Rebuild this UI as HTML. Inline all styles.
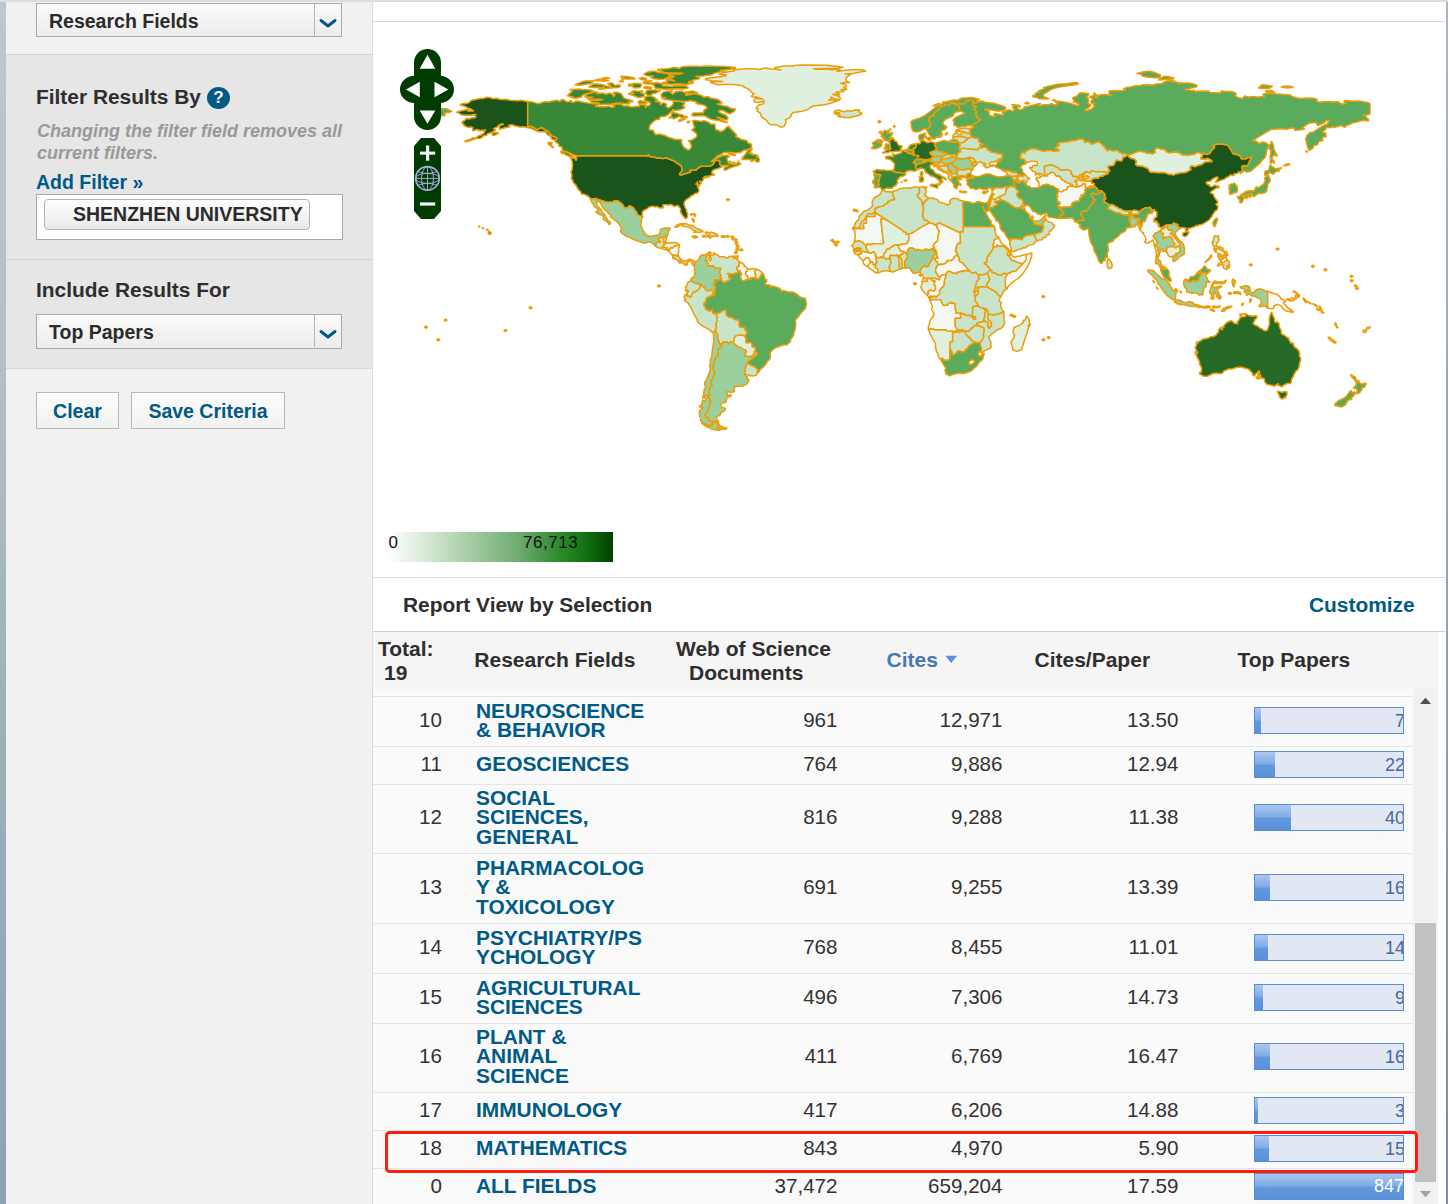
<!DOCTYPE html>
<html lang="en">
<head>
<meta charset="utf-8">
<title>Essential Science Indicators</title>
<style>
html,body{margin:0;padding:0;}
body{width:1448px;height:1204px;position:relative;overflow:hidden;background:#fff;font-family:"Liberation Sans",sans-serif;color:#333;}
.abs{position:absolute;}
#topstrip{left:0;top:0;width:1448px;height:2px;background:#dddddd;}
#leftstrip{left:0;top:2px;width:6px;height:1202px;background:linear-gradient(#bcc8d0 0%,#b2c0c9 30%,#9fb0bb 58%,#8fa2ae 100%);}
#side{left:6px;top:2px;width:366px;height:1202px;background:#f1f1f1;}
#sideline{left:372px;top:2px;width:1px;height:1202px;background:#dcdcdc;}
.sec{left:6px;width:366px;background:#e6e6e6;border-top:1px solid #d2d2d2;}
.sel{left:36px;width:304px;height:32px;border:1px solid #a9a9a9;background:linear-gradient(#fbfbfb,#ececec);}
.sel .t{position:absolute;left:12px;top:1px;line-height:33px;font-size:19.5px;font-weight:bold;color:#2b2b2b;white-space:nowrap;}
.sel .d{position:absolute;left:277px;top:0;width:1px;height:32px;background:#b5b5b5;}
.sel svg{position:absolute;left:281px;top:14px;}
.h{font-size:20.9px;font-weight:bold;color:#2e2e2e;white-space:nowrap;line-height:24px;}
.lnk{color:#005a87;font-weight:bold;white-space:nowrap;}
.btn{top:392px;height:35px;border:1px solid #b9b9b9;background:linear-gradient(#fdfdfd,#f1f1f1);font-size:19.5px;line-height:36px;text-align:center;}
.num{font-size:20.6px;color:#333;white-space:nowrap;line-height:24px;text-align:right;}
.fld{left:476px;font-size:20.9px;line-height:19.4px;font-weight:bold;color:#005a87;white-space:nowrap;}
.th{font-size:21px;font-weight:bold;color:#2e2e2e;white-space:nowrap;line-height:24px;}
.rl{left:373px;width:1040px;height:1px;background:#e6e6e6;}
.bar{left:1254px;width:148px;height:25px;border:1px solid #5c8dd3;background:#e1e7f3;overflow:hidden;}
.bar i{position:absolute;left:0;top:0;height:25px;background:linear-gradient(#a9c8ef 0%,#7fabe6 48%,#6298dd 52%,#5a92da 100%);}
.bar b{position:absolute;right:-2px;top:0;line-height:26px;font-size:18px;font-weight:normal;color:#456a9e;}
</style>
</head>
<body>
<div class="abs" id="side"></div>
<div class="abs" id="topstrip"></div>
<div class="abs" id="leftstrip"></div>
<div class="abs" id="sideline"></div>

<!-- sidebar -->
<div class="abs sel" style="top:3px;"><span class="t">Research Fields</span><span class="d"></span><svg width="20" height="12" viewBox="0 0 20 12"><path d="M3 2.5 L10 8 L17 2.5" fill="none" stroke="#005a87" stroke-width="3" stroke-linecap="round" stroke-linejoin="round"/></svg></div>
<div class="abs sec" style="top:54px;height:314px;"></div>
<div class="abs h" style="left:36px;top:85px;">Filter Results By</div>
<div class="abs" style="left:207px;top:87px;width:23px;height:22px;border-radius:50%;background:#005a87;color:#fff;font-weight:bold;font-size:17px;line-height:22px;text-align:center;">?</div>
<div class="abs" style="left:37px;top:121px;width:320px;font-size:18px;line-height:21.5px;font-style:italic;font-weight:bold;color:#999;">Changing the filter field removes all current filters.</div>
<div class="abs lnk" style="left:36px;top:170px;font-size:19.5px;line-height:24px;">Add Filter »</div>
<div class="abs" style="left:36px;top:194px;width:305px;height:44px;border:1px solid #a9a9a9;background:#fff;"></div>
<div class="abs" style="left:44px;top:199px;width:264px;height:29px;border:1px solid #b4b4b4;border-radius:4px;background:linear-gradient(#ffffff,#e9e9e9);font-size:19.5px;font-weight:bold;color:#2b2b2b;line-height:29px;white-space:nowrap;"><span style="position:absolute;left:28px;">SHENZHEN UNIVERSITY</span></div>
<div class="abs" style="left:6px;top:259px;width:366px;height:1px;background:#d2d2d2;"></div>
<div class="abs h" style="left:36px;top:278px;">Include Results For</div>
<div class="abs sel" style="top:314px;height:33px;"><span class="t">Top Papers</span><span class="d"></span><svg width="20" height="12" viewBox="0 0 20 12"><path d="M3 2.5 L10 8 L17 2.5" fill="none" stroke="#005a87" stroke-width="3" stroke-linecap="round" stroke-linejoin="round"/></svg></div>
<div class="abs" style="left:6px;top:368px;width:366px;height:1px;background:#d8d8d8;"></div>
<div class="abs btn lnk" style="left:36px;width:81px;">Clear</div>
<div class="abs btn lnk" style="left:131px;width:152px;">Save Criteria</div>

<!-- main panel -->
<div class="abs" style="left:373px;top:21px;width:1071px;height:1px;background:#d6d6d6;"></div>
<div class="abs" style="left:1446px;top:2px;width:2px;height:1202px;background:linear-gradient(#adb6be,#7f8e9a);"></div>

<svg class="abs" style="left:373px;top:22px;" width="1070" height="500" viewBox="373 22 1070 500">
<g stroke="#ee9d06" stroke-width="1.5" stroke-linejoin="round">
<path fill="#1a541b" d="M570.5,157.4L574.7,158.2L576.0,160.3L576.8,158.7L575.5,155.8L648.0,155.8L648.0,154.8L648.9,154.8L649.4,156.2L650.2,156.7L652.0,156.8L654.7,157.3L657.3,158.1L659.4,157.7L662.6,158.4L663.5,158.4L665.8,157.7L675.0,161.3L675.3,162.0L675.9,162.3L675.7,162.5L676.4,162.6L676.9,162.4L677.1,163.0L677.6,163.4L678.3,163.4L678.7,163.7L678.4,164.2L681.1,165.4L681.7,167.8L682.2,170.1L681.4,171.6L680.2,173.1L679.6,174.0L679.6,174.2L679.8,174.6L680.7,175.0L681.4,175.0L684.4,173.7L687.1,173.2L690.7,171.8L690.4,170.9L690.0,170.3L691.2,169.9L696.2,169.9L697.2,168.7L700.1,166.8L701.3,166.3L710.1,166.3L710.4,165.7L712.3,165.1L713.3,164.0L714.0,161.9L716.0,159.9L716.9,160.6L718.7,160.2L719.8,160.9L719.8,164.5L721.5,166.0L722.0,166.8L719.2,168.1L716.5,169.0L713.7,169.8L712.3,171.3L711.9,171.9L711.9,173.3L712.7,174.7L713.8,174.8L713.5,173.8L714.4,174.4L714.1,175.1L712.4,175.6L711.1,175.5L709.2,176.0L706.5,176.2L704.3,177.0L708.2,176.5L708.9,177.0L705.2,177.8L703.6,177.8L703.7,177.5L702.9,178.2L703.6,178.3L703.1,180.2L701.2,182.2L701.0,181.5L700.4,181.4L699.5,180.8L700.1,182.2L700.7,182.6L700.8,183.6L699.9,184.6L698.5,186.7L698.2,186.6L699.0,184.8L697.7,183.8L697.4,181.7L696.9,182.8L697.4,184.5L695.7,184.1L697.5,184.9L697.6,187.4L698.4,187.6L698.6,188.5L699.0,191.1L697.4,193.1L694.6,193.8L692.9,195.4L691.6,195.6L690.3,196.5L689.9,197.4L687.0,199.1L685.5,200.4L684.3,201.9L683.9,203.8L684.4,205.6L685.2,207.8L686.4,209.7L686.4,210.8L687.6,213.9L687.6,215.6L687.5,216.6L686.8,218.2L686.0,218.6L684.7,218.3L684.3,217.1L683.3,216.5L681.9,214.3L680.7,212.2L680.3,211.2L680.8,209.5L680.1,208.0L678.1,205.8L677.0,205.4L674.4,206.6L673.9,206.5L672.7,205.3L671.0,204.6L668.0,205.0L665.7,204.7L663.7,204.8L662.6,205.3L663.1,206.0L663.1,207.0L663.6,207.5L663.1,207.9L662.1,207.5L661.2,208.0L659.3,207.9L657.3,206.5L655.0,206.9L653.1,206.3L651.5,206.4L649.3,207.0L646.9,209.0L644.3,210.1L642.8,211.4L642.2,212.6L642.2,214.4L642.3,215.6L642.8,216.5L641.8,216.6L639.9,216.0L637.9,215.2L637.2,214.0L636.6,212.1L635.0,210.6L634.1,209.1L632.8,207.3L631.0,206.3L628.8,206.3L627.2,208.4L625.0,207.6L623.6,206.8L623.0,205.4L622.1,204.0L620.5,202.8L619.2,202.0L618.2,201.1L613.7,201.1L613.7,202.2L611.6,202.2L606.4,202.2L600.4,200.3L596.4,199.0L596.7,198.5L593.4,198.8L590.4,199.0L589.9,197.7L588.2,196.2L587.0,195.9L586.7,195.1L585.3,195.0L584.3,194.3L581.9,194.0L581.2,193.6L580.9,192.1L578.4,189.5L576.1,185.9L576.3,185.3L575.1,184.4L573.1,182.2L572.7,180.0L571.3,178.6L571.9,176.4L571.8,174.2L571.0,172.2L572.0,169.7L572.6,165.0L572.1,161.4L571.3,159.2L570.5,158.0ZM527.7,101.5L527.7,126.2L530.3,126.2L532.9,127.0L534.7,128.1L537.1,129.8L539.6,128.4L542.2,127.5L543.6,128.9L545.4,130.0L547.8,131.1L549.4,133.0L552.1,136.0L556.6,137.7L556.7,139.3L555.2,140.6L553.7,139.6L551.4,138.8L550.7,136.5L547.3,134.4L545.9,131.9L543.4,131.7L539.2,131.7L536.1,130.9L530.7,128.2L528.2,127.7L523.6,126.8L520.0,127.0L514.8,125.8L511.7,124.7L508.8,125.2L509.3,127.0L507.9,127.2L504.8,127.7L502.5,128.6L499.6,129.2L499.2,127.6L500.4,125.0L503.2,124.3L502.5,123.6L499.1,125.0L497.4,126.8L493.6,128.7L495.5,130.0L493.0,131.8L490.2,132.9L487.6,133.7L486.9,134.9L482.8,136.2L482.0,137.5L478.9,138.6L477.1,138.4L474.7,139.1L472.0,140.0L469.8,140.9L465.3,141.7L464.9,141.2L467.8,140.0L470.3,139.2L473.2,137.7L476.4,137.4L477.7,136.4L481.3,134.8L481.9,134.3L483.9,133.3L484.3,131.3L485.6,129.8L482.6,130.6L481.8,130.1L480.3,131.1L478.6,129.8L477.9,130.7L476.9,129.4L474.3,130.4L472.7,130.4L472.5,128.9L473.0,127.9L471.3,127.0L467.9,127.5L465.7,126.3L463.8,125.6L463.8,124.2L461.8,123.0L462.8,121.5L465.0,120.1L465.9,118.7L468.0,118.5L469.8,118.9L471.9,117.7L473.9,117.9L475.9,117.1L475.4,115.9L473.9,115.4L475.8,114.4L474.2,114.4L471.5,115.0L470.6,115.6L468.6,115.0L464.9,115.3L461.0,114.7L459.9,113.6L456.6,112.1L460.3,111.0L466.2,109.7L468.3,109.7L467.9,111.0L473.5,110.9L471.3,109.3L468.1,108.3L466.3,107.0L463.7,105.9L460.1,105.0L461.6,103.7L466.3,103.6L469.6,102.4L470.2,101.1L472.9,99.9L475.4,99.5L480.4,98.4L482.8,98.6L486.9,97.2L490.8,97.7L492.7,98.9L493.9,98.4L498.3,98.5L498.2,99.1L502.2,99.6L504.9,99.3L510.4,100.2L515.4,100.4L517.4,100.7L520.9,100.3L524.9,101.1L527.7,101.5ZM489.4,231.4L491.0,232.7L491.5,233.2L489.4,234.8L488.2,232.7L488.6,231.4ZM486.5,229.3L488.4,229.8L487.3,230.3L486.5,229.7ZM482.3,227.7L483.9,228.5L482.9,228.5ZM478.4,226.4L479.7,226.1L479.5,226.9L478.5,226.7ZM496.2,134.6L493.6,135.6L492.3,134.8L491.8,133.5L494.1,132.7L497.3,132.5L498.6,133.3Z"/>
<path fill="#388838" d="M527.7,101.5L532.7,102.1L536.8,103.4L539.5,103.6L541.8,102.5L545.0,101.7L548.9,102.0L552.8,100.9L557.2,100.2L558.9,101.3L560.9,100.7L561.5,99.5L563.3,99.7L567.7,102.1L571.2,100.3L571.6,102.3L574.8,101.9L575.8,101.1L579.0,101.2L583.0,102.3L589.1,103.3L592.7,103.8L595.3,103.6L598.8,104.9L595.2,106.2L599.9,106.8L607.0,106.5L609.2,106.0L612.0,107.6L614.9,106.3L612.2,105.2L613.9,104.3L617.1,104.1L619.2,103.9L621.3,104.5L623.9,105.9L626.9,105.7L631.5,106.9L635.6,106.5L639.4,106.5L639.1,104.9L641.4,104.4L645.5,105.3L645.5,107.8L647.2,105.7L649.3,105.8L650.5,103.2L647.7,101.5L644.6,100.5L644.8,97.6L647.9,95.7L651.4,96.1L654.0,97.3L657.6,100.2L655.2,101.5L660.1,102.0L660.1,104.7L663.6,102.7L666.8,104.3L666.0,106.3L668.5,108.1L671.2,106.2L673.2,103.9L673.3,101.0L677.0,101.2L680.9,101.6L684.4,102.9L684.6,104.2L682.7,105.6L684.5,107.0L684.2,108.3L679.0,110.1L675.4,110.5L672.7,109.7L671.9,111.1L669.4,113.3L668.6,114.4L665.5,116.2L661.8,116.4L659.7,117.5L659.5,119.2L656.5,119.5L653.3,121.7L650.4,124.6L649.4,126.7L649.3,129.7L653.1,130.2L654.3,132.6L655.5,134.6L659.2,134.1L664.1,135.2L666.7,136.2L668.6,137.5L671.9,138.2L674.7,139.3L679.0,139.5L681.8,139.7L681.4,142.0L682.2,144.6L684.1,147.5L688.0,150.0L690.1,149.2L691.5,146.5L690.1,142.3L688.2,140.9L692.4,139.7L695.4,137.9L696.9,136.1L696.7,134.3L694.9,132.1L691.7,130.1L694.8,127.4L693.7,125.0L692.8,120.9L694.6,120.3L699.1,121.0L701.8,121.2L704.0,120.6L706.4,121.4L709.6,122.9L710.4,124.0L715.1,124.2L715.0,126.4L715.9,129.7L718.3,130.1L720.2,131.7L724.0,130.2L726.5,127.3L728.3,126.1L730.3,128.4L733.7,131.8L736.6,134.9L735.6,136.6L739.0,138.0L741.4,139.6L745.6,140.2L747.3,141.1L748.3,143.3L750.4,143.6L751.4,144.6L751.6,147.6L749.7,148.6L747.8,149.5L743.5,150.4L740.2,152.6L735.8,153.0L730.2,152.4L726.2,152.4L723.5,152.6L721.3,154.5L717.9,155.6L714.2,159.1L711.2,161.5L713.4,161.1L717.6,157.7L723.1,155.5L727.0,155.2L729.3,156.5L726.8,158.3L727.7,161.1L728.6,163.1L732.0,164.4L736.3,164.0L738.9,161.0L739.1,163.0L740.8,163.9L737.6,165.6L731.8,167.2L729.1,168.2L726.2,170.1L724.2,169.9L724.1,167.7L728.7,165.6L724.5,165.6L721.5,166.0L719.8,164.5L719.8,160.9L718.7,160.2L716.9,160.6L716.0,159.9L714.0,161.9L713.3,164.0L712.3,165.1L710.4,165.7L710.1,166.3L701.3,166.3L700.1,166.8L697.2,168.7L696.2,169.9L691.2,169.9L690.0,170.3L690.4,170.9L690.7,171.8L687.1,173.2L684.4,173.7L681.4,175.0L680.7,175.0L679.8,174.6L679.6,174.2L679.6,174.0L680.2,173.1L681.4,171.6L682.2,170.1L681.7,167.8L681.1,165.4L678.4,164.2L678.7,163.7L678.3,163.4L677.6,163.4L677.1,163.0L676.9,162.4L676.4,162.6L675.7,162.5L675.9,162.3L675.3,162.0L675.0,161.3L665.8,157.7L663.5,158.4L662.6,158.4L659.4,157.7L657.3,158.1L654.7,157.3L652.0,156.8L650.2,156.7L649.4,156.2L648.9,154.8L648.0,154.8L648.0,155.8L575.5,155.8L574.4,155.0L570.0,153.3L568.1,152.1L563.3,151.0L561.9,148.7L562.2,147.1L558.9,146.0L558.4,143.9L555.3,141.9L555.2,140.6L556.7,139.3L556.6,137.7L552.1,136.0L549.4,133.0L547.8,131.1L545.4,130.0L543.6,128.9L542.2,127.5L539.6,128.4L537.1,129.8L534.7,128.1L532.9,127.0L530.3,126.2L527.7,126.2ZM573.9,157.4L569.5,156.6L567.2,155.3L564.9,154.5L564.5,153.7L561.6,153.2L560.8,151.9L560.9,151.2L563.7,151.8L565.3,152.2L567.8,152.4L568.7,153.3L570.0,154.5L572.6,155.7ZM549.5,142.7L552.0,142.4L551.4,145.3L553.5,147.4L552.4,147.4L550.8,146.4L549.9,145.1L548.6,144.3L548.2,143.1L548.2,142.2ZM751.8,149.8L750.5,151.4L748.7,153.7L750.5,152.8L752.2,153.4L751.3,154.2L753.7,155.0L754.7,154.4L757.3,155.2L756.5,157.1L758.4,156.6L758.6,158.0L759.6,159.7L758.5,162.0L757.3,162.1L755.6,161.6L756.1,159.4L755.4,159.1L752.4,161.4L750.8,161.3L752.6,160.0L750.1,159.4L747.3,159.6L742.2,159.5L741.8,158.7L743.4,157.8L742.3,157.1L744.5,155.5L747.2,151.3L748.8,149.8L751.1,148.9L752.3,149.0ZM728.5,153.5L729.3,153.3L732.8,154.0L735.5,155.1L735.5,155.5L734.3,155.6L730.9,154.8ZM729.8,161.1L730.7,162.3L732.6,162.6L735.0,162.5L733.7,163.6L732.7,163.8L729.4,162.7L728.8,161.8ZM672.1,112.0L674.2,112.1L674.7,113.3L676.1,112.9L677.6,113.6L680.5,114.4L683.5,115.3L683.7,116.5L685.6,116.3L687.5,117.2L685.2,118.0L681.1,117.4L679.6,116.2L677.0,117.6L673.3,119.0L672.4,117.4L668.9,117.7L671.1,116.4L671.5,114.3L672.4,111.9ZM682.6,119.2L685.2,119.1L681.2,120.9L678.6,121.2L679.4,119.4ZM687.3,121.7L689.6,121.3L688.8,122.8L687.0,122.5ZM727.4,122.5L723.7,122.0L719.3,120.7L715.1,119.9L711.4,119.4L708.3,118.0L705.1,115.9L701.4,115.4L698.3,115.7L693.8,115.9L691.6,115.0L693.3,113.1L698.3,113.1L703.5,112.7L703.8,110.4L707.1,107.9L706.4,106.7L705.4,105.8L701.3,104.5L696.0,103.6L697.7,103.0L694.9,101.3L692.6,101.2L690.5,100.3L689.1,101.1L684.4,101.4L674.8,100.8L669.3,100.0L665.0,99.6L662.8,98.7L665.6,97.5L661.8,97.5L661.0,94.8L663.0,92.5L665.7,91.4L672.5,90.7L670.6,92.4L672.7,94.1L675.1,92.0L681.7,90.9L686.2,93.6L685.8,95.3L691.0,94.6L693.5,93.5L699.3,94.8L702.9,96.1L703.3,97.2L708.2,96.6L710.9,98.3L717.2,99.3L719.5,100.4L722.0,102.8L717.2,104.1L723.4,105.8L727.5,106.4L731.3,108.8L735.4,109.0L734.6,110.8L730.0,113.8L726.8,112.7L722.6,110.2L719.2,110.5L718.9,112.0L721.7,113.6L725.2,114.8L726.3,115.5L728.0,118.1L727.1,120.0L723.8,119.2L717.2,117.1L720.9,119.4L723.7,121.0L725.8,121.8ZM685.4,92.1L692.8,91.1L697.5,92.6L697.6,93.3L694.9,93.2L692.0,93.2L689.1,93.5L688.4,93.4L685.5,92.0ZM595.5,92.0L598.1,92.5L596.8,93.8L602.7,93.0L606.3,94.3L609.3,93.0L611.7,93.8L613.8,96.4L615.1,95.3L613.3,92.6L615.6,92.2L618.2,92.6L621.2,93.7L622.8,96.3L623.6,98.1L628.0,99.4L632.7,100.7L632.5,101.8L628.2,102.0L629.8,103.0L628.9,104.0L624.2,103.6L619.7,102.9L616.6,103.0L611.7,103.9L605.1,104.3L600.4,104.6L599.0,103.3L595.4,102.6L593.0,102.9L589.8,100.8L591.6,100.5L595.6,100.1L599.3,100.2L602.7,99.7L597.7,99.1L592.1,99.4L588.4,99.3L587.0,98.3L593.0,97.3L589.0,97.3L584.4,96.6L586.6,94.7L588.4,93.6L595.5,92.0ZM567.4,95.7L573.4,97.3L574.7,98.4L573.4,97.2L567.3,95.8L568.4,94.7L570.2,92.8L572.5,91.1L569.9,89.5L578.8,89.0L582.6,89.6L589.2,89.7L591.8,90.5L594.6,91.6L591.3,92.3L584.9,94.1L581.6,95.9L581.6,97.1L574.7,98.4ZM634.3,90.7L637.4,91.3L642.1,90.9L642.9,91.6L640.4,92.9L644.4,94.0L643.9,96.4L639.6,97.4L637.1,97.2L635.3,96.2L628.8,94.1L628.8,93.3L634.2,93.6L631.3,91.9L634.4,90.6ZM653.2,93.5L650.4,95.4L647.4,95.3L645.7,93.0L645.8,91.7L647.1,90.6L649.8,89.9L655.2,90.0L660.2,90.6L656.3,92.9ZM637.9,102.3L640.0,100.5L644.2,101.5L646.9,103.1L645.0,104.0L641.6,103.2L639.5,103.5ZM592.8,87.6L588.9,87.1L592.4,84.5L594.9,83.7L602.3,84.6L607.0,86.2L611.5,86.4L607.8,83.8L610.2,82.9L612.9,83.2L613.8,84.5L614.8,85.4L617.1,84.9L619.9,85.1L620.4,86.3L618.8,87.6L609.9,88.0L603.3,89.1L599.3,89.2L598.9,88.3L604.4,87.2L592.5,87.5ZM633.1,83.4L639.0,83.4L641.3,84.3L641.4,85.7L640.1,87.6L635.8,87.9L633.0,87.4L633.1,85.9L628.8,86.1L628.6,84.1L631.4,84.2L635.4,83.3ZM644.5,86.6L652.1,87.6L650.6,88.7L646.8,88.5L643.7,87.8ZM656.3,82.6L662.0,83.7L662.6,85.8L671.1,86.3L675.2,85.8L680.6,85.6L684.8,85.7L687.6,86.7L688.2,87.8L686.6,88.5L682.7,89.1L679.3,88.8L671.8,89.1L666.4,89.2L662.2,88.9L655.2,88.0L654.3,86.6L654.0,85.3L651.4,84.1L645.9,83.8L642.9,83.0L643.8,81.9L649.3,82.1L652.2,82.9L657.3,82.9ZM718.0,66.3L725.0,66.5L730.6,66.9L735.4,67.6L735.3,68.3L728.9,69.4L722.6,69.9L720.2,70.5L725.9,70.5L719.7,72.1L715.4,72.9L710.9,75.0L705.5,75.5L703.9,76.0L695.9,76.3L699.5,76.6L697.7,77.1L699.9,78.3L697.4,79.3L693.3,80.0L692.1,81.0L688.4,81.8L688.8,82.4L693.3,82.3L693.3,82.9L686.3,84.5L679.5,83.8L671.8,84.2L667.9,83.9L662.9,83.7L662.6,82.5L667.4,81.9L666.1,80.0L667.7,79.8L674.7,80.9L671.2,79.3L666.9,78.8L669.0,77.7L673.7,77.1L674.4,76.2L670.7,75.2L669.6,73.8L676.8,73.9L678.9,74.2L682.9,73.3L677.0,73.0L667.9,73.1L663.2,72.2L661.0,71.2L658.0,70.4L657.4,69.5L661.3,69.0L664.4,68.9L669.5,68.5L673.4,67.5L676.6,67.7L679.5,68.4L681.4,67.0L684.9,66.6L689.6,66.3L697.6,66.2L699.0,66.5L706.6,66.0L712.3,66.2ZM657.4,69.5L667.3,73.7L669.4,75.4L672.6,76.2L668.9,77.0L664.1,79.0L659.5,79.2L654.0,78.8L651.2,77.8L651.2,76.8L653.3,76.1L648.5,76.1L645.6,75.2L644.0,74.1L645.8,72.9L647.6,72.1L650.3,71.9L649.1,71.3L655.2,71.2L658.6,72.6L663.0,73.1L667.3,73.6ZM626.1,76.6L633.2,77.6L635.1,78.9L627.7,78.9L621.7,78.7L624.3,77.9L621.2,77.4L620.9,76.3ZM642.4,77.6L646.9,78.7L645.8,80.3L641.4,79.5L639.0,78.4ZM575.2,84.7L579.7,82.6L585.2,81.0L589.1,81.0L592.8,80.8L592.5,82.6L590.4,83.7L588.1,83.7L583.1,84.8L578.9,85.2ZM592.8,80.8L599.9,80.5L608.6,80.5L603.7,81.3L599.9,80.5L603.8,79.7L606.7,78.7L609.9,78.2L606.7,77.6L602.5,78.3L601.2,78.7ZM622.2,80.0L623.5,81.8L619.6,81.8L620.6,80.8ZM646.3,81.0L651.9,80.7L651.5,81.0L645.4,80.9Z"/>
<path fill="#dff0de" d="M775.0,67.6L783.8,66.0L793.0,66.1L796.4,65.2L805.6,64.9L826.6,65.2L843.0,67.3L838.2,68.3L828.1,68.4L814.0,68.7L815.3,69.2L824.6,68.9L832.5,69.8L837.6,69.0L839.8,69.9L836.9,71.5L843.6,70.5L856.3,69.5L864.2,70.0L865.7,71.1L855.0,73.0L853.5,73.6L845.1,74.0L851.2,74.1L848.1,76.1L846.0,77.8L846.1,80.7L849.3,82.4L845.1,82.5L840.8,83.3L845.7,84.7L846.3,86.9L843.5,87.2L846.9,89.4L841.1,89.6L844.1,90.7L843.2,91.6L839.5,92.0L835.9,92.0L839.2,93.8L839.2,95.0L834.0,93.9L832.7,94.6L836.2,95.3L839.7,96.9L840.6,99.0L836.0,99.5L833.9,98.5L830.7,97.0L831.6,98.8L828.6,100.1L835.5,100.2L839.1,100.4L832.0,102.7L824.9,104.7L817.2,105.6L814.3,105.7L811.6,106.7L808.0,109.4L802.3,111.3L800.5,111.4L797.0,112.0L793.3,112.6L791.0,114.3L791.0,116.1L789.6,117.8L785.4,119.9L786.4,122.0L785.2,124.2L783.9,126.7L780.2,126.9L776.3,124.7L771.1,124.7L768.5,123.3L766.8,120.7L762.2,117.4L760.9,115.7L760.5,113.4L756.9,111.0L757.9,109.0L756.1,108.1L758.7,105.0L762.6,104.1L763.7,103.0L764.2,100.9L761.2,101.8L759.8,102.2L757.4,102.6L754.2,101.7L754.1,100.0L755.1,98.6L757.5,98.5L762.9,99.2L758.4,97.6L756.0,96.7L753.4,97.0L751.2,96.4L754.1,93.9L752.5,93.0L750.5,91.1L747.3,88.4L744.0,87.3L744.0,86.2L736.9,84.7L731.4,84.5L724.4,84.6L718.0,84.8L714.9,84.0L710.4,82.3L717.2,81.5L722.5,81.4L711.3,80.7L705.4,79.6L705.7,78.6L715.7,77.3L725.3,76.1L726.3,75.1L719.2,74.2L721.5,73.1L730.6,71.3L734.4,71.0L733.3,69.8L739.5,69.2L747.6,68.7L755.7,68.7L758.5,69.5L765.5,68.1L771.8,69.1L775.4,69.3L780.9,70.1L774.7,68.7Z"/>
<path fill="#c8e4c9" d="M859.6,110.0L859.0,111.7L862.0,113.5L858.6,115.5L851.0,117.3L848.8,117.8L845.3,117.4L838.0,116.6L840.6,115.4L834.8,114.1L839.5,113.6L839.4,112.8L833.9,112.2L835.7,110.5L839.7,110.1L843.7,111.9L847.7,110.5L851.0,111.2L855.3,109.8Z"/>
<path fill="#9bcf9b" d="M590.4,199.0L593.4,198.8L596.7,198.5L596.4,199.0L600.4,200.3L606.4,202.2L611.6,202.2L613.7,202.2L613.7,201.1L618.2,201.1L619.2,202.0L620.5,202.8L622.1,204.0L623.0,205.4L623.6,206.8L625.0,207.6L627.2,208.4L628.8,206.3L631.0,206.3L632.8,207.3L634.1,209.1L635.0,210.6L636.6,212.1L637.2,214.0L637.9,215.2L639.9,216.0L641.8,216.6L642.8,216.5L641.8,218.8L641.4,220.7L641.1,224.2L640.9,225.5L641.4,226.9L642.2,228.2L642.7,230.2L644.4,232.2L645.1,233.7L646.1,235.0L648.9,235.7L649.9,236.8L652.2,236.1L654.2,235.8L656.2,235.3L657.9,234.9L659.5,233.8L660.2,232.3L660.4,230.1L660.8,229.3L662.6,228.6L665.4,228.0L667.7,228.1L669.3,227.9L669.9,228.4L669.8,229.7L668.4,231.2L667.8,232.8L668.3,233.3L667.9,234.4L667.2,236.5L666.6,235.8L666.0,235.9L665.5,235.9L664.6,237.5L664.1,237.2L663.8,237.3L663.8,237.7L661.4,237.6L658.9,237.6L658.9,239.1L657.8,239.1L658.7,240.0L659.7,240.6L660.0,241.2L660.4,241.3L660.4,242.2L657.0,242.2L655.7,244.4L656.1,244.9L655.8,245.5L655.7,246.2L652.7,243.4L651.4,242.6L649.3,241.9L647.8,242.1L645.7,243.1L644.3,243.3L642.5,242.6L640.5,242.1L638.1,240.9L636.1,240.6L633.1,239.3L630.9,238.1L630.3,237.4L628.8,237.2L626.1,236.4L625.0,235.2L622.2,233.7L620.9,232.1L620.3,230.8L621.2,230.5L620.9,229.8L621.5,229.1L621.5,228.2L620.6,227.0L620.4,226.0L619.5,224.7L617.2,222.0L614.5,220.0L613.3,218.4L611.0,217.3L610.5,216.6L610.9,215.0L609.6,214.4L608.1,213.1L607.4,211.3L606.0,211.1L604.5,209.7L603.2,208.4L603.1,207.6L601.7,205.6L600.8,203.6L600.8,202.6L598.9,201.6L598.0,201.7L596.5,201.0L596.1,202.0L596.6,203.3L596.8,205.3L597.7,206.3L599.7,208.1L600.1,208.8L600.5,209.0L600.8,209.9L601.3,209.8L601.8,211.5L602.6,212.2L603.2,213.1L604.8,214.4L605.7,216.9L606.5,218.0L607.2,219.2L607.3,220.6L608.6,220.7L609.7,221.9L610.6,223.1L610.6,223.5L609.5,224.5L609.0,224.5L608.3,222.9L606.6,221.4L604.7,220.2L603.4,219.5L603.4,217.6L603.0,216.1L601.8,215.3L600.0,214.2L599.6,214.5L599.0,213.8L597.4,213.2L595.8,211.7L596.0,211.5L597.1,211.6L598.1,210.6L598.2,209.4L596.1,207.6L594.6,206.8L593.6,205.2L592.7,203.5L591.4,201.4Z"/>
<path fill="#c8e4c9" d="M655.7,246.2L655.8,245.5L656.1,244.9L655.7,244.4L657.0,242.2L660.4,242.2L660.4,241.3L660.0,241.2L659.7,240.6L658.7,240.0L657.8,239.1L658.9,239.1L658.9,237.6L661.4,237.6L663.8,237.7L663.8,239.7L663.6,242.7L664.4,242.7L665.2,243.2L665.4,242.8L666.2,243.1L665.0,244.1L663.8,244.9L663.6,245.4L663.8,245.9L663.3,246.6L662.6,246.7L662.8,247.0L662.3,247.3L661.4,248.0L661.3,248.3L660.0,247.9L658.3,247.8L657.1,247.3Z"/>
<path fill="#f4f8f4" d="M663.8,237.7L663.8,237.3L664.1,237.2L664.6,237.5L665.5,235.9L666.0,235.9L666.0,236.2L666.5,236.2L666.5,237.0L666.0,238.1L666.3,238.5L666.0,239.5L666.2,239.7L665.9,241.0L665.4,241.7L664.9,241.8L664.4,242.7L663.6,242.7L663.8,239.7Z"/>
<path fill="#dff0de" d="M667.4,249.3L667.1,249.9L665.5,249.9L664.6,249.6L663.5,249.1L662.1,248.9L661.3,248.3L661.4,248.0L662.3,247.3L662.8,247.0L662.6,246.7L663.3,246.6L664.0,246.8L664.6,247.3L665.4,247.7L665.5,248.1L666.6,247.8L667.2,248.0L667.5,248.2Z"/>
<path fill="#dff0de" d="M668.6,250.3L668.1,249.5L667.4,249.3L667.5,248.2L667.2,248.0L666.6,247.8L665.5,248.1L665.4,247.7L664.6,247.3L664.0,246.8L663.3,246.6L663.8,245.9L663.6,245.4L663.8,244.9L665.0,244.1L666.2,243.1L666.5,243.2L667.1,242.8L667.8,242.7L668.1,242.9L668.5,242.8L669.7,243.0L670.9,243.0L671.7,242.7L672.1,242.4L672.9,242.5L673.5,242.7L674.2,242.7L674.7,242.4L675.9,242.8L676.3,242.8L677.1,243.3L677.9,243.9L678.9,244.3L679.5,245.0L678.6,245.0L678.3,245.4L677.4,245.7L676.7,245.7L676.1,246.0L675.6,245.9L675.2,245.5L674.9,245.6L674.5,246.2L674.3,246.2L674.2,246.7L673.3,247.5L672.8,247.8L672.6,248.1L671.8,247.6L671.2,248.3L670.7,248.2L670.1,248.3L670.1,249.6L669.7,249.6L669.4,250.2Z"/>
<path fill="#f4f8f4" d="M672.8,255.3L671.9,254.5L670.7,253.4L670.1,252.5L669.0,251.7L667.7,250.5L668.0,250.1L668.4,250.5L668.6,250.3L669.4,250.2L669.7,249.6L670.1,249.6L670.1,248.3L670.7,248.2L671.2,248.3L671.8,247.6L672.6,248.1L672.8,247.8L673.3,247.5L674.2,246.7L674.3,246.2L674.5,246.2L674.9,245.6L675.2,245.5L675.6,245.9L676.1,246.0L676.7,245.7L677.4,245.7L678.3,245.4L678.6,245.0L679.5,245.0L679.3,245.3L679.2,245.9L679.5,246.9L678.9,247.7L678.6,248.8L678.5,249.9L678.6,250.6L678.7,251.8L678.3,252.1L678.0,253.2L678.2,253.9L677.7,254.6L677.8,255.3L678.2,255.7L677.6,256.2L676.8,256.1L676.4,255.5L675.5,255.3L674.9,255.7L673.2,255.0Z"/>
<path fill="#c8e4c9" d="M680.0,262.8L678.6,262.2L678.1,261.7L678.4,261.2L678.3,260.7L677.5,260.0L676.5,259.5L675.6,259.2L675.4,258.4L674.7,257.9L674.9,258.7L674.4,259.3L673.8,258.6L672.9,258.3L672.6,257.8L672.6,257.0L672.9,256.2L672.2,255.8L672.8,255.3L673.2,255.0L674.9,255.7L675.5,255.3L676.4,255.5L676.8,256.1L677.6,256.2L678.2,255.7L678.9,257.1L679.9,258.2L681.1,259.3L680.1,259.5L680.1,260.6L680.7,261.0L680.3,261.3L680.4,261.8L680.2,262.3Z"/>
<path fill="#c8e4c9" d="M693.4,265.5L692.5,264.7L691.9,263.3L692.6,262.6L691.9,262.4L691.4,261.5L690.1,260.8L689.0,261.0L688.4,261.9L687.4,262.5L686.8,262.6L686.5,263.2L687.8,264.6L687.1,264.9L686.7,265.3L685.5,265.5L685.0,263.9L684.7,264.3L683.8,264.2L683.3,263.1L682.2,262.9L681.5,262.6L680.4,262.6L680.3,263.2L680.0,262.8L680.2,262.3L680.4,261.8L680.3,261.3L680.7,261.0L680.1,260.6L680.1,259.5L681.1,259.3L682.1,260.2L682.0,260.8L683.1,260.9L683.3,260.7L684.0,261.3L685.3,261.2L686.4,260.5L688.0,260.0L688.9,259.2L690.4,259.3L690.3,259.6L691.7,259.7L692.9,260.1L693.8,260.9L694.8,261.6L694.4,262.0L695.0,263.6L694.5,264.4L693.7,264.2Z"/>
<path fill="#c8e4c9" d="M681.8,223.5L684.1,223.7L686.2,223.8L688.6,224.7L689.7,225.6L692.1,225.3L693.1,225.9L695.3,227.6L696.9,228.7L697.8,228.7L699.3,229.2L699.2,230.0L701.1,230.1L703.1,231.2L702.8,231.8L701.0,232.1L699.3,232.3L697.5,232.1L693.7,232.3L695.4,230.8L694.4,230.2L692.7,230.0L691.8,229.2L691.2,227.7L689.7,227.8L687.2,227.1L686.4,226.6L683.0,226.2L682.1,225.6L683.1,225.0L680.5,224.9L678.6,226.2L677.5,226.3L677.2,226.9L675.9,227.2L674.8,226.9L676.1,226.1L676.7,225.2L677.9,224.6L679.2,224.1Z"/>
<path fill="#dff0de" d="M705.7,232.1L709.6,232.7L709.8,234.1L709.6,235.1L708.9,235.5L709.6,236.3L709.6,237.1L707.8,236.6L706.6,236.8L705.0,236.6L703.8,237.1L702.3,236.3L702.6,235.4L705.0,235.8L707.0,236.0L707.9,235.4L706.7,234.3L706.7,233.3L705.1,232.9Z"/>
<path fill="#c8e4c9" d="M709.6,232.7L709.9,232.2L711.9,232.2L713.5,232.9L714.2,232.8L714.6,233.8L716.1,233.7L716.0,234.5L717.2,234.6L718.4,235.6L717.5,236.6L716.2,236.1L715.0,236.2L714.2,236.0L713.7,236.5L712.7,236.7L712.3,236.0L711.4,236.4L710.4,238.2L709.7,237.8L709.6,237.1L709.6,236.3L708.9,235.5L709.6,235.1L709.8,234.1Z"/>
<path fill="#dff0de" d="M694.2,235.9L695.9,236.1L697.3,236.7L697.8,237.5L695.9,237.5L695.1,238.0L693.7,237.5L692.2,236.6L692.5,236.0Z"/>
<path fill="#dff0de" d="M723.8,235.8L725.1,236.0L725.6,236.6L724.9,237.2L723.0,237.2L721.4,237.3L721.3,236.2L721.6,235.8Z"/>
<path fill="#f4f8f4" d="M694.3,222.1L693.6,222.2L693.0,220.7L692.0,219.9L692.5,218.2L693.3,218.4L694.3,220.5ZM693.5,214.7L690.7,215.1L690.5,214.1L691.7,213.9L693.4,214.0ZM695.7,214.6L695.2,216.5L694.7,216.1L694.8,214.8L693.6,213.7L693.6,213.4Z"/>
<path fill="#c8e4c9" d="M735.9,256.2L737.4,255.8L737.9,255.9L737.8,257.9L735.6,258.2L735.2,257.9L735.9,257.2Z"/>
<path fill="#9bcf9b" d="M699.9,284.8L698.8,284.2L697.5,283.3L696.8,283.7L694.6,283.4L693.9,282.2L693.4,282.3L690.8,280.8L690.5,280.0L691.4,279.8L691.3,278.4L691.9,277.5L693.2,277.3L694.3,275.7L695.3,274.3L694.4,273.7L694.9,272.1L694.3,269.8L694.8,269.0L694.4,266.8L693.4,265.5L693.7,264.2L694.5,264.4L695.0,263.6L694.4,262.0L694.8,261.6L696.1,261.7L698.1,259.9L699.2,259.6L699.2,258.8L699.7,256.5L701.2,255.3L702.8,255.3L703.0,254.7L705.1,254.9L707.1,253.6L708.2,253.0L709.4,251.8L710.4,251.9L711.0,252.6L710.6,253.5L708.9,253.9L708.2,255.2L707.2,256.0L706.4,257.0L706.1,258.8L705.4,260.4L706.7,260.5L707.1,261.8L707.6,262.3L707.8,263.4L707.5,264.4L707.6,264.9L708.3,265.1L708.9,266.1L712.3,265.8L713.8,266.1L715.6,268.4L716.7,268.1L718.6,268.3L720.1,267.9L721.0,268.4L720.5,269.8L720.0,270.7L719.8,272.6L720.3,274.3L721.0,275.1L721.1,275.7L719.8,277.0L720.7,277.6L721.4,278.5L722.2,281.1L721.7,281.4L721.2,279.9L720.5,279.0L719.6,280.0L714.5,279.9L714.6,281.5L716.1,281.8L716.0,282.8L715.5,282.5L714.0,283.0L714.0,284.9L715.1,285.8L715.6,287.3L715.5,288.5L714.3,295.7L713.0,294.3L712.2,294.2L713.9,291.6L711.9,290.3L710.3,290.5L709.4,290.1L707.9,290.8L706.0,290.5L704.4,287.7L703.2,287.0L702.4,285.8L700.6,284.6Z"/>
<path fill="#c8e4c9" d="M710.6,253.5L710.5,254.1L708.9,254.4L709.8,255.6L709.8,257.0L708.6,258.5L709.6,260.6L710.7,260.4L711.3,258.5L710.5,257.6L710.4,255.6L713.6,254.5L713.3,253.3L714.2,252.5L715.1,254.3L717.0,254.4L718.7,255.8L718.8,256.7L721.1,256.7L723.9,256.5L725.4,257.6L727.4,258.0L728.9,257.1L728.9,256.5L732.2,256.3L735.3,256.3L733.1,257.1L734.0,258.3L736.1,258.5L738.1,259.8L738.5,261.9L739.9,261.8L740.9,262.4L738.8,264.0L738.6,265.0L739.5,265.9L738.9,266.4L737.2,266.8L737.3,268.1L736.6,268.8L738.4,270.8L738.7,271.5L737.7,272.5L734.8,273.5L732.9,273.9L732.2,274.5L730.1,273.9L728.1,273.5L727.6,273.7L728.8,274.4L728.7,276.2L729.1,277.8L731.3,278.1L731.4,278.6L729.6,279.4L729.3,280.5L728.2,280.9L726.2,281.5L725.7,282.3L723.7,282.5L722.2,281.1L721.4,278.5L720.7,277.6L719.8,277.0L721.1,275.7L721.0,275.1L720.3,274.3L719.8,272.6L720.0,270.7L720.5,269.8L721.0,268.4L720.1,267.9L718.6,268.3L716.7,268.1L715.6,268.4L713.8,266.1L712.3,265.8L708.9,266.1L708.3,265.1L707.6,264.9L707.5,264.4L707.8,263.4L707.6,262.3L707.1,261.8L706.7,260.5L705.4,260.4L706.1,258.8L706.4,257.0L707.2,256.0L708.2,255.2L708.9,253.9Z"/>
<path fill="#f4f8f4" d="M740.9,262.4L742.6,263.4L744.3,265.1L744.3,266.5L745.3,266.5L746.7,267.8L747.8,268.7L747.3,271.1L745.8,271.8L745.9,272.4L745.4,273.7L746.6,275.7L747.4,275.7L747.8,277.1L749.4,279.4L748.7,279.5L747.3,279.3L746.4,280.0L745.2,280.4L744.4,280.6L744.1,281.1L742.8,280.9L741.2,279.7L741.0,278.5L740.4,277.2L740.8,274.9L741.5,274.0L740.9,272.8L740.0,272.4L740.3,271.3L739.7,270.7L738.4,270.8L736.6,268.8L737.3,268.1L737.2,266.8L738.9,266.4L739.5,265.9L738.6,265.0L738.8,264.0Z"/>
<path fill="#f4f8f4" d="M747.8,268.7L750.9,269.3L751.2,268.8L753.3,268.6L756.1,269.3L754.8,271.5L755.0,273.4L756.0,274.9L755.6,276.0L755.3,277.2L754.7,278.3L753.1,277.8L751.9,278.0L750.9,277.8L750.6,278.6L751.0,279.1L750.8,279.6L749.4,279.4L747.8,277.1L747.4,275.7L746.6,275.7L745.4,273.7L745.9,272.4L745.8,271.8L747.3,271.1Z"/>
<path fill="#dff0de" d="M756.1,269.3L759.0,270.2L761.7,272.4L762.2,273.5L760.6,275.9L759.8,277.8L758.8,278.8L757.5,279.0L757.2,278.3L756.6,278.2L755.8,278.9L754.7,278.3L755.3,277.2L755.6,276.0L756.0,274.9L755.0,273.4L754.8,271.5Z"/>
<path fill="#c8e4c9" d="M687.0,293.3L688.4,291.4L687.8,290.2L686.8,291.5L685.3,290.3L685.8,289.6L685.4,287.2L686.3,286.8L686.8,285.1L687.7,283.5L687.6,282.4L689.0,281.8L690.8,280.8L693.4,282.3L693.9,282.2L694.6,283.4L696.8,283.7L697.5,283.3L698.8,284.2L699.9,284.8L700.3,286.8L699.5,288.5L696.6,291.2L693.5,292.3L691.9,294.6L691.4,296.3L689.9,297.4L688.8,296.1L687.7,295.8L686.6,296.0L686.6,295.1L687.3,294.4Z"/>
<path fill="#c8e4c9" d="M715.1,330.5L714.4,331.9L713.1,332.6L710.4,331.0L710.2,330.0L705.0,327.3L700.3,324.5L698.3,322.8L697.2,320.7L697.6,319.9L695.4,316.5L692.8,311.6L690.3,306.4L689.2,305.2L688.4,303.3L686.4,301.6L684.5,300.5L685.4,299.3L684.1,296.8L684.9,295.0L687.0,293.3L687.3,294.4L686.6,295.1L686.6,296.0L687.7,295.8L688.8,296.1L689.9,297.4L691.4,296.3L691.9,294.6L693.5,292.3L696.6,291.2L699.5,288.5L700.3,286.8L699.9,284.8L700.6,284.6L702.4,285.8L703.2,287.0L704.4,287.7L706.0,290.5L707.9,290.8L709.4,290.1L710.3,290.5L711.9,290.3L713.9,291.6L712.2,294.2L713.0,294.3L714.3,295.7L712.0,295.6L711.6,295.9L709.4,296.4L706.5,298.2L706.3,299.5L705.6,300.4L705.9,301.8L704.3,302.6L704.3,303.7L703.6,304.1L704.7,306.5L706.1,308.1L705.6,309.2L707.3,309.4L708.3,310.8L710.6,310.8L712.8,309.3L712.6,313.3L713.8,313.6L715.3,313.1L717.5,317.4L717.0,318.2L716.8,320.1L716.8,322.3L715.8,323.6L716.2,324.6L715.6,325.5L716.8,327.7L715.1,330.5Z"/>
<path fill="#c8e4c9" d="M732.8,342.2L729.8,342.1L728.8,344.2L727.3,342.3L723.8,341.7L721.6,344.1L719.7,344.4L718.7,340.8L717.3,337.9L718.1,335.3L716.7,334.2L716.4,332.3L715.1,330.5L716.8,327.7L715.6,325.5L716.2,324.6L715.8,323.6L716.8,322.3L716.8,320.1L717.0,318.2L717.5,317.4L715.3,313.1L717.2,313.4L718.6,313.3L719.2,312.5L721.5,311.5L722.8,310.5L726.3,310.0L726.0,312.0L726.3,313.0L726.1,314.8L728.9,317.1L731.9,317.5L732.9,318.5L734.7,319.0L735.8,319.8L737.4,319.8L739.0,320.6L739.1,322.1L739.6,322.8L739.6,324.0L738.9,324.0L739.9,327.1L744.9,327.2L744.5,328.7L744.8,329.7L746.2,330.5L746.8,332.1L746.4,334.2L745.7,335.3L745.9,336.8L745.1,337.4L745.1,336.5L742.6,335.2L740.2,335.1L735.6,335.9L734.3,338.2L734.3,339.6L733.2,342.8Z"/>
<path fill="#5aab5c" d="M746.5,363.7L750.0,360.1L753.0,357.6L754.7,356.5L756.9,355.0L757.0,352.9L755.7,351.4L754.4,351.9L754.9,350.4L755.3,348.9L755.3,347.4L754.3,347.0L753.3,347.4L752.4,347.3L752.0,346.2L751.8,343.9L751.3,343.1L749.5,342.4L748.5,342.9L745.7,342.4L745.9,338.8L745.1,337.4L745.9,336.8L745.7,335.3L746.4,334.2L746.8,332.1L746.2,330.5L744.8,329.7L744.5,328.7L744.9,327.2L739.9,327.1L738.9,324.0L739.6,324.0L739.6,322.8L739.1,322.1L739.0,320.6L737.4,319.8L735.8,319.8L734.7,319.0L732.9,318.5L731.9,317.5L728.9,317.1L726.1,314.8L726.3,313.0L726.0,312.0L726.3,310.0L722.8,310.5L721.5,311.5L719.2,312.5L718.6,313.3L717.2,313.4L715.3,313.1L713.8,313.6L712.6,313.3L712.8,309.3L710.6,310.8L708.3,310.8L707.3,309.4L705.6,309.2L706.1,308.1L704.7,306.5L703.6,304.1L704.3,303.7L704.3,302.6L705.9,301.8L705.6,300.4L706.3,299.5L706.5,298.2L709.4,296.4L711.6,295.9L712.0,295.6L714.3,295.7L715.5,288.5L715.6,287.3L715.1,285.8L714.0,284.9L714.0,283.0L715.5,282.5L716.0,282.8L716.1,281.8L714.6,281.5L714.5,279.9L719.6,280.0L720.5,279.0L721.2,279.9L721.7,281.4L722.2,281.1L723.7,282.5L725.7,282.3L726.2,281.5L728.2,280.9L729.3,280.5L729.6,279.4L731.4,278.6L731.3,278.1L729.1,277.8L728.7,276.2L728.8,274.4L727.6,273.7L728.1,273.5L730.1,273.9L732.2,274.5L732.9,273.9L734.8,273.5L737.7,272.5L738.7,271.5L738.4,270.8L739.7,270.7L740.3,271.3L740.0,272.4L740.9,272.8L741.5,274.0L740.8,274.9L740.4,277.2L741.0,278.5L741.2,279.7L742.8,280.9L744.1,281.1L744.4,280.6L745.2,280.4L746.4,280.0L747.3,279.3L748.7,279.5L749.4,279.4L750.8,279.6L751.0,279.1L750.6,278.6L750.9,277.8L751.9,278.0L753.1,277.8L754.7,278.3L755.8,278.9L756.6,278.2L757.2,278.3L757.5,279.0L758.8,278.8L759.8,277.8L760.6,275.9L762.2,273.5L763.1,273.4L763.7,274.8L765.2,279.4L766.6,279.8L766.7,281.6L764.7,283.8L765.5,284.6L770.1,285.0L770.2,287.7L772.2,285.9L775.5,286.9L779.9,288.5L781.2,290.0L780.7,291.5L783.8,290.6L788.9,292.0L792.8,291.9L796.7,294.1L800.1,297.0L802.1,297.8L804.3,297.9L805.3,298.7L806.1,302.1L806.6,303.7L805.5,308.0L804.2,309.7L800.5,313.4L798.8,316.3L796.9,318.6L796.2,318.7L795.5,320.6L795.7,325.5L795.0,329.6L794.7,331.3L793.9,332.3L793.4,335.8L790.7,339.2L790.3,342.0L788.2,343.1L787.5,344.7L784.7,344.7L780.6,345.7L778.7,346.9L775.8,347.6L772.7,349.7L770.5,352.3L770.1,354.3L770.5,355.7L770.0,358.4L769.4,359.6L767.6,361.1L764.7,365.7L762.4,367.8L760.6,369.0L759.4,371.5L757.7,373.0L756.9,371.5L758.1,370.3L756.6,368.5L754.5,367.0L751.8,365.4L750.9,365.4L748.2,363.4Z"/>
<path fill="#dff0de" d="M745.1,337.4L745.9,338.8L745.7,342.4L748.5,342.9L749.5,342.4L751.3,343.1L751.8,343.9L752.0,346.2L752.4,347.3L753.3,347.4L754.3,347.0L755.3,347.4L755.3,348.9L754.9,350.4L754.4,351.9L754.0,354.3L751.6,356.3L749.5,356.7L746.6,356.3L743.9,355.6L746.5,351.6L746.1,350.4L743.4,349.4L740.2,347.5L738.0,347.1L733.2,342.8L734.3,339.6L734.3,338.2L735.6,335.9L740.2,335.1L742.6,335.2L745.1,336.5Z"/>
<path fill="#c8e4c9" d="M746.5,363.7L748.2,363.4L750.9,365.4L751.8,365.4L754.5,367.0L756.6,368.5L758.1,370.3L756.9,371.5L757.7,373.0L756.5,374.7L753.6,376.1L751.6,375.6L750.2,375.9L747.8,374.7L746.0,374.8L744.4,373.4L744.6,371.7L745.2,371.1L745.2,368.5L745.9,365.8Z"/>
<path fill="#9bcf9b" d="M727.3,342.3L728.8,344.2L729.8,342.1L732.8,342.2L733.2,342.8L738.0,347.1L740.2,347.5L743.4,349.4L746.1,350.4L746.5,351.6L743.9,355.6L746.6,356.3L749.5,356.7L751.6,356.3L754.0,354.3L754.4,351.9L755.7,351.4L757.0,352.9L756.9,355.0L754.7,356.5L753.0,357.6L750.0,360.1L746.5,363.7L745.9,365.8L745.2,368.5L745.2,371.1L744.6,371.7L744.4,373.4L744.2,374.7L747.5,377.0L747.2,378.8L748.8,379.9L748.7,381.2L746.2,384.6L742.3,386.0L737.0,386.6L734.1,386.3L734.7,387.8L734.2,389.8L734.6,391.1L733.1,392.1L730.4,392.4L727.9,391.5L726.8,392.1L727.2,394.8L729.0,395.6L730.4,394.7L731.2,396.1L728.8,396.9L726.7,398.5L726.3,401.2L725.7,402.6L723.2,402.6L721.2,403.9L720.4,405.9L723.0,407.8L725.5,408.4L724.6,410.7L721.5,412.2L719.8,415.3L717.4,416.3L716.3,417.5L717.1,420.2L718.9,421.8L717.8,421.6L715.4,421.2L709.0,420.9L707.9,419.4L708.0,417.4L706.2,417.5L705.3,416.6L705.1,413.8L707.1,412.7L707.9,411.0L707.6,409.7L709.0,407.4L710.0,403.9L709.7,402.4L710.8,401.9L710.6,400.9L709.3,400.4L710.2,399.3L709.0,398.3L708.4,395.3L709.4,394.7L709.0,391.5L709.6,388.9L710.3,386.5L711.9,385.6L711.1,383.0L711.1,380.6L713.1,378.9L713.0,376.7L714.5,374.1L714.5,371.7L713.9,371.2L712.6,366.7L714.2,364.0L714.0,361.5L714.9,359.1L716.7,356.6L718.5,355.0L717.7,354.0L718.3,353.1L718.2,348.7L721.0,347.5L721.9,344.7L721.6,344.1L723.8,341.7ZM717.6,422.5L718.6,423.7L719.9,425.7L723.4,427.3L727.0,427.9L725.8,429.2L723.4,429.4L722.0,428.5L720.4,428.4L717.6,428.4Z"/>
<path fill="#9bcf9b" d="M717.6,422.5L717.6,428.4L720.4,428.4L722.0,428.5L721.2,429.5L718.9,430.3L717.6,430.2L716.1,430.0L714.1,429.2L711.4,428.9L708.1,427.4L705.4,426.0L701.8,423.1L704.0,423.6L707.7,425.4L711.1,426.3L712.5,425.1L713.3,423.3L715.7,422.2ZM715.1,330.5L716.4,332.3L716.7,334.2L718.1,335.3L717.3,337.9L718.7,340.8L719.7,344.4L721.6,344.1L721.9,344.7L721.0,347.5L718.2,348.7L718.3,353.1L717.7,354.0L718.5,355.0L716.7,356.6L714.9,359.1L714.0,361.5L714.2,364.0L712.6,366.7L713.9,371.2L714.5,371.7L714.5,374.1L713.0,376.7L713.1,378.9L711.1,380.6L711.1,383.0L711.9,385.6L710.3,386.5L709.6,388.9L709.0,391.5L709.4,394.7L708.4,395.3L709.0,398.3L710.2,399.3L709.3,400.4L710.6,400.9L710.8,401.9L709.7,402.4L710.0,403.9L709.0,407.4L707.6,409.7L707.9,411.0L707.1,412.7L705.1,413.8L705.3,416.6L706.2,417.5L708.0,417.4L707.9,419.4L709.0,420.9L715.4,421.2L717.8,421.6L715.5,421.6L714.2,422.3L711.8,423.2L711.4,425.6L710.3,425.7L707.3,424.9L704.3,423.1L701.1,421.5L700.2,419.9L701.0,418.3L699.7,416.6L699.3,412.1L700.4,409.6L703.2,407.6L699.2,406.8L701.7,404.5L702.6,400.1L705.5,401.0L706.9,395.6L705.1,394.9L704.3,398.2L702.7,397.8L703.5,394.1L704.4,389.2L705.6,387.4L704.8,384.8L704.6,381.9L705.7,381.8L707.3,377.6L709.2,373.4L710.3,369.5L709.7,365.5L710.4,363.4L710.1,360.1L711.7,356.9L712.2,351.9L713.0,346.4L713.8,340.5L713.6,336.3L713.1,332.6L714.4,331.9Z"/>
<path fill="#5aab5c" d="M874.0,174.5L875.0,173.9L876.0,173.5L876.7,174.7L878.2,174.7L878.7,174.4L880.2,174.5L881.0,175.8L879.7,176.5L879.7,178.6L879.3,179.0L879.2,180.2L878.0,180.4L879.1,182.0L878.4,183.7L879.3,184.5L878.9,185.2L877.9,186.2L878.2,187.0L877.1,187.7L875.7,187.4L874.4,187.7L874.8,185.6L874.5,184.0L873.3,183.7L872.7,182.7L872.9,181.0L874.0,180.1L874.2,179.0L874.7,177.4L874.7,176.3L874.1,175.4Z"/>
<path fill="#388838" d="M874.0,174.5L874.2,172.6L873.1,171.5L876.8,169.6L880.0,170.1L883.5,170.1L886.3,170.5L888.5,170.4L892.7,170.5L893.8,171.5L898.6,172.7L899.6,172.1L902.5,173.3L905.6,173.0L905.7,174.5L903.2,176.2L899.8,176.8L899.6,177.7L898.0,179.1L897.0,181.3L898.0,182.7L896.5,183.9L895.9,185.6L893.9,186.2L892.1,188.2L888.7,188.2L886.3,188.2L884.6,189.1L883.6,190.1L882.3,189.9L881.3,189.0L880.6,187.5L878.2,187.0L877.9,186.2L878.9,185.2L879.3,184.5L878.4,183.7L879.1,182.0L878.0,180.4L879.2,180.2L879.3,179.0L879.7,178.6L879.7,176.5L881.0,175.8L880.2,174.5L878.7,174.4L878.2,174.7L876.7,174.7L876.0,173.5L875.0,173.9ZM903.9,180.5L905.9,179.7L906.8,180.2L905.9,181.3L904.8,181.1ZM901.0,182.3L901.9,181.8L901.9,182.5Z"/>
<path fill="#388838" d="M885.7,156.7L889.1,156.1L893.5,156.8L892.7,153.8L895.1,154.9L901.2,152.9L902.0,150.7L904.3,150.2L904.7,151.1L905.9,151.2L907.1,152.2L909.0,153.4L910.3,153.2L912.6,154.4L913.2,154.7L914.0,154.6L915.2,155.3L919.0,155.8L917.6,157.6L917.3,159.4L916.6,159.9L915.4,159.7L915.5,160.3L913.6,161.8L913.5,163.0L914.8,162.6L915.7,163.7L915.6,164.5L916.4,165.5L915.4,166.2L916.1,168.3L917.5,168.6L917.2,169.8L914.9,171.2L909.7,170.5L905.9,171.4L905.6,173.0L902.5,173.3L899.6,172.1L898.6,172.7L893.8,171.5L892.7,170.5L894.1,168.9L894.6,163.7L891.9,160.9L890.0,159.6L885.9,158.6ZM920.7,172.5L922.4,171.5L922.8,173.8L921.9,175.8L920.8,175.3L920.1,173.5Z"/>
<path fill="#5aab5c" d="M906.4,149.7L908.3,149.9L910.8,149.3L912.4,150.5L913.9,151.1L913.6,152.9L912.9,153.0L912.6,154.4L910.3,153.2L909.0,153.4L907.1,152.2L905.9,151.2L904.7,151.1L904.3,150.2Z"/>
<path fill="#c8e4c9" d="M913.6,152.9L914.1,153.5L914.0,154.6L913.2,154.7L912.6,154.4L912.9,153.0Z"/>
<path fill="#388838" d="M913.6,144.0L915.9,144.1L916.3,145.0L915.7,147.3L915.0,148.3L913.4,148.3L913.9,151.1L912.4,150.5L910.8,149.3L908.3,149.9L906.4,149.7L907.8,148.9L910.1,145.1Z"/>
<path fill="#266a26" d="M923.8,140.1L923.8,141.1L926.5,141.8L926.4,142.7L929.1,142.2L930.6,141.5L933.5,142.5L934.8,143.3L935.4,144.7L934.6,145.4L935.6,146.3L936.3,147.7L936.1,148.6L937.1,150.3L936.0,150.6L935.3,150.3L934.6,150.8L932.7,151.3L931.8,151.9L929.8,152.5L930.3,153.3L930.6,154.4L931.9,155.0L933.4,156.1L932.5,157.3L931.5,157.7L931.9,159.4L931.6,159.8L930.8,159.3L929.6,159.2L927.7,159.7L925.4,159.6L925.0,160.3L923.7,159.6L922.9,159.7L920.1,158.9L919.6,159.5L917.3,159.4L917.6,157.6L919.0,155.8L915.2,155.3L914.0,154.6L914.1,153.5L913.6,152.9L913.9,151.1L913.4,148.3L915.0,148.3L915.7,147.3L916.3,145.0L915.9,144.1L916.4,143.5L918.6,143.4L919.0,143.9L920.8,142.7L920.2,141.7L920.1,140.2L922.1,140.5Z"/>
<path fill="#5aab5c" d="M922.9,159.7L923.0,160.2L922.6,160.8L923.8,161.3L925.1,161.4L924.9,162.4L923.8,162.9L921.8,162.5L921.3,163.6L920.0,163.7L919.6,163.3L918.1,164.2L916.8,164.3L915.7,163.7L914.8,162.6L913.5,163.0L913.6,161.8L915.5,160.3L915.4,159.7L916.6,159.9L917.3,159.4L919.6,159.5L920.1,158.9Z"/>
<path fill="#9bcf9b" d="M942.3,158.1L942.1,159.2L940.6,159.2L941.1,159.8L940.2,161.5L939.7,161.9L937.4,162.0L936.1,162.6L934.0,162.4L930.2,161.7L929.6,160.8L927.0,161.2L926.7,161.7L925.1,161.4L923.8,161.3L922.6,160.8L923.0,160.2L922.9,159.7L923.7,159.6L925.0,160.3L925.4,159.6L927.7,159.7L929.6,159.2L930.8,159.3L931.6,159.8L931.9,159.4L931.5,157.7L932.5,157.3L933.4,156.1L935.3,157.0L936.8,155.9L937.7,155.7L939.8,156.5L941.0,156.4L942.2,156.9L942.0,157.2Z"/>
<path fill="#388838" d="M917.2,169.8L917.5,168.6L916.1,168.3L915.4,166.2L916.4,165.5L915.6,164.5L915.7,163.7L916.8,164.3L918.1,164.2L919.6,163.3L920.0,163.7L921.3,163.6L921.8,162.5L923.8,162.9L924.9,162.4L925.1,161.4L926.7,161.7L927.0,161.2L929.6,160.8L930.2,161.7L934.0,162.4L933.7,163.6L934.3,164.8L932.2,164.4L930.1,165.3L930.2,166.6L929.9,167.4L930.8,168.7L933.2,170.0L934.5,172.2L937.4,174.3L939.5,174.3L940.2,174.9L939.4,175.4L941.8,176.3L943.7,177.1L945.9,178.5L946.2,179.0L945.7,179.9L944.3,178.7L942.0,178.3L940.9,180.0L942.8,181.0L942.5,182.3L941.4,182.5L940.0,184.7L938.9,184.9L938.9,184.1L939.4,182.7L940.0,182.2L939.0,180.6L938.2,179.3L937.1,179.0L936.3,177.9L934.6,177.4L933.5,176.3L931.5,176.2L929.5,175.0L927.1,173.2L925.3,171.8L924.5,169.2L923.2,168.8L921.0,168.0L919.8,168.3L918.3,169.5ZM938.4,184.1L937.5,186.2L937.9,187.0L937.3,188.3L935.3,187.3L934.0,187.0L930.3,185.7L930.7,184.3L933.8,184.6L936.5,184.3ZM921.9,176.3L923.5,178.1L923.1,181.6L921.9,181.4L920.8,182.3L919.8,181.6L919.7,178.4L919.1,176.9L920.6,177.1Z"/>
<path fill="#266a26" d="M892.4,138.0L893.5,138.6L894.8,141.1L896.6,141.5L898.2,144.5L899.0,145.5L902.1,146.0L901.8,147.7L900.5,148.5L901.5,149.8L899.2,151.2L895.6,151.2L891.2,151.9L890.0,151.4L888.2,152.6L885.8,152.3L883.9,153.3L882.6,152.8L886.4,150.0L888.8,149.4L890.7,148.9L890.6,148.3L889.6,148.0L889.8,146.6L889.5,145.6L890.1,145.3L889.6,144.3L890.0,142.8L888.2,141.1L889.8,140.1L890.9,139.4Z"/>
<path fill="#5aab5c" d="M890.7,148.9L888.8,149.4L886.7,149.1L884.7,149.0L883.9,148.0L886.6,147.2L885.2,145.7L885.7,144.0L889.6,144.3L890.1,145.3L889.5,145.6L889.8,146.6L889.6,148.0L890.6,148.3Z"/>
<path fill="#5aab5c" d="M889.8,130.5L887.0,133.4L889.7,133.0L892.6,133.0L891.9,135.2L889.5,137.5L892.2,137.7L892.4,138.0L890.9,139.4L889.8,140.1L888.2,141.1L885.0,140.6L884.4,139.9L885.3,138.7L884.5,138.0L883.1,139.3L882.9,136.7L881.6,135.4L882.5,132.7L884.6,130.6L886.7,130.8ZM881.5,131.2L879.4,131.7L879.1,132.9L880.9,132.3ZM881.7,133.3L880.7,133.8L882.0,134.7L882.8,134.2ZM881.7,135.9L881.2,136.7L882.8,136.4ZM894.3,125.4L893.5,126.4L894.3,127.2L895.1,126.4ZM889.1,129.3L890.1,128.8L890.9,129.6L889.8,129.8Z"/>
<path fill="#5aab5c" d="M882.9,141.3L881.5,142.7L879.5,142.5L877.9,142.5L878.4,141.1L877.9,139.7L880.1,139.6Z"/>
<path fill="#5aab5c" d="M881.5,143.0L881.9,144.9L879.9,147.3L875.3,148.8L871.5,148.4L873.7,145.7L872.3,143.0L875.9,141.0L877.9,139.7L878.4,141.1L877.9,142.5L879.5,142.5L881.5,142.7Z"/>
<path fill="#5aab5c" d="M923.8,140.1L922.1,140.5L920.1,140.2L919.0,138.7L918.9,136.0L919.4,135.3L920.1,134.5L922.4,134.4L923.4,133.7L925.5,132.9L925.4,134.3L924.6,135.1L924.9,135.9L926.3,136.2L925.7,137.2L924.9,137.0L923.0,138.8ZM931.0,138.5L929.4,140.6L926.7,139.1L926.3,138.0L930.2,137.2Z"/>
<path fill="#5aab5c" d="M971.6,97.6L979.8,99.5L976.4,100.2L979.3,101.9L974.9,102.9L972.7,103.2L973.9,101.3L970.5,100.3L966.4,101.2L965.1,103.1L962.6,104.3L959.8,103.6L956.4,103.8L953.5,102.4L951.9,103.1L950.3,103.2L949.9,104.9L944.9,104.5L944.2,105.9L941.7,105.9L940.0,107.8L937.4,110.7L933.3,114.4L934.2,115.3L933.3,116.3L930.7,116.3L929.0,118.7L929.2,122.2L930.9,123.6L930.0,126.6L927.8,128.5L926.7,130.0L924.9,128.4L919.7,131.4L916.2,132.0L912.6,130.7L911.7,127.9L910.8,121.8L913.2,120.1L920.2,117.9L925.4,115.2L930.2,111.5L936.5,106.5L940.9,104.5L948.0,101.2L953.8,100.0L958.1,100.2L962.1,98.0L966.9,98.1ZM937.3,105.4L933.1,105.7L935.8,104.4L938.7,103.6L940.5,103.9ZM942.3,102.3L944.7,101.8L945.0,102.8Z"/>
<path fill="#5aab5c" d="M955.9,112.0L953.4,113.8L953.8,115.4L949.6,117.5L944.6,119.7L942.6,123.4L944.5,125.3L947.0,126.8L944.6,129.7L941.9,130.3L940.9,134.7L939.4,137.2L936.2,136.9L934.7,139.0L931.7,139.1L930.9,136.6L928.7,133.7L926.7,130.0L927.8,128.5L930.0,126.6L930.9,123.6L929.2,122.2L929.0,118.7L930.7,116.3L933.3,116.3L934.2,115.3L933.3,114.4L937.4,110.7L940.0,107.8L941.7,105.9L944.2,105.9L944.9,104.5L949.9,104.9L950.3,103.2L951.9,103.1L955.4,104.3L959.5,106.1L959.6,110.2L960.4,111.2ZM945.5,134.8L945.2,133.5L947.6,132.5L947.1,134.0ZM940.8,136.9L941.3,135.4L942.6,134.0L941.5,136.1Z"/>
<path fill="#5aab5c" d="M972.7,103.2L972.4,105.0L976.4,106.8L973.9,108.7L977.0,111.7L975.2,114.0L977.6,115.9L976.5,117.6L980.4,119.4L979.4,120.8L977.0,122.3L971.4,125.6L966.6,125.9L962.0,126.8L957.7,127.4L956.2,125.9L953.7,125.1L954.2,122.5L953.0,120.1L954.2,118.6L956.6,116.9L962.6,114.1L964.4,113.6L964.1,112.4L960.4,111.2L959.6,110.2L959.5,106.1L955.4,104.3L951.9,103.1L953.5,102.4L956.4,103.8L959.8,103.6L962.6,104.3L965.1,103.1L966.4,101.2L970.5,100.3L973.9,101.3Z"/>
<path fill="#c8e4c9" d="M961.5,132.8L961.8,131.2L960.9,131.5L959.2,130.6L959.0,129.1L962.3,128.4L965.6,128.0L968.4,128.4L971.1,128.3L971.5,128.8L969.7,130.3L970.5,132.8L969.3,133.6L967.2,133.6L964.9,132.6L963.7,132.3ZM955.4,131.7L957.0,130.5L958.9,130.9L957.8,131.7ZM956.2,129.8L957.8,129.5L957.8,130.1Z"/>
<path fill="#c8e4c9" d="M953.0,137.4L953.1,135.4L954.3,133.8L956.8,132.9L958.9,134.8L961.0,134.8L961.5,132.8L963.7,132.3L964.9,132.6L967.2,133.6L969.3,133.6L970.6,134.2L970.8,135.5L971.7,137.0L968.8,138.0L967.2,138.5L964.7,137.2L963.3,137.0L963.0,136.5L960.4,136.7L956.0,136.6Z"/>
<path fill="#c8e4c9" d="M957.4,141.8L957.2,141.2L957.4,140.4L956.3,140.0L953.5,139.6L953.0,137.4L956.0,136.6L960.4,136.7L963.0,136.5L963.3,137.0L964.7,137.2L967.2,138.5L967.5,139.6L965.3,140.5L964.7,142.0L961.9,142.9L959.3,142.9L958.7,142.1Z"/>
<path fill="#5aab5c" d="M937.1,150.3L936.1,148.6L936.3,147.7L935.6,146.3L934.6,145.4L935.4,144.7L934.8,143.3L936.6,142.6L940.6,141.4L944.0,140.5L946.6,140.9L946.8,141.5L949.3,141.6L952.5,141.9L957.4,141.8L958.7,142.1L959.3,142.9L959.5,144.1L960.2,145.1L960.2,146.1L958.6,146.7L959.4,147.9L959.5,149.1L960.8,151.3L960.5,152.1L959.2,152.4L956.8,154.6L957.5,155.7L956.9,155.6L954.4,154.6L952.5,155.0L951.3,154.7L949.8,155.2L948.4,154.3L947.3,154.7L947.2,154.5L946.0,153.2L944.0,153.1L943.8,152.3L942.0,152.0L941.6,152.6L940.2,152.1L940.3,151.4L938.4,151.2Z"/>
<path fill="#9bcf9b" d="M942.2,156.9L941.0,156.4L939.8,156.5L937.7,155.7L936.8,155.9L935.3,157.0L933.4,156.1L931.9,155.0L930.6,154.4L930.3,153.3L929.8,152.5L931.8,151.9L932.7,151.3L934.6,150.8L935.3,150.3L936.0,150.6L937.1,150.3L938.4,151.2L940.3,151.4L940.2,152.1L941.6,152.6L942.0,152.0L943.8,152.3L944.0,153.1L946.0,153.2L947.2,154.5L946.4,154.5L946.0,155.0L945.4,155.1L945.2,155.7L944.7,155.8L944.7,156.1L943.8,156.3L942.6,156.3Z"/>
<path fill="#c8e4c9" d="M947.2,154.5L947.3,154.7L948.4,154.3L949.8,155.2L951.3,154.7L952.5,155.0L954.4,154.6L956.9,155.6L956.2,156.3L955.7,157.3L955.1,157.6L952.3,156.8L951.4,157.0L950.8,157.6L949.6,157.9L949.3,157.7L948.0,158.2L947.0,158.2L946.8,158.8L944.6,159.1L943.6,158.8L942.3,158.1L942.0,157.2L942.2,156.9L942.6,156.3L943.8,156.3L944.7,156.1L944.7,155.8L945.2,155.7L945.4,155.1L946.0,155.0L946.4,154.5Z"/>
<path fill="#9bcf9b" d="M940.2,161.5L941.1,159.8L940.6,159.2L942.1,159.2L942.3,158.1L943.6,158.8L944.6,159.1L946.8,158.8L947.0,158.2L948.0,158.2L949.3,157.7L949.6,157.9L950.8,157.6L951.4,157.0L952.3,156.8L955.1,157.6L955.7,157.3L957.1,158.1L957.3,158.8L955.7,159.3L954.5,161.1L952.9,162.9L950.8,163.4L949.2,163.2L947.1,163.9L946.2,164.3L944.0,163.8L942.0,162.7L941.2,162.4L940.7,161.5Z"/>
<path fill="#9bcf9b" d="M934.0,162.4L936.1,162.6L937.4,162.0L939.7,161.9L940.2,161.5L940.7,161.5L941.2,162.4L939.1,163.1L938.8,164.1L937.9,164.4L937.9,165.1L936.9,165.1L936.0,164.7L935.5,165.1L933.7,165.0L934.3,164.8L933.7,163.6Z"/>
<path fill="#c8e4c9" d="M947.1,163.9L947.8,165.0L948.6,165.7L947.6,166.7L946.4,166.1L944.6,166.1L942.3,165.7L941.1,165.8L940.5,166.3L939.6,165.7L939.0,166.8L940.3,168.0L940.9,168.8L942.1,169.8L943.1,170.4L944.1,171.5L946.4,172.5L946.1,172.9L943.7,172.0L942.1,171.0L939.8,170.2L937.5,168.3L938.1,168.1L936.9,167.0L936.8,166.1L935.1,165.7L934.3,166.8L933.6,166.0L933.6,165.1L933.7,165.0L935.5,165.1L936.0,164.7L936.9,165.1L937.9,165.1L937.9,164.4L938.8,164.1L939.1,163.1L941.2,162.4L942.0,162.7L944.0,163.8L946.2,164.3Z"/>
<path fill="#c8e4c9" d="M947.6,166.7L948.5,166.7L947.9,167.8L949.2,168.8L948.8,170.1L948.2,170.2L947.7,170.4L946.8,171.0L946.4,172.5L944.1,171.5L943.1,170.4L942.1,169.8L940.9,168.8L940.3,168.0L939.0,166.8L939.6,165.7L940.5,166.3L941.1,165.8L942.3,165.7L944.6,166.1L946.4,166.1Z"/>
<path fill="#9bcf9b" d="M952.5,165.2L954.1,165.8L954.3,166.9L955.8,167.7L956.7,167.1L957.3,167.4L956.7,167.9L957.2,168.3L956.5,168.9L956.8,169.9L958.0,171.0L957.0,171.8L956.6,172.7L956.9,173.0L956.4,173.4L955.2,173.4L954.3,173.5L954.2,173.4L953.7,173.6L951.7,174.6L951.6,173.6L950.9,173.4L950.4,172.6L950.9,172.1L951.5,171.9L951.9,171.0L951.1,171.8L950.1,171.3L949.2,171.0L948.8,170.6L948.2,170.2L948.8,170.1L949.2,168.8L947.9,167.8L948.5,166.7L947.6,166.7L948.6,165.7L947.8,165.0L947.1,163.9L949.2,163.2L950.8,163.4L952.2,164.4Z"/>
<path fill="#c8e4c9" d="M949.7,172.9L949.5,172.4L948.4,173.7L948.5,174.5L948.0,174.3L947.3,173.5L946.1,172.9L946.4,172.5L946.8,171.0L947.7,170.4L948.2,170.2L948.8,170.6L949.2,171.0L950.1,171.3L951.1,171.8L950.9,172.1L950.4,172.6Z"/>
<path fill="#c8e4c9" d="M951.7,174.6L951.4,175.5L951.8,176.6L952.9,177.2L952.8,177.9L952.0,178.3L951.8,179.2L950.6,180.4L950.1,180.3L950.1,179.6L948.7,178.8L948.4,177.5L948.6,175.7L949.0,174.9L948.5,174.5L948.4,173.7L949.5,172.4L949.7,172.9L950.4,172.6L950.9,173.4L951.6,173.6Z"/>
<path fill="#c8e4c9" d="M951.7,174.6L953.7,173.6L954.3,173.5L955.2,173.4L956.4,173.4L957.8,174.2L957.9,175.9L957.4,176.0L957.0,176.5L955.6,176.4L954.6,177.0L952.9,177.2L951.8,176.6L951.4,175.5Z"/>
<path fill="#5aab5c" d="M966.7,176.2L967.5,175.3L966.3,174.6L963.8,176.2L962.0,175.3L959.9,176.0L957.9,175.9L957.4,176.0L957.0,176.5L955.6,176.4L954.6,177.0L952.9,177.2L952.8,177.9L952.0,178.3L951.8,179.2L950.6,180.4L952.1,182.0L953.1,183.9L954.6,184.8L953.6,185.6L954.6,187.7L956.7,188.9L957.5,186.5L958.5,184.9L959.1,184.7L960.8,185.6L960.8,184.1L959.5,183.3L958.0,182.1L959.0,181.6L957.7,180.3L957.1,178.8L957.6,178.2L959.0,179.5L960.4,179.5L961.8,179.1L959.9,177.6L963.1,176.9L966.1,177.3ZM959.9,190.7L961.4,191.6L963.4,191.5L965.3,191.6L966.7,191.8L966.4,192.6L962.6,192.8L962.6,192.4L959.4,191.8Z"/>
<path fill="#c8e4c9" d="M957.2,168.3L957.9,169.4L958.9,169.2L961.0,169.6L964.8,169.8L966.1,169.1L969.2,168.5L971.1,169.4L972.7,169.7L971.3,170.8L970.3,172.7L971.2,174.2L968.9,173.8L966.3,174.6L966.2,176.0L963.8,176.2L962.0,175.3L959.9,176.0L957.9,175.9L957.8,174.2L956.4,173.4L956.9,173.0L956.6,172.7L957.0,171.8L958.0,171.0L956.8,169.9L956.5,168.9Z"/>
<path fill="#9bcf9b" d="M957.3,158.8L958.4,158.2L960.1,158.5L961.7,158.5L963.0,159.1L963.9,158.7L965.8,158.5L966.5,157.9L967.6,157.9L968.4,158.1L969.2,158.9L970.0,160.0L971.5,161.6L971.6,162.7L971.3,163.9L971.8,165.0L973.0,165.5L974.2,165.1L975.4,165.6L975.5,166.2L974.2,166.8L973.4,166.6L972.7,169.7L971.1,169.4L969.2,168.5L966.1,169.1L964.8,169.8L961.0,169.6L958.9,169.2L957.9,169.4L957.2,168.3L956.7,167.9L957.3,167.4L956.7,167.1L955.8,167.7L954.3,166.9L954.1,165.8L952.5,165.2L952.2,164.4L950.8,163.4L952.9,162.9L954.5,161.1L955.7,159.3Z"/>
<path fill="#c8e4c9" d="M967.6,157.9L968.2,157.5L969.9,157.2L971.9,158.0L973.0,158.1L974.1,158.8L973.9,159.7L974.9,160.2L975.3,161.3L976.2,161.9L976.0,162.3L976.5,162.6L975.8,162.8L974.3,162.7L974.0,162.3L973.4,162.5L973.6,163.0L972.9,163.9L972.5,164.7L971.8,165.0L971.3,163.9L971.6,162.7L971.5,161.6L970.0,160.0L969.2,158.9L968.4,158.1Z"/>
<path fill="#c8e4c9" d="M981.1,147.7L982.1,147.8L982.8,147.2L983.6,147.3L986.3,147.1L988.0,148.6L987.3,149.1L987.5,149.9L989.6,150.0L990.6,151.2L990.5,151.7L993.8,152.6L995.8,152.2L997.5,153.4L999.0,153.4L1002.9,154.2L1002.9,155.0L1001.8,156.4L1002.4,157.8L1002.0,158.7L999.5,158.9L998.1,159.6L998.0,160.8L995.9,161.0L994.2,161.9L991.7,162.0L989.5,163.0L989.6,164.6L990.9,165.2L993.6,165.1L993.0,166.0L990.2,166.5L986.6,168.0L985.2,167.5L985.8,166.2L982.9,165.5L983.3,165.0L985.9,164.1L985.1,163.5L981.0,162.8L980.8,161.8L978.4,162.2L977.4,163.6L975.4,165.6L974.2,165.1L973.0,165.5L971.8,165.0L972.5,164.7L972.9,163.9L973.6,163.0L973.4,162.5L974.0,162.3L974.3,162.7L975.8,162.8L976.5,162.6L976.0,162.3L976.2,161.9L975.3,161.3L974.9,160.2L973.9,159.7L974.1,158.8L973.0,158.1L971.9,158.0L969.9,157.2L968.2,157.5L967.6,157.9L966.5,157.9L965.8,158.5L963.9,158.7L963.0,159.1L961.7,158.5L960.1,158.5L958.4,158.2L957.3,158.8L957.1,158.1L955.7,157.3L956.2,156.3L956.9,155.6L957.5,155.7L956.8,154.6L959.2,152.4L960.5,152.1L960.8,151.3L959.5,149.1L960.7,148.9L962.1,148.2L964.2,148.2L966.8,148.4L969.7,149.0L971.8,149.1L972.8,149.4L973.8,149.0L974.5,149.6L976.9,149.5L977.9,149.7L978.1,148.4L978.9,147.8Z"/>
<path fill="#c8e4c9" d="M959.3,142.9L961.9,142.9L964.7,142.0L965.3,140.5L967.5,139.6L967.2,138.5L968.8,138.0L971.7,137.0L974.4,137.7L974.8,138.3L976.2,138.0L978.7,138.6L979.0,139.9L978.4,140.6L980.1,142.3L981.1,142.8L981.0,143.3L982.8,143.7L983.5,144.4L982.5,145.0L980.4,144.9L979.9,145.1L980.5,146.0L981.1,147.7L978.9,147.8L978.1,148.4L977.9,149.7L976.9,149.5L974.5,149.6L973.8,149.0L972.8,149.4L971.8,149.1L969.7,149.0L966.8,148.4L964.2,148.2L962.1,148.2L960.7,148.9L959.5,149.1L959.4,147.9L958.6,146.7L960.2,146.1L960.2,145.1L959.5,144.1Z"/>
<path fill="#9bcf9b" d="M983.6,192.2L984.1,192.3L986.9,192.4L988.5,190.8L986.1,191.6L984.2,191.5L982.4,192.3L983.0,193.3L984.3,193.7L986.1,192.8L986.9,192.6Z"/>
<path fill="#5aab5c" d="M949.3,141.6L949.9,140.4L953.5,139.6L956.3,140.0L957.4,140.4L957.2,141.2L957.4,141.8L952.5,141.9Z"/>
<path fill="#c8e4c9" d="M884.1,190.6L885.7,191.7L888.2,191.5L890.9,192.1L892.0,192.1L893.0,193.8L893.2,195.4L894.1,198.2L894.8,198.7L894.3,199.7L890.8,200.2L889.7,201.2L888.1,201.4L888.0,203.3L885.0,204.4L884.0,205.7L881.8,206.4L879.2,206.8L875.0,208.7L875.0,211.8L874.6,211.8L874.7,213.2L873.0,213.3L872.2,213.9L871.0,213.9L870.0,213.6L867.8,213.9L867.0,215.9L866.2,216.1L864.9,219.4L861.3,222.2L860.4,225.9L859.3,227.0L859.0,228.0L853.1,228.2L853.2,227.0L854.2,226.3L855.1,224.9L854.9,224.0L855.8,222.2L857.2,220.5L858.1,220.1L858.8,218.5L858.9,217.1L859.8,215.5L861.6,214.5L863.2,211.9L864.6,210.8L867.0,210.5L869.1,208.8L870.4,208.0L872.6,205.9L872.0,202.6L873.0,200.3L873.3,199.0L875.0,197.2L877.6,196.0L879.6,194.9L881.3,192.2L882.2,190.6Z"/>
<path fill="#c8e4c9" d="M929.2,222.8L920.2,227.8L912.6,233.0L908.9,234.1L906.0,234.4L906.0,232.7L904.8,232.3L903.1,231.6L902.5,230.3L893.7,224.6L884.8,218.9L874.9,212.5L875.0,211.8L875.0,208.7L879.2,206.8L881.8,206.4L884.0,205.7L885.0,204.4L888.0,203.3L888.1,201.4L889.7,201.2L890.8,200.2L894.3,199.7L894.8,198.7L894.1,198.2L893.2,195.4L893.0,193.8L892.0,192.1L894.5,190.7L897.4,190.2L899.0,189.1L901.6,188.3L906.0,187.9L910.4,187.7L911.7,188.0L914.1,187.0L917.0,187.0L918.0,187.6L919.8,187.4L919.3,188.8L919.7,191.3L919.1,193.5L917.5,194.9L917.7,196.9L919.8,198.5L919.9,199.1L921.5,200.2L922.6,204.9L923.5,207.2L923.6,208.4L923.1,210.6L923.3,211.7L923.0,213.2L923.2,214.8L922.2,215.9L923.7,217.8L923.8,219.0L924.7,220.4L926.0,220.0L928.1,221.2Z"/>
<path fill="#c8e4c9" d="M922.6,204.9L921.5,200.2L919.9,199.1L919.8,198.5L917.7,196.9L917.5,194.9L919.1,193.5L919.7,191.3L919.3,188.8L919.8,187.4L922.7,186.4L924.5,186.7L924.4,188.0L926.7,187.1L926.8,187.6L925.5,188.9L925.5,190.1L926.4,190.7L926.1,193.0L924.4,194.3L924.9,195.7L926.2,195.8L926.9,197.0L927.9,197.4L927.7,199.5L926.4,200.2L925.6,201.1L923.8,202.1L924.1,203.2L923.9,204.3Z"/>
<path fill="#c8e4c9" d="M936.7,224.4L934.8,225.4L933.4,223.9L929.2,222.8L928.1,221.2L926.0,220.0L924.7,220.4L923.8,219.0L923.7,217.8L922.2,215.9L923.2,214.8L923.0,213.2L923.3,211.7L923.1,210.6L923.6,208.4L923.5,207.2L922.6,204.9L923.9,204.3L924.1,203.2L923.8,202.1L925.6,201.1L926.4,200.2L927.7,199.5L927.9,197.4L930.9,198.4L932.0,198.1L934.2,198.6L937.7,199.7L938.9,202.1L941.3,202.6L945.0,203.7L947.8,205.0L949.1,204.3L950.3,203.1L949.7,201.1L950.5,199.8L952.4,198.6L954.2,198.2L957.8,198.8L958.7,199.9L959.7,199.9L960.5,200.4L963.1,200.7L963.7,201.6L962.8,202.8L963.2,203.9L962.5,205.6L963.3,207.7L963.3,217.0L963.3,226.7L963.3,231.9L960.3,231.9L960.3,233.0L949.8,228.0L939.3,223.0Z"/>
<path fill="#5aab5c" d="M989.4,207.0L988.6,208.0L988.1,210.0L987.3,211.4L986.7,211.8L985.9,211.0L984.7,209.8L982.8,206.1L982.5,206.3L983.6,209.1L985.2,211.7L987.2,215.8L988.2,217.2L989.0,218.7L991.4,221.6L990.8,222.1L991.0,223.8L994.0,226.1L994.5,226.7L984.0,226.7L973.9,226.7L963.3,226.7L963.3,217.0L963.3,207.7L962.5,205.6L963.2,203.9L962.8,202.8L963.7,201.6L967.3,201.5L969.8,202.2L972.4,203.0L973.6,203.4L975.6,202.6L976.7,201.8L979.0,201.6L980.9,201.9L981.6,203.2L982.2,202.4L984.3,203.0L986.3,203.1L987.6,202.5L989.4,207.0Z"/>
<path fill="#f4f8f4" d="M853.0,229.3L853.5,228.4L863.8,228.4L863.3,224.7L863.9,223.3L866.4,223.1L866.3,216.4L874.9,216.5L874.9,212.5L884.8,218.9L880.8,218.9L882.1,230.2L883.3,241.6L883.8,241.9L883.2,243.7L872.7,243.8L872.3,244.4L871.2,244.2L869.8,244.7L867.9,244.0L867.1,244.0L866.7,245.6L865.8,246.0L864.1,244.3L862.5,242.3L860.7,241.6L859.5,240.8L858.0,240.9L856.7,241.4L855.4,241.2L854.5,242.0L854.3,240.7L855.0,239.3L855.3,236.9L855.1,234.3L854.7,233.0L855.0,231.7L854.3,230.4Z"/>
<path fill="#c8e4c9" d="M875.0,211.8L874.9,212.5L874.9,216.5L866.3,216.4L866.4,223.1L863.9,223.3L863.3,224.7L863.8,228.4L853.5,228.4L853.0,229.3L853.1,228.2L859.0,228.0L859.3,227.0L860.4,225.9L861.3,222.2L864.9,219.4L866.2,216.1L867.0,215.9L867.8,213.9L870.0,213.6L871.0,213.9L872.2,213.9L873.0,213.3L874.7,213.2L874.6,211.8Z"/>
<path fill="#dff0de" d="M865.8,246.0L866.7,245.6L867.1,244.0L867.9,244.0L869.8,244.7L871.2,244.2L872.3,244.4L872.7,243.8L883.2,243.7L883.8,241.9L883.3,241.6L882.1,230.2L880.8,218.9L884.8,218.9L893.7,224.6L902.5,230.3L903.1,231.6L904.8,232.3L906.0,232.7L906.0,234.4L908.9,234.1L908.9,240.2L907.5,241.9L907.3,243.5L904.9,244.0L901.4,244.2L900.4,245.1L898.7,245.2L897.0,245.2L896.4,244.7L894.9,245.1L892.5,246.2L892.0,247.0L889.9,248.2L889.6,248.9L888.5,249.4L887.2,249.1L886.5,249.7L886.1,251.5L884.0,253.7L884.1,254.5L883.4,255.7L883.6,257.2L882.4,257.6L881.8,257.9L881.4,256.8L880.7,257.1L880.2,257.0L879.7,257.8L877.7,257.8L877.0,257.4L876.6,257.6L875.8,256.9L876.0,256.1L875.7,255.8L875.1,256.0L875.2,255.2L875.7,254.5L874.7,253.4L874.3,252.7L873.8,252.1L873.2,252.0L872.6,252.4L871.8,252.8L871.0,253.3L869.9,253.1L869.2,252.4L868.8,252.4L868.1,252.7L867.6,252.7L867.5,251.8L867.6,250.9L867.4,249.9L866.4,249.2L865.9,247.7Z"/>
<path fill="#c8e4c9" d="M853.9,248.7L852.8,246.7L851.5,245.7L852.6,245.2L853.9,243.4L854.5,242.0L855.4,241.2L856.7,241.4L858.0,240.9L859.5,240.8L860.7,241.6L862.5,242.3L864.1,244.3L865.8,246.0L865.9,247.7L866.4,249.2L867.4,249.9L867.6,250.9L867.5,251.8L867.1,251.9L865.7,251.7L865.5,252.0L864.9,252.0L863.0,251.4L861.8,251.4L856.9,251.3L856.2,251.5L855.3,251.5L854.0,251.9L853.5,249.9L855.9,249.9L856.5,249.6L857.0,249.6L858.0,248.9L859.1,249.5L860.2,249.6L861.4,248.9L860.9,248.2L860.0,248.6L859.2,248.6L858.2,248.0L857.3,248.0L856.7,248.7L853.9,248.7Z"/>
<path fill="#dff0de" d="M853.5,249.9L853.9,248.7L856.7,248.7L857.3,248.0L858.2,248.0L859.2,248.6L860.0,248.6L860.9,248.2L861.4,248.9L860.2,249.6L859.1,249.5L858.0,248.9L857.0,249.6L856.5,249.6L855.9,249.9Z"/>
<path fill="#dff0de" d="M858.0,255.4L856.6,254.3L855.5,254.2L854.9,253.4L854.9,253.0L854.1,252.5L854.0,251.9L855.3,251.5L856.2,251.5L856.9,251.3L861.8,251.4L861.7,252.3L861.4,252.5L861.7,253.4L861.2,253.8L860.7,253.8L860.0,254.2L859.2,254.1Z"/>
<path fill="#f4f8f4" d="M875.6,264.2L874.8,264.2L874.3,265.2L873.6,265.2L873.1,264.6L873.2,263.6L872.1,262.0L871.4,262.3L870.9,262.3L870.1,262.5L870.2,261.5L869.8,260.8L869.9,260.1L869.3,259.0L868.5,258.0L866.4,258.0L865.8,258.5L865.1,258.6L864.7,259.2L864.4,259.9L863.0,261.0L861.8,259.5L860.8,258.4L860.1,258.1L859.5,257.6L859.2,256.4L858.8,255.9L858.0,255.4L859.2,254.1L860.0,254.2L860.7,253.8L861.2,253.8L861.7,253.4L861.4,252.5L861.7,252.3L861.8,251.4L863.0,251.4L864.9,252.0L865.5,252.0L865.7,251.7L867.1,251.9L867.5,251.8L867.6,252.7L868.1,252.7L868.8,252.4L869.2,252.4L869.9,253.1L871.0,253.3L871.8,252.8L872.6,252.4L873.2,252.0L873.8,252.1L874.3,252.7L874.7,253.4L875.7,254.5L875.2,255.2L875.1,256.0L875.7,255.8L876.0,256.1L875.8,256.9L876.6,257.6L876.1,257.8L875.9,258.7L876.5,259.8L877.2,261.9L876.2,262.2L875.9,262.6L876.2,263.1L876.0,264.2Z"/>
<path fill="#f4f8f4" d="M867.7,266.6L867.0,266.4L865.1,265.3L863.7,263.9L863.3,263.0L863.0,261.0L864.4,259.9L864.7,259.2L865.1,258.6L865.8,258.5L866.4,258.0L868.5,258.0L869.3,259.0L869.9,260.1L869.8,260.8L870.2,261.5L870.1,262.5L870.9,262.3L869.6,263.6L868.5,265.0L868.3,265.7Z"/>
<path fill="#f4f8f4" d="M877.5,273.0L876.8,273.0L874.1,271.7L871.7,269.7L869.5,268.3L867.7,266.6L868.3,265.7L868.5,265.0L869.6,263.6L870.9,262.3L871.4,262.3L872.1,262.0L873.2,263.6L873.1,264.6L873.6,265.2L874.3,265.2L874.8,264.2L875.6,264.2L875.4,265.0L875.7,266.3L875.2,267.4L875.9,268.2L876.8,268.3L877.9,269.4L877.9,270.5L877.7,270.8Z"/>
<path fill="#c8e4c9" d="M890.2,271.3L889.0,271.3L887.2,270.8L885.5,270.8L882.4,271.3L880.6,272.0L878.0,273.0L877.5,273.0L877.7,270.8L877.9,270.5L877.9,269.4L876.8,268.3L875.9,268.2L875.2,267.4L875.7,266.3L875.4,265.0L875.6,264.2L876.0,264.2L876.2,263.1L875.9,262.6L876.2,262.2L877.2,261.9L876.5,259.8L875.9,258.7L876.1,257.8L876.6,257.6L877.0,257.4L877.7,257.8L879.7,257.8L880.2,257.0L880.7,257.1L881.4,256.8L881.8,257.9L882.4,257.6L883.6,257.2L884.7,257.8L885.2,258.6L886.4,259.2L887.3,258.5L888.5,258.4L890.3,259.1L891.0,262.8L889.9,265.0L889.2,268.0L890.3,270.3Z"/>
<path fill="#dff0de" d="M890.3,259.1L888.5,258.4L887.3,258.5L886.4,259.2L885.2,258.6L884.7,257.8L883.6,257.2L883.4,255.7L884.1,254.5L884.0,253.7L886.1,251.5L886.5,249.7L887.2,249.1L888.5,249.4L889.6,248.9L889.9,248.2L892.0,247.0L892.5,246.2L894.9,245.1L896.4,244.7L897.0,245.2L898.7,245.2L898.5,246.5L898.8,247.7L900.3,249.4L900.4,250.7L903.4,251.3L903.4,253.1L902.8,253.9L901.5,254.1L901.0,255.2L900.1,255.5L897.8,255.5L896.6,255.3L895.7,255.7L894.6,255.5L890.0,255.6L890.0,257.1L890.3,259.1Z"/>
<path fill="#c8e4c9" d="M900.5,268.8L896.4,270.4L894.9,271.3L892.6,272.0L890.2,271.3L890.3,270.3L889.2,268.0L889.9,265.0L891.0,262.8L890.3,259.1L890.0,257.1L890.0,255.6L894.6,255.5L895.7,255.7L896.6,255.3L897.8,255.5L897.6,256.3L898.7,257.7L898.7,259.6L898.9,261.6L899.6,262.6L899.0,265.0L899.2,266.3L899.9,267.9Z"/>
<path fill="#c8e4c9" d="M902.6,268.3L900.5,268.8L899.9,267.9L899.2,266.3L899.0,265.0L899.6,262.6L898.9,261.6L898.7,259.6L898.7,257.7L897.6,256.3L897.8,255.5L900.1,255.5L899.7,256.9L900.6,257.7L901.5,258.6L901.6,259.9L902.1,260.4L902.0,266.5Z"/>
<path fill="#c8e4c9" d="M904.8,268.0L902.6,268.3L902.0,266.5L902.1,260.4L901.6,259.9L901.5,258.6L900.6,257.7L899.7,256.9L900.1,255.5L901.0,255.2L901.5,254.1L902.8,253.9L903.4,253.1L904.3,252.3L905.2,252.3L907.2,253.8L907.1,254.7L907.7,256.2L907.2,257.3L907.5,258.0L906.2,259.6L905.4,260.4L904.9,262.1L904.9,263.7Z"/>
<path fill="#f4f8f4" d="M903.4,253.1L903.4,251.3L900.4,250.7L900.3,249.4L898.8,247.7L898.5,246.5L898.7,245.2L900.4,245.1L901.4,244.2L904.9,244.0L907.3,243.5L907.5,241.9L908.9,240.2L908.9,234.1L912.6,233.0L920.2,227.8L929.2,222.8L933.4,223.9L934.8,225.4L936.7,224.4L937.3,228.5L938.3,229.2L938.4,230.0L939.4,230.9L938.9,232.0L937.9,237.4L937.7,240.8L934.4,243.3L933.2,246.7L934.4,247.7L934.3,249.4L936.0,249.4L935.8,250.7L935.0,250.8L934.9,251.7L934.4,251.7L932.7,248.8L932.0,248.7L930.0,250.2L928.0,249.4L926.6,249.3L925.8,249.6L924.2,249.6L922.7,250.7L921.4,250.7L918.2,249.4L917.0,250.0L915.6,250.0L914.6,249.0L912.0,248.0L909.2,248.3L908.5,248.9L908.1,250.4L907.4,251.5L907.2,253.8L905.2,252.3L904.3,252.3Z"/>
<path fill="#9bcf9b" d="M920.0,271.9L917.3,272.8L916.3,272.7L915.3,273.3L913.2,273.2L911.8,271.6L910.9,269.7L909.1,267.9L907.1,268.0L904.8,268.0L904.9,263.7L904.9,262.1L905.4,260.4L906.2,259.6L907.5,258.0L907.2,257.3L907.7,256.2L907.1,254.7L907.2,253.8L907.4,251.5L908.1,250.4L908.5,248.9L909.2,248.3L912.0,248.0L914.6,249.0L915.6,250.0L917.0,250.0L918.2,249.4L921.4,250.7L922.7,250.7L924.2,249.6L925.8,249.6L926.6,249.3L928.0,249.4L930.0,250.2L932.0,248.7L932.7,248.8L934.4,251.7L934.9,251.7L936.0,252.7L935.7,253.2L935.6,254.0L933.3,256.1L932.6,257.7L932.3,259.1L931.7,259.7L931.2,261.5L929.8,262.6L929.4,263.9L928.8,265.0L928.6,266.1L926.7,267.0L925.3,265.9L924.3,265.9L922.7,267.5L921.9,267.5L920.7,270.0Z"/>
<path fill="#c8e4c9" d="M932.0,278.4L931.7,278.3L930.2,278.7L928.6,278.3L927.3,278.5L923.0,278.4L923.4,276.3L922.4,274.6L921.2,274.2L920.7,273.0L920.0,272.6L920.0,271.9L920.7,270.0L921.9,267.5L922.7,267.5L924.3,265.9L925.3,265.9L926.7,267.0L928.6,266.1L928.8,265.0L929.4,263.9L929.8,262.6L931.2,261.5L931.7,259.7L932.3,259.1L932.6,257.7L933.3,256.1L935.6,254.0L935.7,253.2L936.0,252.7L934.9,251.7L935.0,250.8L935.8,250.7L936.8,252.3L937.0,254.1L936.9,255.8L938.3,258.2L936.8,258.2L936.1,258.4L934.9,258.1L934.3,259.3L935.9,260.9L937.0,261.3L937.4,262.4L938.2,264.2L937.8,264.9L936.5,267.6L935.9,268.1L935.7,270.1L935.9,271.2L935.7,272.0L936.9,273.4L937.2,274.3L938.2,275.6L939.3,276.5L939.5,277.7L939.7,278.4L939.5,279.9L937.5,279.3L935.3,278.5L932.0,278.4Z"/>
<path fill="#f4f8f4" d="M935.8,250.7L936.0,249.4L934.3,249.4L934.4,247.7L933.2,246.7L934.4,243.3L937.7,240.8L937.9,237.4L938.9,232.0L939.4,230.9L938.4,230.0L938.3,229.2L937.3,228.5L936.7,224.4L939.3,223.0L949.8,228.0L960.3,233.0L960.4,243.4L958.1,243.3L956.9,245.2L956.2,246.8L956.8,247.4L955.9,248.2L956.2,249.3L955.6,250.4L955.3,251.4L956.2,251.2L956.8,252.2L956.8,253.8L957.8,254.5L957.7,255.2L956.1,255.6L954.7,256.7L952.8,259.5L950.4,260.8L947.8,260.6L947.1,260.8L947.3,261.8L946.0,262.7L944.8,263.7L941.6,264.7L940.9,264.1L940.5,264.1L940.0,264.7L937.8,264.9L938.2,264.2L937.4,262.4L937.0,261.3L935.9,260.9L934.3,259.3L934.9,258.1L936.1,258.4L936.8,258.2L938.3,258.2L936.9,255.8L937.0,254.1L936.8,252.3Z"/>
<path fill="#f4f8f4" d="M937.8,264.9L940.0,264.7L940.5,264.1L940.9,264.1L941.6,264.7L944.8,263.7L946.0,262.7L947.3,261.8L947.1,260.8L947.8,260.6L950.4,260.8L952.8,259.5L954.7,256.7L956.1,255.6L957.7,255.2L958.0,256.3L959.5,257.9L959.5,259.0L959.1,260.1L959.3,260.9L960.2,261.6L962.2,262.8L963.6,263.9L963.6,264.7L965.4,266.1L966.5,267.2L967.2,268.8L969.1,269.8L969.5,270.7L968.7,270.9L967.0,270.9L965.0,270.6L964.1,270.8L963.7,271.5L962.8,271.5L961.8,271.0L958.9,272.3L957.7,272.0L957.3,272.3L956.5,273.8L954.6,273.3L952.6,273.1L951.0,272.1L948.8,271.2L947.4,272.0L946.4,273.4L946.1,275.2L944.5,275.1L942.7,274.6L941.1,276.0L939.7,278.4L939.5,277.7L939.3,276.5L938.2,275.6L937.2,274.3L936.9,273.4L935.7,272.0L935.9,271.2L935.7,270.1L935.9,268.1L936.5,267.6Z"/>
<path fill="#c8e4c9" d="M994.5,226.7L995.3,229.2L994.7,229.7L995.1,232.4L996.1,235.6L997.1,236.2L998.5,237.2L997.2,238.7L995.3,239.1L994.4,239.9L994.2,241.7L993.0,245.5L993.3,246.6L992.9,248.8L991.8,251.4L990.2,252.7L989.1,254.7L988.9,255.8L987.6,256.5L986.8,259.3L986.9,261.6L986.5,262.4L985.1,262.5L984.2,264.0L985.8,264.2L987.1,265.4L987.6,266.5L988.8,267.1L990.3,269.9L988.6,271.7L987.0,273.2L985.3,274.5L983.5,274.5L981.4,275.1L979.7,274.5L978.6,275.2L976.3,273.5L975.7,272.3L974.2,272.9L973.0,272.7L972.3,273.1L971.1,272.8L969.5,270.7L969.1,269.8L967.2,268.8L966.5,267.2L965.4,266.1L963.6,264.7L963.6,263.9L962.2,262.8L960.2,261.6L959.3,260.9L959.1,260.1L959.5,259.0L959.5,257.9L958.0,256.3L957.7,255.2L957.8,254.5L956.8,253.8L956.8,252.2L956.2,251.2L955.3,251.4L955.6,250.4L956.2,249.3L955.9,248.2L956.8,247.4L956.2,246.8L956.9,245.2L958.1,243.3L960.4,243.4L960.3,233.0L960.3,231.9L963.3,231.9L963.3,226.7L973.9,226.7L984.0,226.7Z"/>
<path fill="#f4f8f4" d="M1008.8,251.5L1008.0,250.6L1006.9,249.1L1005.7,248.3L1005.0,247.3L1002.8,246.3L1000.9,246.3L1000.3,245.7L998.8,246.3L997.2,245.1L996.4,247.1L993.3,246.6L993.0,245.5L994.2,241.7L994.4,239.9L995.3,239.1L997.2,238.7L998.5,237.2L1000.0,240.2L1000.8,242.6L1002.2,243.9L1005.8,246.4L1007.2,247.9L1008.7,249.4L1009.5,250.3L1010.8,251.1L1010.0,251.7Z"/>
<path fill="#dff0de" d="M1010.8,251.1L1011.4,251.9L1011.3,253.0L1009.8,253.6L1010.9,254.3L1010.0,255.7L1009.4,255.2L1008.7,255.5L1007.3,255.4L1007.2,254.6L1007.0,253.9L1007.9,252.6L1008.8,251.5L1010.0,251.7Z"/>
<path fill="#c8e4c9" d="M997.2,245.1L998.8,246.3L1000.3,245.7L1000.9,246.3L1002.8,246.3L1005.0,247.3L1005.7,248.3L1006.9,249.1L1008.0,250.6L1008.8,251.5L1007.9,252.6L1007.0,253.9L1007.2,254.6L1007.3,255.4L1008.7,255.5L1009.4,255.2L1010.0,255.7L1009.4,256.7L1010.4,258.1L1011.3,259.4L1012.3,260.3L1020.9,263.4L1023.1,263.4L1015.7,271.3L1012.3,271.4L1009.9,273.2L1008.3,273.3L1007.6,274.1L1005.8,274.1L1004.7,273.2L1002.3,274.3L1001.5,275.4L999.8,275.2L999.2,274.9L998.6,275.0L997.7,275.0L994.4,272.7L992.6,272.7L991.7,271.9L991.7,270.4L990.3,269.9L988.8,267.1L987.6,266.5L987.1,265.4L985.8,264.2L984.2,264.0L985.1,262.5L986.5,262.4L986.9,261.6L986.8,259.3L987.6,256.5L988.9,255.8L989.1,254.7L990.2,252.7L991.8,251.4L992.9,248.8L993.3,246.6L996.4,247.1Z"/>
<path fill="#f4f8f4" d="M1028.2,254.0L1029.6,253.8L1030.8,252.9L1031.8,252.9L1031.9,253.6L1031.6,255.1L1031.7,256.5L1031.1,257.4L1030.4,260.3L1029.1,263.2L1027.5,266.6L1025.2,270.4L1023.0,273.3L1019.9,276.9L1017.3,279.0L1013.4,281.6L1010.9,283.6L1008.0,286.8L1007.4,288.2L1006.9,288.8L1005.3,286.7L1005.3,277.1L1007.6,274.1L1008.3,273.3L1009.9,273.2L1012.3,271.4L1015.7,271.3L1023.1,263.4L1025.0,261.2L1026.1,259.6L1026.1,258.2L1026.1,254.5L1026.2,254.5ZM1026.2,254.5L1026.1,254.5L1026.1,259.6L1025.0,261.2L1023.1,263.4L1020.9,263.4L1012.3,260.3L1011.3,259.4L1010.4,258.1L1009.4,256.7L1010.0,255.7L1010.9,254.3L1011.8,254.8L1012.3,255.9L1013.5,257.0L1014.8,257.0L1017.3,256.3L1020.1,256.0L1022.4,255.2L1023.7,255.0L1024.7,254.5Z"/>
<path fill="#c8e4c9" d="M1005.3,286.7L1006.9,288.8L1005.0,289.9L1004.4,291.0L1003.4,291.1L1003.0,293.0L1002.2,294.1L1001.6,295.8L1000.6,296.7L996.8,294.1L996.6,292.5L987.1,287.2L986.7,286.9L986.6,284.1L987.4,283.0L988.7,281.3L989.7,279.4L988.5,276.4L988.2,275.1L987.0,273.2L988.6,271.7L990.3,269.9L991.7,270.4L991.7,271.9L992.6,272.7L994.4,272.7L997.7,275.0L998.6,275.0L999.2,274.9L999.8,275.2L1001.5,275.4L1002.3,274.3L1004.7,273.2L1005.8,274.1L1007.6,274.1L1005.3,277.1Z"/>
<path fill="#c8e4c9" d="M981.3,287.1L978.5,287.1L977.5,287.4L976.0,288.2L975.3,287.9L975.4,285.9L976.0,285.0L976.1,282.8L976.7,281.6L977.7,280.3L978.7,279.5L979.5,278.6L978.5,278.3L978.6,275.2L979.7,274.5L981.4,275.1L983.5,274.5L985.3,274.5L987.0,273.2L988.2,275.1L988.5,276.4L989.7,279.4L988.7,281.3L987.4,283.0L986.6,284.1L986.7,286.9Z"/>
<path fill="#c8e4c9" d="M977.5,287.4L978.6,288.9L978.4,290.4L977.7,290.7L976.3,290.6L975.5,292.1L973.9,291.9L974.1,290.4L974.5,290.2L974.6,288.7L975.3,287.9L976.0,288.2Z"/>
<path fill="#dff0de" d="M974.7,296.2L974.6,293.0L973.9,291.9L975.5,292.1L976.3,290.6L977.7,290.7L977.8,291.8L978.4,292.4L978.4,293.2L977.8,293.8L976.8,295.1L975.8,296.1Z"/>
<path fill="#c8e4c9" d="M986.7,286.9L987.1,287.2L996.6,292.5L996.8,294.1L1000.6,296.7L999.4,299.9L999.5,301.4L1001.2,302.3L1001.3,303.0L1000.6,304.6L1000.7,305.4L1000.6,306.7L1001.5,308.3L1002.5,310.9L1003.5,311.5L1001.4,313.0L998.6,314.0L997.0,314.0L996.0,314.8L994.2,314.8L993.5,315.2L990.4,314.4L988.4,314.6L987.7,311.1L986.8,309.8L986.3,309.1L983.7,308.6L982.2,307.8L980.5,307.4L979.5,306.9L978.4,306.3L977.0,303.0L975.4,301.5L974.9,300.0L975.2,298.6L974.7,296.2L975.8,296.1L976.8,295.1L977.8,293.8L978.4,293.2L978.4,292.4L977.8,291.8L977.7,290.7L978.4,290.4L978.6,288.9L977.5,287.4L978.5,287.1L981.3,287.1Z"/>
<path fill="#dff0de" d="M923.0,278.4L927.3,278.5L927.3,281.6L923.5,281.6L922.6,281.7L922.1,281.4Z"/>
<path fill="#dff0de" d="M927.3,278.5L928.6,278.3L930.2,278.7L931.7,278.3L932.0,278.4L931.8,279.6L932.6,281.0L934.5,280.7L935.2,281.3L934.0,284.3L935.3,285.8L935.6,287.9L935.2,289.6L934.4,290.9L932.1,290.8L930.7,289.5L930.5,290.7L928.7,291.0L927.8,291.7L928.8,293.4L926.8,294.8L924.1,292.2L922.4,290.0L920.8,287.3L920.9,286.4L921.5,285.6L922.1,283.7L922.6,281.7L923.5,281.6L927.3,281.6Z"/>
<path fill="#f4f8f4" d="M931.8,296.9L930.8,296.1L930.0,296.5L929.0,297.6L926.8,294.8L928.8,293.4L927.8,291.7L928.7,291.0L930.5,290.7L930.7,289.5L932.1,290.8L934.4,290.9L935.2,289.6L935.6,287.9L935.3,285.8L934.0,284.3L935.2,281.3L934.5,280.7L932.6,281.0L931.8,279.6L932.0,278.4L935.3,278.5L937.5,279.3L939.5,279.9L939.7,278.4L941.1,276.0L942.7,274.6L944.5,275.1L946.1,275.2L946.0,276.8L945.2,278.2L944.7,279.8L944.3,282.1L944.5,283.6L944.1,284.6L944.0,285.5L943.7,286.3L942.0,287.6L940.8,289.0L939.6,291.5L939.7,293.7L939.0,294.5L937.5,295.8L936.0,297.4L935.0,297.0L934.8,296.2L933.4,296.2L932.5,297.2Z"/>
<path fill="#c8e4c9" d="M978.6,275.2L978.5,278.3L979.5,278.6L978.7,279.5L977.7,280.3L976.7,281.6L976.1,282.8L976.0,285.0L975.4,285.9L975.3,287.9L974.6,288.7L974.5,290.2L974.1,290.4L973.9,291.9L974.6,293.0L974.7,296.2L975.2,298.6L974.9,300.0L975.4,301.5L977.0,303.0L978.4,306.3L977.4,306.0L973.8,306.5L973.1,306.8L972.4,308.4L973.0,309.6L972.5,312.7L972.2,315.3L972.9,315.8L974.7,316.8L975.4,316.4L975.7,319.2L973.6,319.2L972.6,317.7L971.6,316.6L969.6,316.2L969.0,314.9L967.4,315.7L965.3,315.3L964.4,314.1L962.7,313.9L961.5,313.9L961.4,313.1L960.5,313.1L959.3,312.9L957.7,313.3L956.5,313.2L955.9,313.5L956.0,310.4L955.1,309.4L954.9,307.8L955.3,306.2L954.8,305.2L954.7,303.5L951.5,303.6L951.8,302.6L950.4,302.6L950.3,303.1L948.7,303.2L948.0,304.7L947.6,305.4L946.2,305.0L945.3,305.4L943.6,305.6L942.6,304.2L942.0,303.3L941.2,301.8L940.6,299.8L932.8,299.8L931.9,300.1L931.1,300.1L930.0,300.4L929.7,299.6L930.4,299.3L930.4,298.2L930.9,297.5L931.8,296.9L932.5,297.2L933.4,296.2L934.8,296.2L935.0,297.0L936.0,297.4L937.5,295.8L939.0,294.5L939.7,293.7L939.6,291.5L940.8,289.0L942.0,287.6L943.7,286.3L944.0,285.5L944.1,284.6L944.5,283.6L944.3,282.1L944.7,279.8L945.2,278.2L946.0,276.8L946.1,275.2L946.4,273.4L947.4,272.0L948.8,271.2L951.0,272.1L952.6,273.1L954.6,273.3L956.5,273.8L957.3,272.3L957.7,272.0L958.9,272.3L961.8,271.0L962.8,271.5L963.7,271.5L964.1,270.8L965.0,270.6L967.0,270.9L968.7,270.9L969.5,270.7L971.1,272.8L972.3,273.1L973.0,272.7L974.2,272.9L975.7,272.3L976.3,273.5Z"/>
<path fill="#f4f8f4" d="M940.6,299.8L941.2,301.8L942.0,303.3L942.6,304.2L943.6,305.6L945.3,305.4L946.2,305.0L947.6,305.4L948.0,304.7L948.7,303.2L950.3,303.1L950.4,302.6L951.8,302.6L951.5,303.6L954.7,303.5L954.8,305.2L955.3,306.2L954.9,307.8L955.1,309.4L956.0,310.4L955.9,313.5L956.5,313.2L957.7,313.3L959.3,312.9L960.5,313.1L960.7,313.9L960.4,315.2L960.9,316.4L960.5,317.4L960.7,318.3L955.3,318.2L955.2,326.6L956.9,328.7L958.6,330.4L953.8,331.4L947.5,331.1L945.6,329.8L935.0,329.9L934.6,330.1L933.0,328.9L931.3,328.9L929.8,329.3L928.5,329.8L928.3,328.1L928.6,325.8L929.5,323.4L929.7,322.3L930.5,320.0L931.1,318.9L932.6,317.1L933.5,316.0L933.8,314.1L933.6,312.6L932.9,311.6L932.1,310.0L931.5,308.5L931.6,307.9L932.5,306.9L931.6,304.3L931.1,302.6L929.8,300.9L930.0,300.4L931.1,300.1L931.9,300.1L932.8,299.8ZM930.4,299.3L929.7,299.6L929.0,297.6L930.0,296.5L930.8,296.1L931.8,296.9L930.9,297.5L930.4,298.2Z"/>
<path fill="#c8e4c9" d="M983.7,308.6L984.9,309.8L985.6,312.0L985.2,312.7L984.6,314.9L985.1,317.0L984.3,317.9L983.5,320.4L984.9,321.1L976.9,323.2L977.1,325.1L975.2,325.4L973.7,326.5L973.4,327.4L972.4,327.6L970.1,329.8L968.7,331.5L967.8,331.5L966.9,331.2L964.0,330.9L963.5,330.7L963.5,330.5L962.5,329.9L960.8,329.8L958.6,330.4L956.9,328.7L955.2,326.6L955.3,318.2L960.7,318.3L960.5,317.4L960.9,316.4L960.4,315.2L960.7,313.9L960.5,313.1L961.4,313.1L961.5,313.9L962.7,313.9L964.4,314.1L965.3,315.3L967.4,315.7L969.0,314.9L969.6,316.2L971.6,316.6L972.6,317.7L973.6,319.2L975.7,319.2L975.4,316.4L974.7,316.8L972.9,315.8L972.2,315.3L972.5,312.7L973.0,309.6L972.4,308.4L973.1,306.8L973.8,306.5L977.4,306.0L978.4,306.3L979.5,306.9L980.5,307.4L982.2,307.8Z"/>
<path fill="#c8e4c9" d="M988.4,314.6L987.7,316.6L988.4,320.0L989.3,320.0L990.3,320.8L991.4,322.7L991.6,326.1L990.5,326.7L989.6,328.5L987.9,326.9L987.7,325.0L988.3,323.8L988.1,322.7L987.1,322.1L986.4,322.3L984.9,321.1L983.5,320.4L984.3,317.9L985.1,317.0L984.6,314.9L985.2,312.7L985.6,312.0L984.9,309.8L983.7,308.6L986.3,309.1L986.8,309.8L987.7,311.1Z"/>
<path fill="#c8e4c9" d="M988.4,314.6L990.4,314.4L993.5,315.2L994.2,314.8L996.0,314.8L997.0,314.0L998.6,314.0L1001.4,313.0L1003.5,311.5L1003.9,312.7L1003.8,315.3L1004.1,317.6L1004.3,321.7L1004.7,322.9L1003.9,324.8L1002.9,326.6L1001.2,328.3L998.8,329.3L995.9,330.6L992.9,333.4L991.9,333.8L990.1,335.7L989.0,336.3L988.8,338.2L990.0,340.2L990.5,341.7L990.6,342.5L991.0,342.4L991.0,344.9L990.5,346.2L991.2,346.6L990.8,347.7L989.7,348.6L987.5,349.5L984.3,350.9L983.2,351.9L983.4,353.0L984.1,353.2L983.9,354.6L981.9,354.5L981.7,353.4L981.3,352.2L981.0,351.3L981.5,348.3L980.8,346.5L979.6,342.8L982.3,339.8L983.0,337.9L983.4,337.7L983.7,336.1L983.3,335.4L983.4,333.4L983.9,331.6L983.9,328.2L982.6,327.4L981.3,327.2L980.7,326.6L979.5,326.0L977.3,326.1L977.1,325.1L976.9,323.2L984.9,321.1L986.4,322.3L987.1,322.1L988.1,322.7L988.3,323.8L987.7,325.0L987.9,326.9L989.6,328.5L990.5,326.7L991.6,326.1L991.4,322.7L990.3,320.8L989.3,320.0L988.4,320.0L987.7,316.6Z"/>
<path fill="#c8e4c9" d="M979.6,342.8L978.2,342.5L977.3,342.8L976.0,342.4L974.9,342.4L973.3,341.2L971.2,340.8L970.5,339.1L970.5,338.2L969.4,337.9L966.4,335.0L965.6,333.5L965.0,333.0L964.0,330.9L966.9,331.2L967.8,331.5L968.7,331.5L970.1,329.8L972.4,327.6L973.4,327.4L973.7,326.5L975.2,325.4L977.1,325.1L977.3,326.1L979.5,326.0L980.7,326.6L981.3,327.2L982.6,327.4L983.9,328.2L983.9,331.6L983.4,333.4L983.3,335.4L983.7,336.1L983.4,337.7L983.0,337.9L982.3,339.8Z"/>
<path fill="#c8e4c9" d="M965.0,333.0L965.6,333.5L966.4,335.0L969.4,337.9L970.5,338.2L970.5,339.1L971.2,340.8L973.3,341.2L974.9,342.4L971.2,344.3L968.9,346.2L968.0,348.0L967.2,349.0L965.8,349.2L965.3,350.4L965.1,351.3L963.4,351.9L961.2,351.8L960.0,351.0L958.9,350.7L957.6,351.3L957.0,352.6L955.7,353.4L954.4,354.5L952.5,354.8L952.0,353.9L952.2,352.3L950.6,349.8L949.9,349.4L949.9,341.7L952.5,341.6L952.6,332.3L954.6,332.2L958.6,331.3L959.6,332.4L961.3,331.3L962.1,331.3L963.5,330.7L964.0,330.9Z"/>
<path fill="#dff0de" d="M940.6,359.4L938.7,357.4L937.6,352.9L937.1,352.9L936.4,351.0L935.5,347.0L935.5,343.9L935.1,342.4L934.1,341.3L932.8,339.2L931.4,336.0L929.8,332.8L928.5,329.8L929.8,329.3L931.3,328.9L933.0,328.9L934.6,330.1L935.0,329.9L945.6,329.8L947.5,331.1L953.8,331.4L958.6,330.4L960.8,329.8L962.5,329.9L963.5,330.5L963.5,330.7L962.1,331.3L961.3,331.3L959.6,332.4L958.6,331.3L954.6,332.2L952.6,332.3L952.5,341.6L949.9,341.7L949.9,349.4L949.9,359.1L947.6,360.4L946.2,360.6L944.5,360.1L943.4,359.9L942.9,358.8L941.9,358.1Z"/>
<path fill="#5aab5c" d="M940.6,359.4L941.9,358.1L942.9,358.8L943.4,359.9L944.5,360.1L946.2,360.6L947.6,360.4L949.9,359.1L949.9,349.4L950.6,349.8L952.2,352.3L952.0,353.9L952.5,354.8L954.4,354.5L955.7,353.4L957.0,352.6L957.6,351.3L958.9,350.7L960.0,351.0L961.2,351.8L963.4,351.9L965.1,351.3L965.3,350.4L965.8,349.2L967.2,349.0L968.0,348.0L968.9,346.2L971.2,344.3L974.9,342.4L976.0,342.4L977.3,342.8L978.2,342.5L979.6,342.8L980.8,346.5L981.5,348.3L981.0,351.3L981.3,352.2L979.9,351.7L979.2,351.9L978.9,352.7L978.2,353.7L978.3,354.6L979.8,356.0L981.3,355.7L981.9,354.5L983.9,354.6L983.2,356.5L982.9,358.7L982.2,359.8L980.4,361.2L979.9,361.5L978.8,362.9L978.1,364.2L976.6,366.1L973.6,368.8L971.8,370.4L969.8,371.6L967.0,372.6L965.7,372.8L965.4,373.5L963.8,373.1L962.5,373.6L959.6,373.1L958.0,373.4L956.9,373.2L954.2,374.3L952.0,374.7L950.4,375.7L949.2,375.8L948.1,374.8L947.2,374.8L946.1,373.6L945.9,374.0L945.6,373.3L945.6,371.7L944.8,370.0L945.6,369.5L945.5,367.5L943.8,365.0L942.5,362.8L940.6,359.4Z"/>
<path fill="#ffffff" d="M973.8,360.4L974.7,361.2L973.9,362.4L973.4,363.3L972.0,363.7L971.5,364.6L970.5,364.8L968.6,362.8L970.0,361.1L971.4,360.1L972.6,359.6Z"/>
<path fill="#ffffff" d="M981.9,354.5L981.3,355.7L979.8,356.0L978.3,354.6L978.2,353.7L978.9,352.7L979.2,351.9L979.9,351.7L981.3,352.2L981.7,353.4Z"/>
<path fill="#dff0de" d="M1027.7,317.1L1028.4,318.2L1029.1,320.0L1029.5,323.1L1030.2,324.4L1029.9,325.6L1029.4,326.4L1028.6,324.8L1028.1,325.6L1028.6,327.6L1028.3,328.7L1027.6,329.3L1027.5,331.5L1026.4,334.6L1025.1,338.2L1023.5,343.2L1022.5,346.8L1021.3,349.8L1019.2,350.5L1016.9,351.6L1015.4,350.9L1013.3,350.0L1012.5,348.6L1012.4,346.2L1011.5,344.2L1011.2,342.3L1011.7,340.4L1012.9,339.9L1012.9,339.1L1014.1,337.1L1014.4,335.4L1013.8,334.2L1013.3,332.5L1013.1,330.1L1014.0,328.6L1014.4,327.0L1015.6,326.9L1017.1,326.3L1018.1,325.8L1019.2,325.8L1020.7,324.3L1022.9,322.7L1023.7,321.4L1023.3,320.2L1024.4,320.6L1025.9,318.7L1025.9,317.2L1026.8,316.0Z"/>
<path fill="#5aab5c" d="M1370.0,103.4L1370.0,113.9L1366.7,115.1L1363.2,114.9L1365.6,116.3L1367.2,118.4L1368.4,119.1L1368.7,120.2L1368.0,120.9L1363.1,120.3L1355.8,122.3L1353.5,122.6L1349.4,124.5L1345.6,126.1L1344.7,127.3L1340.9,125.5L1334.1,127.5L1332.9,126.5L1330.4,127.7L1326.8,127.3L1326.0,129.0L1322.9,131.6L1322.9,132.6L1325.9,133.2L1325.6,137.0L1323.1,137.1L1322.0,139.3L1323.1,140.4L1318.5,141.8L1317.6,144.8L1313.7,145.4L1312.9,148.1L1309.1,150.5L1308.2,148.7L1307.0,144.9L1305.6,139.1L1306.8,135.4L1309.1,133.9L1309.2,132.7L1313.3,132.1L1318.0,128.8L1322.5,126.1L1327.2,124.0L1329.3,120.3L1326.1,120.5L1324.5,122.7L1317.9,125.5L1315.7,122.3L1309.0,123.2L1302.4,127.6L1304.5,129.2L1298.7,129.9L1294.7,130.2L1294.8,128.3L1290.7,127.9L1287.5,129.2L1279.5,128.7L1270.9,129.5L1262.4,134.6L1252.3,140.8L1256.4,141.1L1257.7,142.8L1260.3,143.3L1261.9,142.0L1264.8,142.2L1268.6,145.1L1268.7,147.3L1266.7,149.9L1266.4,153.1L1265.2,157.3L1261.3,161.1L1260.4,162.9L1256.8,166.0L1253.3,169.0L1251.6,170.5L1248.1,172.1L1246.5,172.1L1244.8,170.8L1241.3,172.7L1240.9,173.6L1240.5,173.1L1240.5,171.8L1241.8,171.8L1242.2,168.7L1241.5,166.4L1243.8,165.5L1247.0,166.0L1248.7,163.4L1249.6,160.5L1250.6,159.6L1252.0,157.2L1247.7,158.0L1245.4,159.0L1241.4,159.0L1240.4,156.5L1237.3,154.7L1232.7,153.8L1231.7,151.3L1230.8,149.7L1229.8,148.5L1228.2,145.9L1225.9,144.9L1222.0,144.1L1218.5,144.2L1215.2,144.7L1213.1,146.0L1214.5,146.6L1214.5,148.1L1213.1,148.9L1210.7,151.7L1210.7,152.8L1207.0,154.5L1203.9,153.5L1200.8,153.7L1199.4,152.8L1197.8,152.5L1194.0,154.4L1190.5,154.8L1188.1,155.5L1184.8,155.1L1182.4,155.1L1180.8,153.8L1178.2,152.5L1175.6,152.1L1172.2,152.5L1169.8,153.0L1166.1,151.9L1165.6,149.9L1162.5,149.2L1160.1,148.9L1157.1,147.8L1154.4,150.5L1155.5,152.1L1152.9,153.9L1149.1,153.3L1146.5,153.2L1144.8,151.9L1142.0,151.9L1139.7,151.1L1135.7,152.3L1130.8,154.6L1128.0,155.0L1127.0,155.3L1125.6,153.6L1122.2,154.0L1121.1,152.9L1119.2,152.4L1118.0,150.9L1116.5,150.4L1112.8,151.1L1109.1,149.6L1107.7,150.9L1101.9,144.3L1098.5,142.2L1099.5,141.4L1092.9,143.9L1090.4,144.0L1090.6,142.6L1087.2,141.7L1084.5,142.4L1083.7,139.6L1079.0,139.1L1076.6,140.2L1070.0,141.1L1068.8,141.8L1058.9,142.7L1057.7,143.6L1059.6,145.4L1057.1,146.1L1057.6,146.8L1055.1,148.1L1059.3,149.9L1058.7,151.1L1055.0,151.0L1054.2,151.8L1050.9,150.4L1046.7,150.5L1043.9,151.6L1040.8,150.5L1035.0,148.7L1030.9,148.8L1025.5,151.6L1025.2,153.5L1022.5,152.0L1020.4,154.9L1021.2,155.4L1019.7,157.4L1021.9,159.2L1023.8,159.1L1025.5,160.9L1025.2,162.2L1026.6,162.6L1025.4,164.2L1022.8,164.6L1020.2,167.3L1022.6,169.8L1022.3,171.6L1025.2,174.7L1023.6,175.7L1023.2,176.4L1022.0,176.2L1020.2,174.6L1019.5,174.6L1017.8,174.0L1017.0,172.9L1014.6,172.3L1013.0,172.7L1012.5,172.3L1009.0,171.0L1005.1,170.6L1002.9,170.1L1002.6,170.4L999.2,168.2L996.2,167.2L994.0,165.7L995.9,165.3L998.0,163.1L996.6,162.0L1000.4,161.0L1000.4,160.4L998.0,160.8L998.1,159.6L999.5,158.9L1002.0,158.7L1002.4,157.8L1001.8,156.4L1002.9,155.0L1002.9,154.2L999.0,153.4L997.5,153.4L995.8,152.2L993.8,152.6L990.5,151.7L990.6,151.2L989.6,150.0L987.5,149.9L987.3,149.1L988.0,148.6L986.3,147.1L983.6,147.3L982.8,147.2L982.1,147.8L981.1,147.7L980.5,146.0L979.9,145.1L980.4,144.9L982.5,145.0L983.5,144.4L982.8,143.7L981.0,143.3L981.1,142.8L980.1,142.3L978.4,140.6L979.0,139.9L978.7,138.6L976.2,138.0L974.8,138.3L974.4,137.7L971.7,137.0L970.8,135.5L970.6,134.2L969.3,133.6L970.5,132.8L969.7,130.3L971.5,128.8L971.1,128.3L974.1,126.9L971.4,125.6L977.0,122.3L979.4,120.8L980.4,119.4L976.5,117.6L977.6,115.9L975.2,114.0L977.0,111.7L973.9,108.7L976.4,106.8L972.4,105.0L972.7,103.2L974.9,102.9L979.3,101.9L982.0,101.0L986.4,102.6L993.5,103.2L1003.4,106.2L1005.5,107.4L1005.6,109.1L1002.7,110.5L998.4,111.2L986.7,109.2L984.8,109.6L989.1,111.5L989.2,112.7L989.4,115.4L992.8,116.2L994.8,116.9L995.2,115.6L993.6,114.5L995.3,113.5L1001.6,115.1L1003.8,114.5L1002.1,112.5L1008.2,110.0L1010.6,110.1L1013.0,111.0L1014.6,109.2L1012.4,107.7L1013.7,106.1L1011.7,104.5L1019.1,105.3L1020.6,106.8L1017.3,107.1L1017.3,108.6L1019.3,109.5L1023.4,108.9L1024.0,107.2L1029.5,106.0L1038.7,103.7L1040.6,103.8L1038.1,105.4L1041.3,105.7L1043.2,104.8L1048.1,104.7L1052.0,103.7L1055.0,105.2L1058.0,103.5L1055.2,102.0L1056.6,101.1L1064.3,101.9L1068.0,102.7L1077.5,105.7L1079.2,104.3L1076.6,103.0L1076.5,102.4L1073.3,102.2L1074.2,100.9L1072.8,98.9L1072.7,98.0L1077.6,95.7L1079.3,93.3L1081.2,92.7L1088.2,93.4L1088.7,94.9L1086.3,97.0L1087.9,97.9L1088.7,99.7L1088.1,103.3L1091.0,104.9L1089.9,106.7L1084.8,110.4L1087.8,110.8L1088.8,109.8L1091.7,109.1L1092.4,107.9L1094.7,106.6L1093.1,105.1L1094.4,103.4L1091.5,103.2L1090.8,101.7L1092.9,99.1L1089.5,96.9L1094.2,95.2L1093.6,93.3L1094.9,93.2L1096.3,94.7L1095.3,97.2L1098.1,97.7L1096.9,95.8L1101.3,94.8L1106.7,94.6L1111.6,96.1L1109.2,94.0L1109.0,91.1L1113.5,90.6L1119.9,90.7L1125.5,90.4L1123.4,89.0L1126.5,87.3L1129.5,87.2L1134.6,85.9L1141.5,85.6L1142.4,84.8L1149.3,84.6L1151.4,85.2L1157.3,83.8L1162.1,83.8L1162.8,82.7L1165.3,81.6L1171.5,80.5L1176.0,81.4L1172.5,82.0L1178.4,82.4L1179.1,83.7L1181.5,83.1L1189.2,83.1L1195.1,84.4L1197.2,85.4L1196.6,86.7L1193.7,87.5L1186.8,89.0L1184.8,89.8L1188.0,90.1L1191.9,90.8L1194.3,90.3L1195.6,92.0L1196.8,91.3L1201.0,90.9L1209.4,91.3L1210.0,92.5L1221.0,92.9L1221.2,90.9L1226.7,91.4L1230.9,91.4L1235.1,92.7L1236.3,94.4L1234.8,95.5L1238.1,97.6L1242.2,98.6L1244.7,95.9L1249.0,97.1L1253.4,96.4L1258.5,97.2L1260.4,96.4L1264.7,96.8L1262.8,94.4L1266.3,93.2L1290.0,94.9L1292.2,96.5L1299.1,98.5L1309.7,98.0L1314.9,98.4L1317.1,99.5L1316.8,101.5L1320.0,102.2L1323.5,101.7L1328.2,101.6L1333.1,102.1L1338.1,101.8L1342.7,104.2L1346.0,103.3L1343.8,101.6L1345.0,100.5L1353.4,101.2L1358.8,101.0L1366.4,102.3L1370.0,103.4ZM425.4,103.4L431.8,105.4L438.7,108.0L438.5,109.7L440.3,110.3L439.6,108.4L446.8,108.8L451.9,111.3L449.3,112.4L445.0,112.7L444.9,115.3L443.9,115.8L441.4,115.7L439.4,114.8L435.9,114.0L435.3,112.9L432.7,112.5L429.7,112.8L428.3,111.9L428.8,110.9L425.7,111.6L426.9,112.8L425.4,113.9ZM1274.7,151.2L1277.3,155.9L1273.4,155.0L1271.8,158.8L1274.3,161.5L1274.3,163.3L1272.3,161.8L1270.6,163.8L1270.1,161.6L1270.4,159.0L1270.1,156.2L1270.7,154.2L1270.8,150.7L1269.3,148.1L1269.5,144.5L1271.9,143.3L1270.9,142.1L1272.0,141.7L1272.7,143.5L1273.6,146.0L1273.6,148.6ZM1038.1,90.9L1044.4,88.6L1043.7,87.4L1049.6,86.0L1058.2,84.3L1067.0,83.8L1071.5,82.9L1076.6,82.5L1078.4,83.6L1076.6,84.4L1067.3,85.7L1059.3,86.9L1051.2,89.4L1047.3,92.0L1043.1,94.5L1043.7,96.7L1048.7,98.8L1047.1,99.1L1038.6,98.7L1037.9,97.5L1033.1,96.9L1032.8,95.4L1035.4,94.9L1035.3,93.5L1040.5,91.2ZM1178.4,82.4L1179.1,83.7L1181.5,83.1L1178.4,82.4ZM1173.4,78.9L1158.7,79.9L1163.4,76.5L1165.6,76.2L1167.6,76.4L1174.2,77.9ZM1160.0,77.4L1154.2,77.7L1146.9,77.0L1142.6,76.0L1140.6,74.1L1137.0,73.6L1143.8,71.8L1149.5,71.2L1154.6,72.5L1160.6,75.1ZM1259.8,86.8L1258.5,87.9L1263.0,88.6L1270.3,87.9L1272.4,86.3L1266.7,85.2L1261.9,84.7ZM1265.9,91.8L1269.0,92.1L1274.5,92.3L1271.9,90.6L1265.9,90.5ZM1281.1,86.8L1286.6,88.1L1293.2,87.3L1290.3,86.3L1286.1,86.0ZM1025.0,103.3L1027.6,104.1L1029.4,103.1L1026.8,102.0ZM1052.5,100.7L1055.9,101.2L1054.1,99.7ZM1306.8,152.4L1307.6,151.4L1305.8,151.1ZM1283.4,165.8L1287.4,165.5L1290.0,164.0L1286.1,164.0ZM1279.5,169.5L1281.6,167.9L1280.8,167.6Z"/>
<path fill="#c8e4c9" d="M1083.9,173.5L1082.4,174.0L1079.0,175.8L1077.8,177.7L1076.8,177.7L1076.1,176.4L1072.8,176.4L1072.2,174.2L1071.0,174.2L1071.2,171.6L1068.0,169.7L1063.5,169.9L1060.4,170.3L1057.9,167.9L1055.8,166.9L1051.7,165.0L1051.2,164.8L1044.5,166.3L1044.6,176.0L1043.2,176.1L1041.4,174.1L1039.6,173.4L1036.6,173.9L1035.5,174.8L1035.3,174.1L1036.0,173.0L1035.5,172.1L1032.4,171.2L1031.3,168.9L1029.8,168.2L1029.7,167.3L1032.3,167.6L1032.4,165.7L1034.6,165.2L1036.9,165.6L1037.4,163.1L1036.9,161.5L1034.3,161.6L1032.0,160.9L1029.0,162.1L1026.6,162.6L1025.2,162.2L1025.5,160.9L1023.8,159.1L1021.9,159.2L1019.7,157.4L1021.2,155.4L1020.4,154.9L1022.5,152.0L1025.2,153.5L1025.5,151.6L1030.9,148.8L1035.0,148.7L1040.8,150.5L1043.9,151.6L1046.7,150.5L1050.9,150.4L1054.2,151.8L1055.0,151.0L1058.7,151.1L1059.3,149.9L1055.1,148.1L1057.6,146.8L1057.1,146.1L1059.6,145.4L1057.7,143.6L1058.9,142.7L1068.8,141.8L1070.0,141.1L1076.6,140.2L1079.0,139.1L1083.7,139.6L1084.5,142.4L1087.2,141.7L1090.6,142.6L1090.4,144.0L1092.9,143.9L1099.5,141.4L1098.5,142.2L1101.9,144.3L1107.7,150.9L1109.1,149.6L1112.8,151.1L1116.5,150.4L1118.0,150.9L1119.2,152.4L1121.1,152.9L1122.2,154.0L1125.6,153.6L1127.0,155.3L1125.0,157.0L1122.8,157.2L1122.6,159.9L1121.2,161.1L1116.0,160.2L1114.1,164.9L1112.8,165.5L1107.6,166.5L1109.9,171.1L1108.1,171.8L1108.3,173.3L1106.7,172.9L1105.4,171.9L1101.5,171.7L1097.1,171.6L1096.2,171.9L1092.4,170.8L1091.0,171.3L1090.6,172.9L1086.2,172.0L1084.5,172.4Z"/>
<path fill="#c8e4c9" d="M1044.6,176.0L1044.5,166.3L1051.2,164.8L1051.7,165.0L1055.8,166.9L1057.9,167.9L1060.4,170.3L1063.5,169.9L1068.0,169.7L1071.2,171.6L1071.0,174.2L1072.2,174.2L1072.8,176.4L1076.1,176.4L1076.8,177.7L1077.8,177.7L1079.0,175.8L1082.4,174.0L1083.9,173.5L1084.7,173.7L1082.5,175.5L1084.4,176.4L1086.3,175.8L1089.4,177.2L1086.0,179.0L1084.1,178.8L1083.0,178.9L1082.6,178.1L1083.2,176.9L1079.6,177.5L1078.8,179.2L1077.6,180.7L1075.4,180.5L1074.7,181.7L1076.6,182.3L1077.2,184.3L1075.7,186.9L1073.7,186.4L1072.3,186.4L1072.3,184.8L1068.9,183.6L1066.1,182.4L1064.4,181.1L1061.4,179.3L1060.1,176.6L1059.2,176.1L1056.4,176.2L1055.4,175.7L1055.1,173.6L1051.6,172.2L1049.4,173.7L1047.1,174.6L1047.6,176.0Z"/>
<path fill="#f4f8f4" d="M1035.5,174.8L1036.6,173.9L1039.6,173.4L1041.4,174.1L1043.2,176.1L1044.6,176.0L1047.6,176.0L1047.1,174.6L1049.4,173.7L1051.6,172.2L1055.1,173.6L1055.4,175.7L1056.4,176.2L1059.2,176.1L1060.1,176.6L1061.4,179.3L1064.4,181.1L1066.1,182.4L1068.9,183.6L1072.3,184.8L1072.3,186.4L1071.5,186.3L1070.2,185.6L1069.8,186.5L1067.6,187.0L1067.1,189.1L1065.6,189.9L1063.5,190.3L1063.0,191.5L1061.0,191.9L1058.3,190.9L1058.1,188.7L1056.2,188.5L1053.1,186.2L1051.1,185.9L1048.2,184.6L1046.3,184.4L1045.1,184.8L1043.4,184.8L1041.5,186.3L1039.2,186.8L1038.7,184.9L1039.1,182.2L1037.1,181.3L1037.7,179.5L1036.0,179.4L1036.6,177.1L1039.0,177.8L1041.4,176.9L1039.4,175.4L1038.7,173.9L1036.6,174.5Z"/>
<path fill="#c8e4c9" d="M1083.9,173.5L1084.5,172.4L1086.2,172.0L1090.6,172.9L1091.0,171.3L1092.4,170.8L1096.2,171.9L1097.1,171.6L1101.5,171.7L1105.4,171.9L1106.7,172.9L1108.3,173.3L1108.0,173.9L1103.8,175.3L1102.9,176.3L1099.5,176.6L1098.5,178.3L1095.8,178.0L1093.9,178.5L1091.4,179.7L1091.8,180.3L1091.1,180.9L1086.1,181.3L1082.8,180.5L1080.0,180.7L1080.2,179.2L1083.1,179.6L1084.1,178.8L1086.0,179.0L1089.4,177.2L1086.3,175.8L1084.4,176.4L1082.5,175.5L1084.7,173.7Z"/>
<path fill="#f4f8f4" d="M1084.1,178.8L1083.1,179.6L1080.2,179.2L1080.0,180.7L1082.8,180.5L1086.1,181.3L1091.1,180.9L1091.7,183.3L1092.6,183.1L1094.2,183.7L1094.1,184.7L1094.5,186.2L1091.8,186.2L1090.0,186.0L1088.3,187.2L1087.1,187.4L1086.2,188.0L1085.2,187.1L1085.4,184.9L1084.7,184.8L1084.9,184.0L1083.5,183.4L1082.4,184.3L1082.1,185.4L1081.7,185.8L1080.1,185.7L1079.3,186.9L1078.4,186.4L1076.5,187.3L1075.7,186.9L1077.2,184.3L1076.6,182.3L1074.7,181.7L1075.4,180.5L1077.6,180.7L1078.8,179.2L1079.6,177.5L1083.2,176.9L1082.6,178.1L1083.0,178.9Z"/>
<path fill="#dff0de" d="M1128.0,155.0L1130.8,154.6L1135.7,152.3L1139.7,151.1L1142.0,151.9L1144.8,151.9L1146.5,153.2L1149.1,153.3L1152.9,153.9L1155.5,152.1L1154.4,150.5L1157.1,147.8L1160.1,148.9L1162.5,149.2L1165.6,149.9L1166.1,151.9L1169.8,153.0L1172.2,152.5L1175.6,152.1L1178.2,152.5L1180.8,153.8L1182.4,155.1L1184.8,155.1L1188.1,155.5L1190.5,154.8L1194.0,154.4L1197.8,152.5L1199.4,152.8L1200.8,153.7L1203.9,153.5L1202.6,155.5L1200.8,158.1L1201.4,159.2L1202.9,158.8L1205.5,159.2L1207.5,158.3L1209.6,159.1L1212.0,160.9L1211.7,161.9L1209.6,161.6L1205.8,161.9L1204.0,162.7L1202.1,164.4L1198.1,165.4L1195.4,166.8L1192.8,166.3L1191.3,166.1L1189.9,167.7L1190.7,168.8L1191.2,169.6L1189.3,170.5L1187.4,171.9L1184.4,172.8L1180.4,172.9L1176.2,173.9L1173.1,175.2L1172.0,174.4L1168.8,174.4L1164.9,172.9L1162.4,172.5L1158.9,172.8L1153.4,172.2L1150.5,172.3L1149.0,170.7L1147.8,168.3L1146.2,168.0L1143.0,166.4L1139.5,166.0L1136.4,165.6L1135.4,164.4L1136.4,161.4L1134.6,159.3L1130.9,158.3L1128.7,156.9Z"/>
<path fill="#1a541b" d="M1232.7,153.8L1237.3,154.7L1240.4,156.5L1241.4,159.0L1245.4,159.0L1247.7,158.0L1252.0,157.2L1250.6,159.6L1249.6,160.5L1248.7,163.4L1247.0,166.0L1243.8,165.5L1241.5,166.4L1242.2,168.7L1241.8,171.8L1240.5,171.8L1240.5,173.1L1238.8,171.6L1237.8,173.1L1233.7,174.2L1234.1,175.6L1231.9,175.5L1230.6,174.7L1228.8,176.5L1225.9,177.9L1223.8,179.6L1220.1,180.4L1218.2,181.6L1215.4,182.3L1216.8,181.1L1216.2,180.1L1218.3,178.3L1216.9,176.9L1214.6,177.9L1211.7,179.7L1210.0,181.4L1207.5,181.5L1206.1,182.7L1207.5,184.5L1209.7,185.0L1209.7,186.1L1211.8,186.9L1214.8,185.0L1217.1,186.1L1218.8,186.1L1219.2,187.5L1215.5,188.2L1214.3,189.6L1211.7,191.0L1210.4,192.8L1213.2,194.2L1214.2,196.8L1215.8,199.2L1217.6,201.2L1217.6,203.2L1215.9,203.9L1216.5,205.3L1218.1,206.1L1217.7,208.3L1217.0,210.3L1215.6,210.6L1213.6,213.4L1211.5,216.9L1209.1,220.0L1205.5,222.4L1201.8,224.6L1198.9,224.9L1197.2,226.1L1196.4,225.2L1194.9,226.5L1191.2,227.9L1188.4,228.2L1187.5,231.0L1186.1,231.2L1185.4,229.3L1186.0,228.2L1182.5,227.4L1181.2,227.9L1178.6,227.2L1177.4,226.1L1177.8,224.6L1175.4,224.1L1174.1,223.1L1171.9,224.5L1169.3,224.8L1167.2,224.8L1165.8,225.5L1164.4,225.8L1164.8,228.8L1163.5,228.8L1163.2,228.1L1163.1,227.1L1161.2,227.8L1160.1,227.4L1158.1,226.4L1158.9,224.2L1157.2,223.7L1156.6,221.3L1153.8,221.7L1154.1,218.6L1156.6,216.4L1156.7,214.2L1156.7,212.2L1155.5,211.6L1154.6,210.0L1153.1,210.2L1150.3,209.9L1151.2,208.8L1149.9,207.1L1148.0,208.2L1145.9,207.6L1142.8,209.2L1140.4,211.2L1138.3,211.5L1137.2,210.8L1135.8,210.8L1133.9,210.1L1132.5,210.8L1130.8,212.8L1130.5,210.7L1128.9,211.2L1125.9,211.0L1122.9,210.4L1120.8,209.2L1118.7,208.7L1117.9,207.5L1116.4,207.1L1113.8,205.4L1111.7,204.6L1110.6,205.2L1106.9,203.4L1104.3,201.7L1103.6,198.8L1105.5,199.2L1105.6,197.8L1104.5,196.5L1104.8,194.3L1102.0,191.3L1097.6,190.2L1096.9,188.2L1094.9,187.0L1094.5,186.2L1094.1,184.7L1094.2,183.7L1092.6,183.1L1091.7,183.3L1091.1,180.9L1091.8,180.3L1091.4,179.7L1093.9,178.5L1095.8,178.0L1098.5,178.3L1099.5,176.6L1102.9,176.3L1103.8,175.3L1108.0,173.9L1108.3,173.3L1108.1,171.8L1109.9,171.1L1107.6,166.5L1112.8,165.5L1114.1,164.9L1116.0,160.2L1121.2,161.1L1122.6,159.9L1122.8,157.2L1125.0,157.0L1127.0,155.3L1128.0,155.0L1128.7,156.9L1130.9,158.3L1134.6,159.3L1136.4,161.4L1135.4,164.4L1136.4,165.6L1139.5,166.0L1143.0,166.4L1146.2,168.0L1147.8,168.3L1149.0,170.7L1150.5,172.3L1153.4,172.2L1158.9,172.8L1162.4,172.5L1164.9,172.9L1168.8,174.4L1172.0,174.4L1173.1,175.2L1176.2,173.9L1180.4,172.9L1184.4,172.8L1187.4,171.9L1189.3,170.5L1191.2,169.6L1190.7,168.8L1189.9,167.7L1191.3,166.1L1192.8,166.3L1195.4,166.8L1198.1,165.4L1202.1,164.4L1204.0,162.7L1205.8,161.9L1209.6,161.6L1211.7,161.9L1212.0,160.9L1209.6,159.1L1207.5,158.3L1205.5,159.2L1202.9,158.8L1201.4,159.2L1200.8,158.1L1202.6,155.5L1203.9,153.5L1207.0,154.5L1210.7,152.8L1210.7,151.7L1213.1,148.9L1214.5,148.1L1214.5,146.6L1213.1,146.0L1215.2,144.7L1218.5,144.2L1222.0,144.1L1225.9,144.9L1228.2,145.9L1229.8,148.5L1230.8,149.7L1231.7,151.3ZM1187.3,235.4L1185.0,236.6L1182.8,235.8L1182.8,233.6L1184.1,232.4L1186.9,231.7L1188.4,231.7L1189.0,232.7L1187.9,233.9Z"/>
<path fill="#5aab5c" d="M1217.3,220.4L1215.7,224.6L1214.6,226.8L1213.2,224.5L1212.9,222.6L1214.4,220.0L1216.5,218.0L1217.7,218.8Z"/>
<path fill="#5aab5c" d="M1234.5,183.1L1236.8,186.2L1237.4,187.9L1237.4,190.9L1236.5,192.4L1234.1,192.8L1232.0,193.9L1229.6,194.2L1229.3,192.7L1229.8,190.8L1228.7,188.0L1230.6,187.6L1228.8,185.3L1229.0,185.1L1230.1,185.2L1231.2,184.0L1233.0,183.9Z"/>
<path fill="#5aab5c" d="M1251.0,194.8L1251.4,195.7L1249.9,197.3L1248.8,196.4L1247.4,197.0L1246.7,198.6L1245.0,197.8L1245.1,196.6L1246.5,195.0L1248.0,195.3L1249.1,194.2ZM1267.7,186.9L1266.7,189.0L1267.1,190.4L1265.7,192.2L1262.4,193.4L1257.8,193.6L1254.0,196.6L1252.3,195.6L1252.2,193.6L1247.6,194.2L1244.5,195.4L1241.4,195.5L1244.1,197.4L1242.3,201.9L1240.7,203.0L1239.4,202.0L1240.0,199.6L1238.3,198.8L1237.3,197.0L1239.8,196.2L1241.1,194.6L1243.8,193.2L1245.7,191.4L1250.9,190.6L1253.7,191.2L1256.5,186.5L1258.2,187.8L1262.1,185.1L1263.6,184.1L1265.2,180.9L1264.8,178.0L1265.9,176.3L1268.7,175.8L1270.1,179.5L1270.0,181.6L1267.6,184.2ZM1275.3,168.5L1277.2,169.0L1279.0,167.9L1279.6,170.9L1275.7,171.6L1273.4,174.2L1269.3,172.4L1267.9,175.3L1265.0,175.3L1264.6,172.7L1265.9,170.7L1268.7,170.5L1269.5,166.9L1270.2,164.9L1273.3,167.6Z"/>
<path fill="#f4f8f4" d="M1058.3,190.9L1061.0,191.9L1063.0,191.5L1063.5,190.3L1065.6,189.9L1067.1,189.1L1067.6,187.0L1069.8,186.5L1070.2,185.6L1071.5,186.3L1072.3,186.4L1073.7,186.4L1075.7,186.9L1076.5,187.3L1078.4,186.4L1079.3,186.9L1080.1,185.7L1081.7,185.8L1082.1,185.4L1082.4,184.3L1083.5,183.4L1084.9,184.0L1084.7,184.8L1085.4,184.9L1085.2,187.1L1086.2,188.0L1087.1,187.4L1088.3,187.2L1090.0,186.0L1091.8,186.2L1094.5,186.2L1094.9,187.0L1093.4,187.3L1092.1,187.7L1089.1,188.0L1086.3,188.6L1084.7,189.8L1085.3,190.9L1085.6,192.2L1084.3,193.3L1084.4,194.3L1083.7,195.2L1081.2,195.1L1082.2,196.9L1080.6,197.5L1079.5,199.1L1079.6,200.7L1078.6,201.4L1077.6,201.2L1075.6,201.5L1075.3,202.3L1073.4,202.3L1071.9,203.7L1071.8,206.0L1068.4,207.1L1066.6,206.8L1066.0,207.4L1064.5,207.1L1061.9,207.5L1057.4,206.1L1059.8,203.7L1059.6,202.1L1057.6,201.6L1057.4,200.0L1056.6,197.9L1057.7,196.4L1056.6,196.0L1057.3,194.1L1058.3,190.9Z"/>
<path fill="#5aab5c" d="M1094.9,187.0L1096.9,188.2L1097.6,190.2L1102.0,191.3L1099.4,193.5L1096.5,193.9L1092.5,193.2L1091.2,194.3L1092.2,196.7L1093.1,198.4L1095.2,199.7L1093.0,201.2L1093.0,203.1L1090.5,205.7L1088.8,208.4L1086.1,211.2L1083.0,211.0L1080.1,213.7L1081.8,214.9L1082.1,216.9L1083.6,218.2L1084.1,220.5L1078.4,220.5L1076.6,222.2L1074.7,221.6L1073.9,219.7L1071.9,217.7L1067.0,218.2L1062.8,218.2L1059.1,218.6L1060.1,215.5L1063.9,214.2L1063.6,213.0L1062.4,212.6L1062.3,210.2L1059.8,209.1L1058.8,207.5L1057.4,206.1L1061.9,207.5L1064.5,207.1L1066.0,207.4L1066.6,206.8L1068.4,207.1L1071.8,206.0L1071.9,203.7L1073.4,202.3L1075.3,202.3L1075.6,201.5L1077.6,201.2L1078.6,201.4L1079.6,200.7L1079.5,199.1L1080.6,197.5L1082.2,196.9L1081.2,195.1L1083.7,195.2L1084.4,194.3L1084.3,193.3L1085.6,192.2L1085.3,190.9L1084.7,189.8L1086.3,188.6L1089.1,188.0L1092.1,187.7L1093.4,187.3Z"/>
<path fill="#5aab5c" d="M1102.0,191.3L1104.8,194.3L1104.5,196.5L1105.6,197.8L1105.5,199.2L1103.6,198.8L1104.3,201.7L1106.9,203.4L1110.6,205.2L1108.9,206.4L1107.9,208.9L1110.4,209.8L1112.9,211.1L1116.3,212.6L1119.9,212.9L1121.4,214.3L1123.4,214.5L1126.6,215.1L1128.8,215.1L1129.1,214.1L1128.7,212.4L1128.9,211.2L1130.5,210.7L1130.8,212.8L1130.8,213.3L1133.2,214.3L1134.9,213.9L1137.1,214.1L1139.2,214.0L1139.4,212.4L1138.3,211.5L1140.4,211.2L1142.8,209.2L1145.9,207.6L1148.0,208.2L1149.9,207.1L1151.2,208.8L1150.3,209.9L1153.1,210.2L1153.3,211.2L1152.4,211.7L1152.6,213.3L1150.7,212.9L1147.3,214.7L1147.4,216.2L1146.0,218.4L1145.8,219.6L1144.7,221.8L1142.6,221.2L1142.5,223.9L1141.9,224.8L1142.2,225.9L1140.9,226.6L1139.5,222.4L1138.8,222.4L1138.4,224.1L1136.9,222.7L1137.7,221.2L1138.9,221.1L1140.1,218.9L1138.6,218.4L1136.2,218.5L1133.7,218.1L1133.4,216.3L1132.2,216.1L1130.1,215.0L1129.2,216.8L1131.1,218.2L1129.4,219.1L1128.8,220.1L1130.5,220.8L1130.0,222.4L1130.9,224.4L1131.3,226.5L1131.0,227.5L1129.2,227.5L1126.0,228.0L1126.1,230.0L1124.7,231.5L1120.9,233.3L1118.0,236.4L1116.0,238.0L1113.4,239.7L1113.4,240.9L1112.1,241.6L1109.7,242.5L1108.5,242.7L1107.7,244.7L1108.2,248.1L1108.4,250.3L1107.3,252.8L1107.3,257.2L1105.9,257.3L1104.7,259.3L1105.5,260.2L1103.1,261.0L1102.2,262.8L1101.2,263.5L1098.7,261.0L1097.5,257.4L1096.5,254.7L1095.6,253.5L1094.2,251.0L1093.5,247.7L1093.1,246.0L1090.7,242.4L1089.6,237.4L1088.8,234.0L1088.8,230.8L1088.3,228.4L1084.5,229.9L1082.6,229.6L1079.2,226.4L1080.5,225.5L1079.7,224.5L1076.6,222.2L1078.4,220.5L1084.1,220.5L1083.6,218.2L1082.1,216.9L1081.8,214.9L1080.1,213.7L1083.0,211.0L1086.1,211.2L1088.8,208.4L1090.5,205.7L1093.0,203.1L1093.0,201.2L1095.2,199.7L1093.1,198.4L1092.2,196.7L1091.2,194.3L1092.5,193.2L1096.5,193.9L1099.4,193.5Z"/>
<path fill="#c8e4c9" d="M1128.9,211.2L1128.7,212.4L1129.1,214.1L1128.8,215.1L1126.6,215.1L1123.4,214.5L1121.4,214.3L1119.9,212.9L1116.3,212.6L1112.9,211.1L1110.4,209.8L1107.9,208.9L1108.9,206.4L1110.6,205.2L1111.7,204.6L1113.8,205.4L1116.4,207.1L1117.9,207.5L1118.7,208.7L1120.8,209.2L1122.9,210.4L1125.9,211.0Z"/>
<path fill="#dff0de" d="M1138.3,211.5L1139.4,212.4L1139.2,214.0L1137.1,214.1L1134.9,213.9L1133.2,214.3L1130.8,213.3L1130.8,212.8L1132.5,210.8L1133.9,210.1L1135.8,210.8L1137.2,210.8Z"/>
<path fill="#9bcf9b" d="M1140.9,226.6L1140.8,228.5L1139.9,228.0L1140.1,230.2L1139.3,228.8L1139.2,227.5L1138.7,226.2L1137.6,224.7L1135.2,224.5L1135.4,225.6L1134.6,227.1L1133.5,226.6L1133.1,227.0L1132.4,226.8L1131.3,226.5L1130.9,224.4L1130.0,222.4L1130.5,220.8L1128.8,220.1L1129.4,219.1L1131.1,218.2L1129.2,216.8L1130.1,215.0L1132.2,216.1L1133.4,216.3L1133.7,218.1L1136.2,218.5L1138.6,218.4L1140.1,218.9L1138.9,221.1L1137.7,221.2L1136.9,222.7L1138.4,224.1L1138.8,222.4L1139.5,222.4Z"/>
<path fill="#c8e4c9" d="M1112.3,264.7L1111.9,267.4L1110.8,268.1L1108.6,268.7L1107.3,266.7L1106.9,262.9L1108.0,258.6L1109.8,260.1L1111.1,261.9Z"/>
<path fill="#f4f8f4" d="M1158.9,231.4L1157.4,232.6L1155.5,232.7L1154.3,235.5L1153.2,236.0L1154.5,238.3L1156.2,240.2L1157.2,241.9L1156.3,244.2L1155.4,244.7L1156.0,246.0L1157.8,248.1L1158.0,249.6L1158.0,250.8L1159.0,253.2L1157.6,255.6L1156.3,258.3L1156.1,256.4L1156.9,254.4L1156.0,252.8L1156.2,250.0L1155.1,248.6L1154.3,245.5L1153.8,242.2L1152.7,240.0L1151.0,241.3L1148.0,243.2L1146.5,242.9L1144.9,242.3L1145.8,239.1L1145.2,236.6L1143.2,233.6L1143.5,232.6L1142.0,232.3L1140.1,230.2L1139.9,228.0L1140.8,228.5L1140.9,226.6L1142.2,225.9L1141.9,224.8L1142.5,223.9L1142.6,221.2L1144.7,221.8L1145.8,219.6L1146.0,218.4L1147.4,216.2L1147.3,214.7L1150.7,212.9L1152.6,213.3L1152.4,211.7L1153.3,211.2L1153.1,210.2L1154.6,210.0L1155.5,211.6L1156.7,212.2L1156.7,214.2L1156.6,216.4L1154.1,218.6L1153.8,221.7L1156.6,221.3L1157.2,223.7L1158.9,224.2L1158.1,226.4L1160.1,227.4L1161.2,227.8L1163.1,227.1L1163.2,228.1L1161.0,229.8L1160.4,230.8Z"/>
<path fill="#9bcf9b" d="M1166.9,252.4L1164.6,251.2L1162.3,251.3L1162.7,249.2L1160.4,249.2L1160.2,252.1L1158.8,255.9L1157.9,258.3L1158.1,260.2L1159.8,260.2L1160.9,262.6L1161.3,264.9L1162.8,266.4L1164.4,266.7L1165.7,268.1L1164.9,269.2L1163.1,269.5L1163.0,268.1L1160.8,267.0L1160.4,267.4L1159.3,266.4L1158.9,265.1L1157.5,263.6L1156.2,262.4L1155.8,264.0L1155.3,262.5L1155.6,260.9L1156.3,258.3L1157.6,255.6L1159.0,253.2L1158.0,250.8L1158.0,249.6L1157.8,248.1L1156.0,246.0L1155.4,244.7L1156.3,244.2L1157.2,241.9L1156.2,240.2L1154.5,238.3L1153.2,236.0L1154.3,235.5L1155.5,232.7L1157.4,232.6L1158.9,231.4L1160.4,230.8L1161.6,231.6L1161.7,233.2L1163.5,233.3L1162.8,236.1L1162.9,238.5L1165.7,236.9L1166.4,237.4L1168.0,237.3L1168.5,236.4L1170.5,236.5L1172.5,238.7L1172.7,241.3L1174.8,243.5L1174.7,245.8L1173.8,247.0L1171.4,246.6L1168.0,247.1L1166.3,249.3L1166.9,252.4Z"/>
<path fill="#dff0de" d="M1173.8,247.0L1174.7,245.8L1174.8,243.5L1172.7,241.3L1172.5,238.7L1170.5,236.5L1168.5,236.4L1168.0,237.3L1166.4,237.4L1165.7,236.9L1162.9,238.5L1162.8,236.1L1163.5,233.3L1161.7,233.2L1161.6,231.6L1160.4,230.8L1161.0,229.8L1163.2,228.1L1163.5,228.8L1164.8,228.8L1164.4,225.8L1165.8,225.5L1167.3,227.5L1168.5,229.9L1171.8,229.9L1172.8,232.2L1171.1,232.9L1170.4,233.8L1173.5,235.4L1175.7,238.5L1177.3,240.8L1179.3,242.7L1180.0,244.5L1179.5,247.1L1177.2,246.2L1176.0,248.0L1173.8,247.0Z"/>
<path fill="#9bcf9b" d="M1181.2,227.9L1177.8,230.1L1175.5,232.6L1175.0,234.4L1177.0,237.2L1179.4,240.6L1181.8,242.2L1183.4,244.3L1184.6,249.2L1184.3,253.8L1182.1,255.5L1179.1,257.2L1176.9,259.4L1173.7,261.8L1172.7,260.2L1173.4,258.4L1171.5,256.9L1173.8,255.8L1176.5,255.6L1175.4,254.0L1179.8,252.0L1180.1,248.9L1179.5,247.1L1180.0,244.5L1179.3,242.7L1177.3,240.8L1175.7,238.5L1173.5,235.4L1170.4,233.8L1171.1,232.9L1172.8,232.2L1171.8,229.9L1168.5,229.9L1167.3,227.5L1165.8,225.5L1167.2,224.8L1169.3,224.8L1171.9,224.5L1174.1,223.1L1175.4,224.1L1177.8,224.6L1177.4,226.1L1178.6,227.2Z"/>
<path fill="#dff0de" d="M1169.3,256.5L1168.2,255.1L1166.9,252.4L1166.3,249.3L1168.0,247.1L1171.4,246.6L1173.8,247.0L1176.0,248.0L1177.2,246.2L1179.5,247.1L1180.1,248.9L1179.8,252.0L1175.4,254.0L1176.5,255.6L1173.8,255.8L1171.5,256.9Z"/>
<path fill="#5aab5c" d="M1163.0,268.1L1163.1,269.5L1164.9,269.2L1165.7,268.1L1166.3,268.3L1167.9,269.9L1169.0,271.6L1169.1,273.4L1168.9,274.6L1169.1,275.5L1169.3,277.1L1170.2,277.8L1171.3,280.1L1171.2,281.0L1169.4,281.2L1166.9,279.2L1163.8,277.2L1163.5,275.8L1162.0,274.1L1161.6,271.9L1160.6,270.5L1160.9,268.6L1160.4,267.4L1160.8,267.0ZM1209.0,272.6L1207.0,273.5L1204.8,273.1L1201.8,273.1L1200.8,276.1L1199.8,277.0L1198.5,280.6L1196.4,281.2L1193.9,280.5L1192.6,280.7L1191.1,282.0L1189.4,281.8L1187.7,282.4L1185.9,280.9L1185.5,279.1L1187.4,280.0L1189.4,279.5L1190.0,277.3L1191.1,276.8L1194.2,276.3L1196.1,274.2L1197.4,272.5L1198.6,273.9L1199.1,273.0L1200.4,273.1L1200.6,271.4L1200.7,270.1L1202.7,268.3L1204.0,266.2L1205.1,266.2L1206.4,267.6L1206.5,268.7L1208.3,269.4L1210.4,270.2L1210.3,271.2L1208.5,271.4Z"/>
<path fill="#c8e4c9" d="M1197.4,272.5L1198.4,271.5L1200.7,270.1L1200.6,271.4L1200.4,273.1L1199.1,273.0L1198.6,273.9Z"/>
<path fill="#9bcf9b" d="M1175.4,299.8L1172.5,299.8L1170.3,297.6L1166.9,295.5L1165.8,293.9L1163.8,291.7L1162.5,289.8L1160.5,286.1L1158.2,283.9L1157.4,281.7L1156.4,279.6L1154.1,278.0L1152.7,275.7L1150.7,274.2L1148.0,271.4L1147.8,270.0L1149.5,270.1L1153.5,270.6L1155.8,273.2L1157.9,275.0L1159.3,276.1L1161.8,278.9L1164.5,278.9L1166.7,280.7L1168.2,282.9L1170.2,284.1L1169.1,286.3L1170.6,287.2L1171.6,287.2L1172.0,289.1L1173.0,290.5L1174.9,290.8L1176.2,292.4L1175.5,295.7ZM1182.7,302.2L1187.8,302.5L1188.4,301.4L1193.2,302.6L1194.2,304.3L1198.1,304.8L1201.3,306.4L1198.3,307.4L1195.4,306.3L1193.1,306.4L1190.3,306.2L1187.9,305.7L1184.9,304.7L1182.9,304.4L1181.8,304.8L1177.0,303.7L1176.6,302.6L1174.2,302.4L1176.0,299.9L1179.2,300.0L1181.3,301.1L1182.4,301.2ZM1207.0,273.5L1205.5,275.9L1207.5,278.4L1207.0,279.6L1210.0,282.0L1206.9,282.4L1206.0,284.1L1206.1,286.5L1203.6,288.3L1203.5,290.9L1202.5,294.9L1202.1,294.0L1199.1,295.2L1198.1,293.6L1196.2,293.4L1194.9,292.6L1191.8,293.5L1190.8,292.2L1189.1,292.4L1186.9,292.1L1186.5,288.6L1185.2,287.8L1184.0,285.6L1183.6,283.3L1183.9,280.9L1185.5,279.1L1185.9,280.9L1187.7,282.4L1189.4,281.8L1191.1,282.0L1192.6,280.7L1193.9,280.5L1196.4,281.2L1198.5,280.6L1199.8,277.0L1200.8,276.1L1201.8,273.1L1204.8,273.1ZM1226.3,280.7L1224.3,283.3L1222.3,283.8L1219.7,283.3L1215.4,283.4L1213.1,283.8L1212.7,285.8L1215.1,288.1L1216.5,286.9L1221.4,286.0L1221.2,287.2L1220.0,286.8L1218.9,288.4L1216.6,289.4L1219.0,292.8L1218.6,293.7L1220.9,296.7L1220.9,298.4L1219.5,299.2L1218.5,298.3L1219.7,296.1L1217.2,297.1L1216.5,296.4L1216.9,295.4L1215.0,293.8L1215.1,291.3L1213.4,292.1L1213.6,295.2L1213.7,298.9L1212.1,299.3L1210.9,298.5L1211.7,296.1L1211.3,293.6L1210.2,293.6L1209.4,291.7L1210.4,290.0L1210.8,287.9L1212.2,284.0L1212.7,282.9L1214.9,281.0L1217.0,281.7L1220.3,282.1L1223.3,282.0L1225.9,280.1ZM1267.7,291.2L1267.7,308.3L1265.4,306.2L1262.8,305.7L1262.1,306.4L1258.8,306.5L1259.9,304.3L1261.6,303.6L1260.9,300.7L1259.6,298.5L1254.6,296.3L1252.4,296.1L1248.4,293.7L1247.7,294.9L1246.7,295.2L1246.1,294.2L1246.1,293.1L1244.1,291.8L1246.9,290.9L1248.8,290.9L1248.5,290.2L1244.7,290.2L1243.7,288.7L1241.3,288.2L1240.2,286.9L1243.7,286.2L1245.1,285.4L1249.3,286.4L1249.7,287.4L1250.4,291.7L1253.2,293.2L1255.3,290.5L1258.4,288.9L1260.7,288.9L1262.9,289.8L1264.9,290.7ZM1222.0,311.6L1221.7,311.3L1221.9,310.4L1223.0,308.8L1225.6,307.7L1226.0,309.0L1224.3,311.0ZM1216.1,306.8L1217.9,306.6L1220.2,305.6L1219.8,307.1L1215.9,307.8L1212.4,307.5L1212.4,306.5L1214.5,306.0ZM1207.1,305.7L1208.0,306.3L1209.7,306.1L1210.3,307.3L1207.3,307.8L1205.5,308.1L1204.0,308.1L1204.9,306.6L1206.4,306.6ZM1213.7,310.6L1214.6,310.6L1214.5,311.3L1213.4,311.3L1209.9,309.5L1212.3,309.0ZM1235.4,281.4L1235.3,283.7L1233.9,283.5L1233.5,285.1L1234.6,286.4L1233.9,286.8L1232.8,285.1L1232.0,281.7L1232.5,279.7L1233.4,278.7L1233.6,280.1L1235.1,280.4ZM1240.1,292.5L1241.0,294.5L1238.8,293.5L1236.6,293.2L1235.1,293.4L1233.3,293.3L1234.0,291.9L1237.2,291.7ZM1230.6,294.3L1228.8,293.9L1228.3,292.7L1231.0,292.6L1231.6,293.5ZM1199.5,305.7L1201.3,306.4L1200.0,307.5L1198.4,306.4ZM1202.1,306.4L1203.9,306.4L1203.4,307.8L1202.1,307.6ZM1250.6,298.7L1251.3,299.5L1251.2,300.7L1249.9,302.5L1249.6,300.5L1250.1,299.6ZM1241.5,304.1L1243.3,303.3L1243.0,304.9L1241.7,305.4ZM1175.9,288.6L1177.7,291.0L1176.4,292.3L1174.3,289.6ZM1180.1,291.2L1181.6,291.5L1181.1,292.8L1180.1,292.3ZM1153.6,280.7L1154.6,282.0L1154.3,282.8L1152.8,281.3ZM1156.4,287.0L1158.0,288.9L1157.5,289.1L1156.4,287.8Z"/>
<path fill="#dff0de" d="M1225.6,307.7L1228.2,306.5L1230.0,306.4L1230.9,306.1L1231.9,306.4L1230.9,307.2L1228.2,308.3L1226.0,309.0Z"/>
<path fill="#c8e4c9" d="M1229.3,262.3L1229.6,264.1L1229.8,265.5L1228.9,267.9L1227.9,265.3L1226.7,266.6L1227.5,268.5L1226.8,269.8L1223.7,268.2L1222.9,266.3L1223.7,265.1L1222.1,263.9L1221.3,264.9L1220.0,264.8L1218.1,266.3L1217.6,265.5L1218.7,263.3L1220.3,262.6L1221.8,261.6L1222.7,262.8L1224.7,262.1L1225.1,260.9L1227.0,260.8L1226.8,258.8ZM1216.1,235.9L1217.7,236.6L1218.5,235.9L1218.7,236.6L1218.3,237.7L1219.2,239.6L1218.5,241.7L1217.0,242.6L1216.6,244.7L1217.1,246.8L1218.5,247.1L1219.7,246.8L1223.0,248.2L1222.7,249.7L1223.6,250.3L1223.3,251.5L1221.3,250.2L1220.3,248.8L1219.6,249.8L1217.9,248.2L1215.6,248.6L1214.3,248.0L1214.4,247.0L1215.2,246.3L1214.4,245.7L1214.1,246.6L1212.8,245.1L1212.4,244.0L1212.3,241.5L1213.4,242.3L1213.6,238.2L1214.5,235.8ZM1227.0,252.5L1227.8,255.4L1225.7,254.7L1225.8,255.6L1226.5,257.2L1225.2,257.8L1225.1,256.0L1224.3,255.8L1223.9,254.2L1225.4,254.4L1225.4,253.5L1223.8,251.4L1226.3,251.5ZM1211.8,256.7L1210.1,258.2L1208.7,259.9L1205.2,262.4L1206.5,260.6L1208.4,259.0L1209.9,257.2L1211.3,254.6ZM1218.0,254.4L1217.5,253.2L1219.1,254.0L1220.8,254.0L1220.7,255.1L1219.5,256.2L1217.8,257.0ZM1220.5,260.7L1218.8,258.9L1219.4,258.2L1220.1,257.5L1220.3,255.9L1221.8,255.7L1221.4,257.5L1223.3,254.9L1223.0,257.4L1222.1,258.3L1221.3,259.9ZM1216.6,250.1L1215.9,252.4L1214.8,251.1L1213.4,249.1L1215.7,249.2ZM1224.1,258.2L1222.8,259.1L1223.1,257.9Z"/>
<path fill="#f4f8f4" d="M1267.7,291.2L1272.3,293.0L1277.1,294.5L1278.9,295.9L1280.4,297.2L1280.8,298.8L1285.2,300.4L1285.8,301.7L1283.4,302.0L1283.9,303.8L1286.3,305.5L1288.0,308.3L1289.5,308.2L1289.4,309.4L1291.4,309.8L1290.6,310.3L1293.4,311.4L1293.1,312.2L1291.4,312.3L1290.7,311.7L1288.5,311.4L1285.8,311.0L1283.8,309.3L1282.3,307.9L1281.0,305.6L1277.5,304.4L1275.3,305.2L1273.7,306.0L1274.0,308.0L1272.0,308.9L1270.5,308.4L1267.8,308.3L1267.7,308.3ZM1298.2,294.0L1299.2,294.8L1299.6,296.2L1298.7,296.9L1298.2,295.4L1297.6,294.3L1296.4,293.5L1294.9,292.4L1293.1,291.6L1293.8,291.0L1295.2,291.7L1296.1,292.3ZM1294.7,299.7L1293.3,300.4L1291.9,301.0L1290.6,301.0L1288.4,300.2L1286.9,299.5L1287.1,298.7L1289.5,299.0L1290.9,298.9L1291.7,297.5L1291.9,298.9L1293.4,298.7L1294.2,297.8L1295.6,296.9L1295.4,295.3L1296.9,295.3L1297.5,295.7L1297.4,297.2L1296.5,298.8L1295.2,299.0ZM1303.8,298.4L1304.6,299.0L1305.9,300.7L1307.1,301.6L1306.7,302.3L1306.0,302.6L1304.9,301.6L1303.7,299.9L1303.2,297.9Z"/>
<path fill="#5aab5c" d="M994.6,175.9L998.4,176.9L1001.4,176.6L1003.7,176.8L1006.7,175.4L1009.6,175.3L1012.1,176.6L1012.5,177.5L1012.3,178.8L1014.2,179.4L1015.2,180.2L1013.5,180.9L1014.3,184.0L1013.8,184.8L1015.2,186.9L1013.9,187.3L1013.0,186.6L1010.0,186.3L1008.8,186.7L1005.9,187.1L1004.4,187.1L1001.4,188.0L999.3,188.1L997.9,187.6L995.0,188.3L994.1,187.8L994.0,189.3L993.3,189.8L992.6,190.4L991.6,189.2L992.6,188.2L991.0,188.4L988.8,187.8L987.0,189.4L983.0,189.6L980.9,188.3L978.1,188.2L977.5,189.3L975.7,189.6L973.1,188.2L970.2,188.2L968.7,185.6L966.8,184.1L968.0,182.1L966.4,180.9L969.3,178.3L973.3,178.2L974.4,176.2L979.5,176.6L982.6,174.9L985.7,174.1L990.0,174.1ZM969.1,177.6L966.9,179.0L966.0,177.8L966.1,177.3L966.7,177.0L967.5,175.3L966.3,174.6L968.9,173.8L971.2,174.2L971.5,175.2L973.8,176.0L973.3,176.7L970.2,176.8Z"/>
<path fill="#c8e4c9" d="M1006.7,175.4L1007.1,174.3L1006.5,172.5L1005.0,171.5L1003.5,171.2L1002.6,170.4L1002.9,170.1L1005.1,170.6L1009.0,171.0L1012.5,172.3L1013.0,172.7L1014.6,172.3L1017.0,172.9L1017.8,174.0L1019.5,174.6L1018.8,174.9L1020.1,176.3L1019.7,176.7L1018.3,176.5L1016.4,175.7L1015.7,176.2L1012.1,176.6L1009.6,175.3Z"/>
<path fill="#c8e4c9" d="M1012.1,176.6L1015.7,176.2L1016.3,176.8L1017.3,177.3L1016.7,178.0L1018.1,178.9L1017.4,179.7L1018.5,180.4L1019.7,180.9L1019.8,182.7L1018.8,182.7L1017.7,181.2L1017.7,180.8L1016.6,180.8L1015.8,180.1L1015.2,180.2L1014.2,179.4L1012.3,178.8L1012.5,177.5Z"/>
<path fill="#c8e4c9" d="M1015.2,180.2L1015.8,180.1L1016.6,180.8L1017.7,180.8L1017.7,181.2L1018.8,182.7L1017.0,182.4L1015.7,181.2ZM1022.0,176.2L1023.2,176.4L1023.6,175.7L1025.2,174.7L1026.6,176.1L1027.9,177.9L1029.1,178.0L1029.9,178.8L1027.8,179.0L1027.3,181.0L1026.9,181.9L1025.9,182.5L1026.0,183.8L1025.3,184.0L1023.7,182.6L1024.6,181.3L1023.8,180.5L1022.9,180.7L1019.8,182.7L1019.7,180.9L1018.5,180.4L1017.4,179.7L1018.1,178.9L1016.7,178.0L1017.3,177.3L1016.3,176.8L1015.7,176.2L1016.4,175.7L1018.3,176.5L1019.7,176.7L1020.1,176.3L1018.8,174.9L1019.5,174.6L1020.2,174.6Z"/>
<path fill="#dff0de" d="M999.5,196.8L994.4,199.6L991.4,198.6L991.4,198.5L991.8,198.1L991.7,197.1L992.4,195.7L993.8,194.7L993.4,193.6L992.2,193.5L991.9,191.5L992.6,190.4L993.3,189.8L994.0,189.3L994.1,187.8L995.0,188.3L997.9,187.6L999.3,188.1L1001.4,188.0L1004.4,187.1L1005.9,187.1L1008.8,186.7L1007.5,188.3L1006.1,189.0L1006.3,190.9L1005.3,194.1Z"/>
<path fill="#9bcf9b" d="M991.7,197.1L991.0,197.1L990.8,197.6L989.9,197.6L990.8,195.4L992.1,193.6L992.2,193.5L993.4,193.6L993.8,194.7L992.4,195.7Z"/>
<path fill="#5aab5c" d="M991.4,198.6L991.0,199.4L990.0,199.0L989.5,200.8L990.2,201.1L989.5,201.4L989.4,202.1L990.6,201.8L990.7,202.8L989.4,207.0L987.6,202.5L988.4,201.6L988.2,201.5L988.9,200.2L989.5,198.3L989.8,197.6L989.9,197.6L990.8,197.6L991.0,197.1L991.7,197.1L991.8,198.1L991.4,198.5Z"/>
<path fill="#dff0de" d="M991.0,199.4L991.0,201.0L990.6,201.8L989.4,202.1L989.5,201.4L990.2,201.1L989.5,200.8L990.0,199.0Z"/>
<path fill="#c8e4c9" d="M991.0,199.4L991.4,198.6L994.4,199.6L999.5,196.8L1000.6,200.0L1000.1,200.4L994.8,201.7L997.4,204.3L996.6,204.8L996.1,205.7L994.1,206.0L993.5,207.0L992.4,207.8L989.5,207.4L989.4,207.0L990.7,202.8L990.6,201.8L991.0,201.0Z"/>
<path fill="#c8e4c9" d="M1016.9,190.0L1018.6,190.8L1018.8,192.3L1017.5,193.2L1016.9,195.3L1018.7,197.8L1021.9,199.2L1023.3,201.2L1022.9,203.1L1023.7,203.1L1023.7,204.5L1025.2,205.9L1023.6,205.7L1021.8,205.5L1019.9,208.0L1015.0,207.8L1007.6,202.6L1003.7,200.7L1000.6,200.0L999.5,196.8L1005.3,194.1L1006.3,190.9L1006.1,189.0L1007.5,188.3L1008.8,186.7L1010.0,186.3L1013.0,186.6L1013.9,187.3L1015.2,186.9L1016.9,190.0Z"/>
<path fill="#9bcf9b" d="M1023.6,205.7L1024.1,206.9L1023.9,207.5L1024.8,209.5L1022.9,209.5L1022.3,208.3L1019.9,208.0L1021.8,205.5Z"/>
<path fill="#5aab5c" d="M1039.2,186.8L1041.5,186.3L1043.4,184.8L1045.1,184.8L1046.3,184.4L1048.2,184.6L1051.1,185.9L1053.1,186.2L1056.2,188.5L1058.1,188.7L1058.3,190.9L1057.3,194.1L1056.6,196.0L1057.7,196.4L1056.6,197.9L1057.4,200.0L1057.6,201.6L1059.6,202.1L1059.8,203.7L1057.4,206.1L1058.8,207.5L1059.8,209.1L1062.3,210.2L1062.4,212.6L1063.6,213.0L1063.9,214.2L1060.1,215.5L1059.1,218.6L1054.2,217.8L1051.3,217.2L1048.3,216.9L1047.2,213.6L1045.9,213.2L1043.9,213.7L1041.3,214.9L1038.1,214.1L1035.4,212.0L1032.9,211.3L1031.2,208.8L1029.2,205.3L1027.8,205.7L1026.1,204.8L1025.2,205.9L1023.7,204.5L1023.7,203.1L1022.9,203.1L1023.3,201.2L1021.9,199.2L1018.7,197.8L1016.9,195.3L1017.5,193.2L1018.8,192.3L1018.6,190.8L1016.9,190.0L1015.2,186.9L1013.8,184.8L1014.3,184.0L1013.5,180.9L1015.2,180.2L1015.7,181.2L1017.0,182.4L1018.8,182.7L1019.8,182.7L1022.9,180.7L1023.8,180.5L1024.6,181.3L1023.7,182.6L1025.3,184.0L1026.0,183.8L1026.8,185.8L1029.3,186.3L1031.1,187.7L1034.9,188.1L1039.0,187.4Z"/>
<path fill="#5aab5c" d="M1010.0,241.5L1009.6,240.4L1008.8,239.6L1008.6,238.6L1007.3,237.6L1005.9,235.4L1005.1,233.3L1003.3,231.5L1002.2,231.0L1000.4,228.5L1000.1,226.7L1000.2,225.2L998.7,222.2L997.5,221.2L996.1,220.7L995.2,219.2L995.4,218.6L994.6,217.2L993.9,216.6L992.8,214.7L991.2,212.6L989.9,210.8L988.6,210.8L989.0,209.3L989.1,208.4L989.5,207.4L992.4,207.8L993.5,207.0L994.1,206.0L996.1,205.7L996.6,204.8L997.4,204.3L994.8,201.7L1000.1,200.4L1000.6,200.0L1003.7,200.7L1007.6,202.6L1015.0,207.8L1019.9,208.0L1022.3,208.3L1022.9,209.5L1024.8,209.5L1025.8,211.7L1027.1,212.3L1027.5,213.3L1029.3,214.4L1029.5,215.4L1029.2,216.3L1029.5,217.2L1030.3,217.9L1030.7,218.8L1031.0,219.5L1031.8,220.0L1032.6,219.8L1033.1,220.8L1033.2,221.4L1034.2,224.0L1042.1,225.4L1042.6,224.8L1043.8,226.7L1042.0,231.9L1034.2,234.5L1026.6,235.5L1024.1,236.7L1022.3,239.5L1021.0,239.9L1020.4,239.1L1019.4,239.2L1016.8,238.9L1016.4,238.7L1013.3,238.7L1012.6,239.0L1011.5,238.3L1010.9,239.6L1011.1,240.7Z"/>
<path fill="#c8e4c9" d="M1037.1,240.7L1035.2,241.4L1034.7,242.6L1034.6,243.5L1032.0,244.6L1027.8,245.8L1025.5,247.7L1024.3,247.8L1023.5,247.6L1022.0,248.7L1020.3,249.2L1018.1,249.4L1017.5,249.5L1016.9,250.2L1016.2,250.4L1015.8,251.1L1014.5,251.0L1013.6,251.4L1011.8,251.2L1011.1,249.7L1011.2,248.3L1010.8,247.5L1010.3,245.6L1009.5,244.5L1010.1,244.4L1009.8,243.2L1010.1,242.7L1010.0,241.5L1011.1,240.7L1010.9,239.6L1011.5,238.3L1012.6,239.0L1013.3,238.7L1016.4,238.7L1016.8,238.9L1019.4,239.2L1020.4,239.1L1021.0,239.9L1022.3,239.5L1024.1,236.7L1026.6,235.5L1034.2,234.5L1036.2,238.9Z"/>
<path fill="#c8e4c9" d="M1052.2,229.0L1051.2,230.8L1050.0,230.7L1049.5,231.3L1049.0,232.6L1049.4,234.4L1049.1,234.7L1047.9,234.7L1046.3,235.7L1046.0,236.9L1045.4,237.5L1043.8,237.5L1042.7,238.1L1042.7,239.2L1041.5,239.9L1040.0,239.7L1038.3,240.6L1037.1,240.7L1036.2,238.9L1034.2,234.5L1042.0,231.9L1043.8,226.7L1042.6,224.8L1042.6,223.8L1043.4,222.7L1043.4,221.6L1044.6,221.1L1044.1,220.7L1044.4,219.0L1045.7,219.0L1046.9,220.8L1048.3,221.7L1050.3,222.1L1051.8,222.6L1053.0,224.1L1053.7,224.9L1054.7,225.3L1054.7,225.9L1053.7,227.4L1053.3,228.2ZM1045.3,216.9L1044.8,216.0L1045.6,215.1L1045.9,215.4L1045.7,216.4Z"/>
<path fill="#9bcf9b" d="M1033.1,220.8L1033.5,220.7L1033.6,221.4L1035.7,221.0L1037.8,221.0L1039.4,221.1L1041.2,219.3L1043.2,217.6L1044.8,216.0L1045.3,216.9L1045.7,219.0L1044.4,219.0L1044.1,220.7L1044.6,221.1L1043.4,221.6L1043.4,222.7L1042.6,223.8L1042.6,224.8L1042.1,225.4L1034.2,224.0L1033.2,221.4Z"/>
<path fill="#9bcf9b" d="M1031.0,219.5L1030.9,217.5L1031.6,216.1L1032.3,215.9L1033.1,216.7L1033.1,218.2L1032.6,219.8L1031.8,220.0Z"/>
<path fill="#266a26" d="M1274.4,320.5L1275.4,322.6L1277.0,321.6L1277.9,322.7L1279.2,323.7L1278.9,324.9L1279.5,327.1L1279.9,328.4L1280.5,328.8L1281.2,331.0L1281.0,332.4L1281.8,334.2L1284.7,335.5L1286.5,336.8L1288.3,337.9L1288.0,338.5L1289.5,340.2L1290.5,343.0L1291.5,342.4L1292.6,343.6L1293.2,343.2L1293.7,346.0L1295.5,347.6L1296.8,348.6L1298.8,350.7L1299.6,352.8L1299.6,354.3L1299.4,355.9L1300.7,358.2L1300.5,360.5L1300.1,361.7L1299.4,364.0L1299.4,365.5L1298.9,367.4L1297.7,369.8L1295.8,371.1L1294.8,373.1L1294.0,374.4L1293.2,376.7L1292.2,378.0L1291.5,380.0L1291.2,381.8L1291.3,382.6L1289.8,383.5L1286.9,383.6L1284.4,384.7L1283.2,385.7L1281.7,386.8L1279.5,385.7L1277.9,385.2L1278.3,383.8L1276.9,384.3L1274.6,386.2L1272.3,385.5L1270.8,385.1L1269.3,384.9L1266.8,384.2L1265.1,382.5L1264.6,380.5L1264.0,378.2L1262.7,378.2L1260.1,377.8L1261.0,376.6L1260.4,374.6L1259.1,376.4L1256.8,376.9L1258.1,375.5L1258.5,374.0L1259.5,372.7L1259.3,370.7L1257.2,373.0L1255.6,373.9L1254.6,376.0L1252.5,374.9L1252.6,373.5L1250.9,371.6L1249.6,370.6L1250.0,370.0L1246.7,368.4L1244.8,368.3L1242.3,367.1L1237.6,367.3L1234.2,368.2L1231.2,369.1L1228.7,368.9L1226.0,370.3L1223.7,370.9L1223.2,372.3L1222.2,373.3L1220.0,373.4L1218.3,373.6L1216.0,373.1L1214.1,373.4L1212.3,373.6L1210.8,375.0L1210.0,374.8L1208.7,375.6L1207.4,376.4L1205.5,376.3L1203.8,376.3L1200.9,374.6L1199.6,374.1L1199.6,372.6L1200.9,372.3L1201.3,371.7L1201.3,370.7L1201.6,368.9L1201.3,367.3L1199.9,364.7L1199.5,363.2L1199.6,361.7L1198.5,360.0L1198.5,359.2L1197.3,358.2L1197.0,356.1L1195.5,354.0L1195.1,352.9L1196.3,354.1L1195.4,351.6L1196.7,352.4L1197.5,353.4L1197.4,352.1L1196.1,350.0L1195.9,349.2L1195.3,348.4L1195.5,346.9L1196.1,346.2L1196.4,344.9L1196.2,343.4L1197.2,341.5L1197.5,343.5L1198.6,341.7L1200.7,340.8L1202.0,339.7L1204.0,338.7L1205.2,338.5L1205.9,338.8L1208.0,337.9L1209.6,337.6L1209.9,337.0L1210.6,336.7L1212.1,336.8L1214.9,336.0L1216.3,334.9L1217.0,333.5L1218.5,332.2L1218.6,331.1L1218.7,329.7L1220.5,327.5L1221.6,329.7L1222.7,329.2L1221.8,328.0L1222.6,326.7L1223.8,327.2L1224.1,325.3L1225.5,324.0L1226.2,322.9L1227.5,322.5L1227.5,321.7L1228.7,322.1L1228.7,321.4L1229.9,321.0L1231.2,320.7L1233.1,321.9L1234.5,323.4L1236.2,323.4L1237.8,323.7L1237.3,322.2L1238.6,320.1L1239.7,319.5L1239.3,318.8L1240.5,317.3L1242.0,316.4L1243.4,316.7L1245.6,316.2L1245.6,314.8L1243.6,314.0L1245.0,313.6L1246.8,314.3L1248.2,315.3L1250.4,316.0L1251.1,315.7L1252.7,316.5L1254.3,315.8L1255.3,316.0L1255.9,315.5L1257.1,316.8L1256.4,318.2L1255.4,319.3L1254.5,319.4L1254.8,320.4L1254.0,321.7L1253.1,323.0L1253.3,323.8L1255.4,325.2L1257.4,326.0L1258.7,327.0L1260.6,328.5L1261.4,328.5L1262.7,329.2L1263.1,330.0L1265.7,330.9L1267.4,330.0L1267.9,328.6L1268.4,327.4L1268.8,326.0L1269.5,323.9L1269.2,322.6L1269.4,321.8L1269.1,320.3L1269.4,318.4L1269.9,317.8L1269.5,317.0L1270.1,315.6L1270.6,314.1L1270.7,313.4L1271.7,312.4L1272.4,313.7L1272.6,315.3L1273.3,315.7L1273.4,316.8L1274.3,318.1L1274.5,319.6ZM1279.2,391.4L1281.8,392.4L1283.2,392.0L1285.3,391.5L1286.8,391.7L1287.0,394.8L1286.1,395.7L1285.8,397.8L1284.9,397.1L1283.1,398.9L1282.6,398.8L1281.0,398.7L1279.3,396.4L1279.0,394.7L1277.5,392.4L1277.5,391.2ZM1256.4,377.8L1258.8,377.8L1260.1,378.6L1257.2,378.9ZM1239.9,314.3L1242.3,314.1L1241.5,315.4L1239.9,315.4Z"/>
<path fill="#5aab5c" d="M1351.7,391.8L1352.3,392.8L1354.2,391.8L1355.0,392.9L1355.0,394.0L1354.0,395.2L1352.2,397.2L1350.9,398.2L1351.9,399.5L1349.9,399.5L1347.6,400.5L1346.9,402.2L1345.4,404.9L1343.4,406.0L1342.0,406.8L1339.6,406.7L1337.9,405.9L1335.1,405.7L1334.6,404.7L1336.1,402.8L1339.3,400.2L1341.0,399.7L1342.9,398.7L1345.2,397.3L1346.8,395.9L1347.9,394.0L1348.9,393.3L1349.3,391.9L1351.1,390.6ZM1355.9,379.3L1357.8,382.0L1357.9,380.3L1359.0,381.0L1359.4,383.0L1361.5,383.8L1363.3,384.0L1364.8,383.0L1366.2,383.3L1365.5,385.6L1364.7,387.2L1362.7,387.1L1362.0,387.9L1362.2,389.0L1361.9,389.5L1360.9,390.9L1359.6,392.7L1357.5,393.8L1357.1,393.1L1356.0,392.7L1357.5,390.6L1356.7,389.1L1353.8,388.1L1353.9,387.1L1355.8,386.2L1356.2,384.2L1356.1,382.5L1355.1,380.7L1355.1,380.3L1353.9,379.2L1351.8,376.9L1350.7,375.0L1351.7,374.8L1353.1,376.3L1355.2,376.9Z"/>
<path fill="#f4f8f4" d="M1332.7,339.7L1334.9,341.3L1336.2,342.5L1335.2,343.2L1333.8,342.5L1331.9,341.3L1330.2,339.9L1328.5,338.0L1328.1,337.2L1329.3,337.2L1330.7,338.1L1331.9,339.0Z"/>
<path fill="#f4f8f4" d="M1323.1,311.9L1323.9,312.8L1322.0,312.8L1321.0,311.2L1322.6,311.8ZM1319.8,310.3L1317.2,310.1L1316.6,309.7L1316.8,308.6L1318.5,309.1L1319.4,309.6ZM1322.0,309.6L1321.6,310.1L1319.6,307.8L1319.1,306.2L1320.0,306.2L1320.9,308.3ZM1317.2,306.3L1317.4,306.8L1315.3,305.7L1313.9,304.7L1312.9,303.9L1313.3,303.6L1314.5,304.2L1316.6,305.4ZM1311.1,303.7L1310.6,303.8L1309.4,303.2L1308.3,302.2L1308.5,301.7L1310.1,302.8Z"/>
<path fill="#f4f8f4" d="M1338.1,327.6L1337.3,328.0L1336.4,326.8L1336.5,326.1ZM1336.2,323.6L1336.6,325.7L1335.9,325.4L1335.4,325.5L1335.0,324.8L1335.0,322.8Z"/>
<path fill="#dff0de" d="M1365.8,329.9L1366.7,330.7L1366.2,332.0L1364.6,332.4L1363.2,332.1L1362.9,330.9L1363.9,330.0L1365.1,330.3ZM1368.4,328.5L1366.7,329.0L1366.4,328.1L1367.7,327.5L1368.5,327.4L1370.0,326.6L1370.0,327.9Z"/>
<path fill="#c8e4c9" d="M529.2,307.8L530.6,306.7L532.1,307.8L530.6,308.8ZM444.2,320.1L445.6,319.0L447.0,320.1L445.6,321.1ZM504.0,330.6L505.4,329.5L506.9,330.6L505.4,331.6ZM436.8,339.8L438.3,338.7L439.7,339.8L438.3,340.8ZM424.5,327.2L425.9,326.1L427.4,327.2L425.9,328.2ZM657.5,286.0L658.9,284.9L660.4,286.0L658.9,287.0ZM726.5,199.6L727.9,198.6L729.4,199.6L727.9,200.7ZM735.2,244.0L736.6,242.9L738.0,244.0L736.6,245.0ZM736.2,246.1L737.7,245.0L739.1,246.1L737.7,247.1ZM736.2,247.9L737.7,246.9L739.1,247.9L737.7,249.0ZM735.7,249.8L737.1,248.7L738.6,249.8L737.1,250.8ZM734.4,252.6L735.8,251.6L737.3,252.6L735.8,253.7ZM734.9,241.9L736.3,240.8L737.8,241.9L736.3,242.9ZM734.1,239.5L735.6,238.5L737.0,239.5L735.6,240.6ZM731.8,239.0L733.2,238.0L734.6,239.0L733.2,240.1ZM740.0,249.9L741.5,248.8L742.9,249.9L741.5,250.9ZM730.8,236.9L732.3,235.9L733.7,236.9L732.3,238.0ZM726.2,236.4L727.7,235.3L729.1,236.4L727.7,237.4ZM833.3,242.4L834.7,241.4L836.2,242.4L834.7,243.5ZM834.6,245.0L836.1,244.0L837.5,245.0L836.1,246.1ZM830.9,240.3L832.4,239.3L833.8,240.3L832.4,241.4ZM836.2,242.2L837.6,241.1L839.1,242.2L837.6,243.2ZM853.0,210.1L854.4,209.1L855.9,210.1L854.4,211.2ZM855.3,210.9L856.8,209.9L858.2,210.9L856.8,212.0ZM877.9,121.7L879.4,120.7L880.8,121.7L879.4,122.8ZM913.6,283.7L915.0,282.7L916.5,283.7L915.0,284.8ZM919.1,275.2L920.5,274.2L922.0,275.2L920.5,276.3ZM1041.9,296.6L1043.4,295.6L1044.8,296.6L1043.4,297.7ZM1010.0,315.1L1011.5,314.1L1012.9,315.1L1011.5,316.2ZM1012.8,316.4L1014.2,315.4L1015.7,316.4L1014.2,317.5ZM1047.3,337.5L1048.7,336.5L1050.2,337.5L1048.7,338.6ZM1042.0,339.8L1043.5,338.7L1044.9,339.8L1043.5,340.8ZM1249.3,264.9L1250.8,263.8L1252.2,264.9L1250.8,265.9ZM1276.1,249.1L1277.5,248.1L1279.0,249.1L1277.5,250.2ZM1311.4,266.3L1312.8,265.2L1314.3,266.3L1312.8,267.3ZM1324.0,269.7L1325.4,268.7L1326.9,269.7L1325.4,270.8ZM1350.2,280.7L1351.7,279.7L1353.1,280.7L1351.7,281.8ZM1350.0,276.3L1351.4,275.2L1352.9,276.3L1351.4,277.3ZM1354.2,286.0L1355.6,284.9L1357.1,286.0L1355.6,287.0ZM1355.5,288.3L1356.9,287.3L1358.4,288.3L1356.9,289.4Z"/>
</g></svg>
<svg class="abs" style="left:398px;top:47px;" width="60" height="176" viewBox="398 47 60 176">
<g fill="#003c00"><rect x="414" y="49" width="27" height="81" rx="13.5"/><rect x="400" y="75.8" width="54" height="27.2" ry="13.6" rx="14.5"/>
<path d="M421,138 h13 l7,8 v65 l-7,8 h-13 l-7,-8 v-65 z"/></g>
<g fill="#fff"><path d="M427.5,54.8 L435.3,68.8 L419.7,68.8Z"/><path d="M427.5,123.8 L435.3,110.6 L419.7,110.6Z"/><path d="M406,89.5 L419.8,81.8 L419.8,97.3Z"/><path d="M448.3,89.5 L434.5,81.8 L434.5,97.3Z"/></g>
<g fill="#f1f1fb"><rect x="420" y="151.6" width="15.2" height="3.1"/><rect x="426" y="145.5" width="3.2" height="15.2"/><rect x="420" y="202.4" width="15.2" height="3.2"/></g>
<g fill="none" stroke="#aeaee8" stroke-width="0.9"><circle cx="427.5" cy="178.4" r="11.8" stroke-width="1.6"/><ellipse cx="427.5" cy="178.4" rx="6" ry="11.8"/><ellipse cx="427.5" cy="178.4" rx="11.8" ry="5"/><path d="M427.5,166.6 V190.2 M415.7,178.4 H439.3 M418,171.5 Q427.5,175.5 437,171.5 M418,185.3 Q427.5,181.3 437,185.3"/></g>
</svg>


<!-- legend -->
<div class="abs" style="left:388px;top:532px;width:225px;height:30px;background:linear-gradient(90deg,#ffffff 0%,#cfe4ce 20%,#9cc79b 40%,#6fab6f 58%,#2f8a2f 76%,#147814 86%,#004000 100%);"></div>
<div class="abs" style="left:388.4px;top:532.5px;font-size:17px;line-height:20px;color:#111;">0</div>
<div class="abs" style="left:523px;top:532.5px;font-size:17px;letter-spacing:0.55px;line-height:20px;color:#111;">76,713</div>

<div class="abs" style="left:373px;top:577px;width:1072px;height:1px;background:#d9d9d9;"></div>
<div class="abs h" style="left:403px;top:593px;">Report View by Selection</div>
<div class="abs lnk" style="left:1309px;top:593px;font-size:20.9px;line-height:24px;">Customize</div>

<div class="abs" style="left:373px;top:631px;width:1072px;height:1px;background:#cfcfcf;"></div>
<div class="abs" style="left:373px;top:632px;width:1065px;height:57px;background:#f5f5f5;"></div>
<div class="abs" style="left:373px;top:689px;width:1040px;height:515px;background:#fafafa;"></div>
<div class="abs" style="left:1413px;top:689px;width:25px;height:515px;background:#f1f1f1;"></div>
<div class="abs" style="left:1415px;top:923px;width:21px;height:259px;background:#c1c1c1;"></div>
<svg class="abs" style="left:1419px;top:697px;" width="13" height="8" viewBox="0 0 13 8"><path d="M1 7 L6.5 0.8 L12 7 Z" fill="#505050"/></svg>
<svg class="abs" style="left:1419px;top:1190px;" width="13" height="8" viewBox="0 0 13 8"><path d="M1 1 L6.5 7.2 L12 1 Z" fill="#a3a3a3"/></svg>
<div class="abs th" style="left:378px;top:637px;">Total:</div>
<div class="abs th" style="left:384px;top:661px;">19</div>
<div class="abs th" style="left:474.3px;top:647.5px;">Research Fields</div>
<div class="abs th" style="left:676px;top:637px;">Web of Science</div>
<div class="abs th" style="left:689px;top:661px;">Documents</div>
<div class="abs th" style="left:886.5px;top:647.5px;color:#4977b4;">Cites</div>
<svg class="abs" style="left:945px;top:655px;" width="13" height="9" viewBox="0 0 13 9"><path d="M0.3 0.8 L12.2 0.8 L6.25 8 Z" fill="#5d91d8"/></svg>
<div class="abs th" style="left:1034.5px;top:647.5px;">Cites/Paper</div>
<div class="abs th" style="left:1237.5px;top:647.5px;">Top Papers</div>
<div class="abs rl" style="top:696px;"></div>
<div class="abs rl" style="top:746px;"></div>
<div class="abs rl" style="top:784px;"></div>
<div class="abs rl" style="top:853px;"></div>
<div class="abs rl" style="top:923px;"></div>
<div class="abs rl" style="top:973px;"></div>
<div class="abs rl" style="top:1023px;"></div>
<div class="abs rl" style="top:1092px;"></div>
<div class="abs rl" style="top:1130px;"></div>
<div class="abs rl" style="top:1168px;"></div>
<div class="abs num" style="left:373px;width:69px;top:708.06px;">10</div>
<div class="abs fld" style="top:700.70px;">NEUROSCIENCE<br>&amp; BEHAVIOR</div>
<div class="abs num" style="left:700px;width:137.5px;top:708.06px;">961</div>
<div class="abs num" style="left:860px;width:142.5px;top:708.06px;">12,971</div>
<div class="abs num" style="left:1040px;width:138.5px;top:708.06px;">13.50</div>
<div class="abs bar" style="top:707px;"><i style="width:6px;"></i><b>7</b></div>
<div class="abs num" style="left:373px;width:69px;top:752.06px;">11</div>
<div class="abs fld" style="top:754.40px;">GEOSCIENCES</div>
<div class="abs num" style="left:700px;width:137.5px;top:752.06px;">764</div>
<div class="abs num" style="left:860px;width:142.5px;top:752.06px;">9,886</div>
<div class="abs num" style="left:1040px;width:138.5px;top:752.06px;">12.94</div>
<div class="abs bar" style="top:751px;"><i style="width:20px;"></i><b>22</b></div>
<div class="abs num" style="left:373px;width:69px;top:805.06px;">12</div>
<div class="abs fld" style="top:788.00px;">SOCIAL<br>SCIENCES,<br>GENERAL</div>
<div class="abs num" style="left:700px;width:137.5px;top:805.06px;">816</div>
<div class="abs num" style="left:860px;width:142.5px;top:805.06px;">9,288</div>
<div class="abs num" style="left:1040px;width:138.5px;top:805.06px;">11.38</div>
<div class="abs bar" style="top:804px;"><i style="width:36px;"></i><b>40</b></div>
<div class="abs num" style="left:373px;width:69px;top:875.06px;">13</div>
<div class="abs fld" style="top:858.00px;">PHARMACOLOG<br>Y &amp;<br>TOXICOLOGY</div>
<div class="abs num" style="left:700px;width:137.5px;top:875.06px;">691</div>
<div class="abs num" style="left:860px;width:142.5px;top:875.06px;">9,255</div>
<div class="abs num" style="left:1040px;width:138.5px;top:875.06px;">13.39</div>
<div class="abs bar" style="top:874px;"><i style="width:15px;"></i><b>16</b></div>
<div class="abs num" style="left:373px;width:69px;top:935.06px;">14</div>
<div class="abs fld" style="top:927.70px;">PSYCHIATRY/PS<br>YCHOLOGY</div>
<div class="abs num" style="left:700px;width:137.5px;top:935.06px;">768</div>
<div class="abs num" style="left:860px;width:142.5px;top:935.06px;">8,455</div>
<div class="abs num" style="left:1040px;width:138.5px;top:935.06px;">11.01</div>
<div class="abs bar" style="top:934px;"><i style="width:13px;"></i><b>14</b></div>
<div class="abs num" style="left:373px;width:69px;top:985.06px;">15</div>
<div class="abs fld" style="top:977.70px;">AGRICULTURAL<br>SCIENCES</div>
<div class="abs num" style="left:700px;width:137.5px;top:985.06px;">496</div>
<div class="abs num" style="left:860px;width:142.5px;top:985.06px;">7,306</div>
<div class="abs num" style="left:1040px;width:138.5px;top:985.06px;">14.73</div>
<div class="abs bar" style="top:984px;"><i style="width:8px;"></i><b>9</b></div>
<div class="abs num" style="left:373px;width:69px;top:1044.06px;">16</div>
<div class="abs fld" style="top:1027.00px;">PLANT &amp;<br>ANIMAL<br>SCIENCE</div>
<div class="abs num" style="left:700px;width:137.5px;top:1044.06px;">411</div>
<div class="abs num" style="left:860px;width:142.5px;top:1044.06px;">6,769</div>
<div class="abs num" style="left:1040px;width:138.5px;top:1044.06px;">16.47</div>
<div class="abs bar" style="top:1043px;"><i style="width:15px;"></i><b>16</b></div>
<div class="abs num" style="left:373px;width:69px;top:1098.06px;">17</div>
<div class="abs fld" style="top:1100.40px;">IMMUNOLOGY</div>
<div class="abs num" style="left:700px;width:137.5px;top:1098.06px;">417</div>
<div class="abs num" style="left:860px;width:142.5px;top:1098.06px;">6,206</div>
<div class="abs num" style="left:1040px;width:138.5px;top:1098.06px;">14.88</div>
<div class="abs bar" style="top:1097px;"><i style="width:3px;"></i><b>3</b></div>
<div class="abs num" style="left:373px;width:69px;top:1136.06px;">18</div>
<div class="abs fld" style="top:1138.40px;">MATHEMATICS</div>
<div class="abs num" style="left:700px;width:137.5px;top:1136.06px;">843</div>
<div class="abs num" style="left:860px;width:142.5px;top:1136.06px;">4,970</div>
<div class="abs num" style="left:1040px;width:138.5px;top:1136.06px;">5.90</div>
<div class="abs bar" style="top:1135px;"><i style="width:14px;"></i><b>15</b></div>
<div class="abs num" style="left:373px;width:69px;top:1174.06px;">0</div>
<div class="abs fld" style="top:1176.40px;">ALL FIELDS</div>
<div class="abs num" style="left:700px;width:137.5px;top:1174.06px;">37,472</div>
<div class="abs num" style="left:860px;width:142.5px;top:1174.06px;">659,204</div>
<div class="abs num" style="left:1040px;width:138.5px;top:1174.06px;">17.59</div>
<div class="abs bar" style="top:1173px;"><i style="width:148px;"></i><b style="color:#fff;right:-1px;line-height:25px;">847</b></div>
<div class="abs" style="left:385px;top:1130.5px;width:1027.4px;height:36.8px;border:3px solid #fb1d10;border-radius:4.5px;"></div>
</body>
</html>
